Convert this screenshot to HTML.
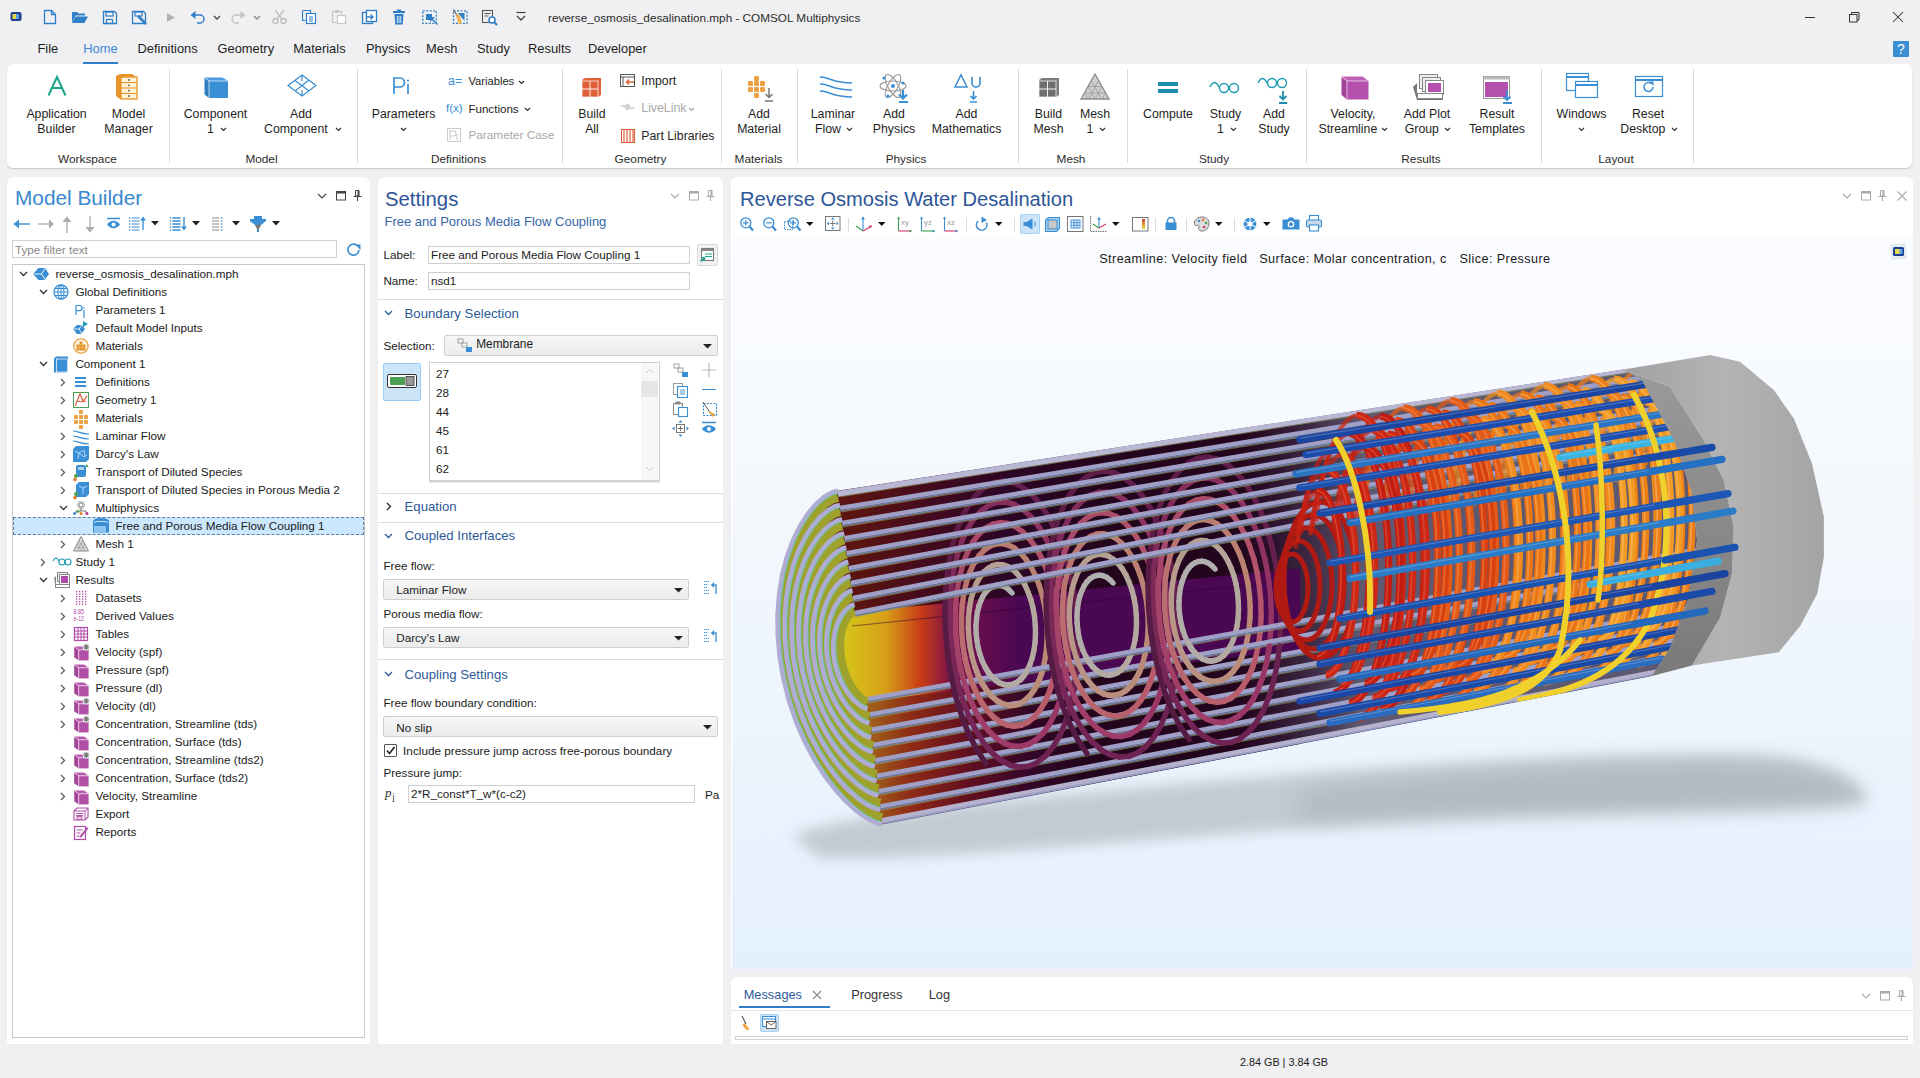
<!DOCTYPE html>
<html><head><meta charset="utf-8"><title>COMSOL</title>
<style>
html,body{margin:0;padding:0;}
body{width:1920px;height:1078px;overflow:hidden;position:relative;background:#f0f0f2;font-family:"Liberation Sans", sans-serif;}
.t{position:absolute;line-height:1;white-space:nowrap;}
svg{overflow:visible}
</style></head><body>
<svg style="position:absolute;left:10px;top:11px;" width="12" height="11" viewBox="0 0 12 11"><rect x="0.5" y="1" width="11" height="9" rx="2" fill="#1c3f8f"/><rect x="2.5" y="3" width="6" height="5" fill="#e8d84a"/><rect x="6" y="3" width="3" height="5" fill="#5aa0e0"/></svg><svg style="position:absolute;left:43px;top:9px;" width="14" height="16" viewBox="0 0 14 16"><path d="M1.5 1.5h7l4 4v9h-11z M8.5 1.5v4h4" fill="none" stroke="#2f7fc8" stroke-width="1.3"/></svg><svg style="position:absolute;left:71px;top:10px;" width="18" height="14" viewBox="0 0 18 14"><path d="M1 2h5l1.5 1.5H14v2H4.5L1 12.5z" fill="#2f7fc8"/><path d="M4.5 6.5H17L13.5 13H1z" fill="#2f7fc8"/></svg><svg style="position:absolute;left:102px;top:10px;" width="16" height="15" viewBox="0 0 16 15"><path d="M1.5 1.5h11l2 2v10h-13z" fill="none" stroke="#2f7fc8" stroke-width="1.3"/><rect x="4" y="2" width="7" height="4" fill="none" stroke="#2f7fc8" stroke-width="1.2"/><rect x="4.5" y="9.5" width="6" height="4" fill="none" stroke="#2f7fc8" stroke-width="1.2"/></svg><svg style="position:absolute;left:131px;top:10px;" width="18" height="16" viewBox="0 0 18 16"><path d="M1.5 1.5h11l2 2v10h-13z" fill="none" stroke="#2f7fc8" stroke-width="1.3"/><rect x="4" y="2" width="7" height="4" fill="none" stroke="#2f7fc8" stroke-width="1.2"/><path d="M7 6l8 8" stroke="#2f7fc8" stroke-width="2.5"/></svg><svg style="position:absolute;left:166px;top:12px;" width="10" height="11" viewBox="0 0 10 11"><path d="M1 1l8 4.5-8 4.5z" fill="#b4b4b4"/></svg><svg style="position:absolute;left:190px;top:10px;" width="16" height="14" viewBox="0 0 16 14"><path d="M4 5h6a4 4 0 010 8H7" fill="none" stroke="#2f7fc8" stroke-width="1.5"/><path d="M0.5 5l5-4v8z" fill="#2f7fc8"/></svg><svg style="position:absolute;left:213px;top:15px;" width="8" height="6" viewBox="0 0 8 6"><path d="M1 1l3 3 3-3" fill="none" stroke="#444" stroke-width="1.3"/></svg><svg style="position:absolute;left:230px;top:10px;" width="16" height="14" viewBox="0 0 16 14"><path d="M12 5H6a4 4 0 000 8h3" fill="none" stroke="#c4c4c4" stroke-width="1.5"/><path d="M15.5 5l-5-4v8z" fill="#c4c4c4"/></svg><svg style="position:absolute;left:253px;top:15px;" width="8" height="6" viewBox="0 0 8 6"><path d="M1 1l3 3 3-3" fill="none" stroke="#888" stroke-width="1.3"/></svg><svg style="position:absolute;left:272px;top:9px;" width="15" height="16" viewBox="0 0 15 16"><circle cx="3.5" cy="12" r="2.5" fill="none" stroke="#bdbdbd" stroke-width="1.3"/><circle cx="11.5" cy="12" r="2.5" fill="none" stroke="#bdbdbd" stroke-width="1.3"/><path d="M5 10L12 1M10 10L3 1" stroke="#bdbdbd" stroke-width="1.3"/></svg><svg style="position:absolute;left:301px;top:9px;" width="16" height="16" viewBox="0 0 16 16"><path d="M1.5 1.5h8v3" fill="none" stroke="#2f7fc8" stroke-width="1.1"/><path d="M1.5 1.5v10h3" fill="none" stroke="#2f7fc8" stroke-width="1.1"/><rect x="5.5" y="4.5" width="9" height="10" fill="#fff" stroke="#2f7fc8" stroke-width="1.2"/><path d="M8 8h4M8 10h4M8 12h4" stroke="#2f7fc8" stroke-width="1"/></svg><svg style="position:absolute;left:331px;top:9px;" width="16" height="16" viewBox="0 0 16 16"><rect x="1.5" y="2.5" width="9" height="11" fill="none" stroke="#c8c8c8" stroke-width="1.2"/><rect x="6.5" y="6.5" width="8" height="8" fill="#fff" stroke="#c8c8c8" stroke-width="1.2"/><rect x="4" y="1" width="4" height="3" fill="#c8c8c8"/></svg><svg style="position:absolute;left:361px;top:9px;" width="17" height="16" viewBox="0 0 17 16"><rect x="1.5" y="3.5" width="10" height="11" fill="none" stroke="#2f7fc8" stroke-width="1.3"/><rect x="5.5" y="1.5" width="10" height="11" fill="#fff" stroke="#2f7fc8" stroke-width="1.3"/><path d="M6 8h6M9.5 5.5L12 8l-2.5 2.5" fill="none" stroke="#2f7fc8" stroke-width="1.4"/></svg><svg style="position:absolute;left:392px;top:9px;" width="14" height="16" viewBox="0 0 14 16"><rect x="1" y="2" width="12" height="2" fill="#2f7fc8"/><rect x="5" y="0.5" width="4" height="2" fill="#2f7fc8"/><path d="M2.5 5h9l-0.8 10.5H3.3z" fill="#2f7fc8"/><path d="M5.3 7v7M7 7v7M8.7 7v7" stroke="#fff" stroke-width="0.8"/></svg><svg style="position:absolute;left:422px;top:9px;" width="17" height="16" viewBox="0 0 17 16"><rect x="0.8" y="1.8" width="13.5" height="12.5" fill="none" stroke="#2f7fc8" stroke-width="1.3" stroke-dasharray="2 1.5"/><rect x="4" y="5" width="6" height="6" fill="#2f7fc8"/><path d="M8 8l7.5 7.5" stroke="#2f7fc8" stroke-width="1.5"/><path d="M8 8h5l-5 5z" fill="#2f7fc8"/></svg><svg style="position:absolute;left:452px;top:9px;" width="17" height="17" viewBox="0 0 17 17"><rect x="1.5" y="1.8" width="13.5" height="12.5" fill="none" stroke="#2f7fc8" stroke-width="1.3" stroke-dasharray="2 1.5"/><path d="M6 4h6.5v8z" fill="#2f7fc8"/><path d="M1.5 0.5l4 7" stroke="#666" stroke-width="1.1"/><path d="M4 6.5l3 -1.5 3 9-3 1.5z" fill="#f0b050"/></svg><svg style="position:absolute;left:481px;top:9px;" width="17" height="17" viewBox="0 0 17 17"><rect x="1.5" y="1.5" width="10" height="12" fill="none" stroke="#555" stroke-width="1.1"/><path d="M3.5 4.5h6M3.5 7h4" stroke="#555" stroke-width="1"/><circle cx="11" cy="11" r="3" fill="#fff" stroke="#2f7fc8" stroke-width="1.5"/><path d="M13 13l3 3" stroke="#2f7fc8" stroke-width="2"/></svg><svg style="position:absolute;left:515px;top:11px;" width="12" height="11" viewBox="0 0 12 11"><path d="M1.5 1.5h9" stroke="#444" stroke-width="1.2"/><path d="M2 5l4 4 4-4" fill="none" stroke="#444" stroke-width="1.3"/></svg><div class="t" style="left:548.0px;top:12.1px;font-size:11.75px;color:#2b2b2b;">reverse_osmosis_desalination.mph - COMSOL Multiphysics</div><div style="position:absolute;left:1805px;top:17px;width:10px;height:1px;background:#333"></div><svg style="position:absolute;left:1848px;top:11px;" width="12" height="12" viewBox="0 0 12 12"><rect x="1.5" y="3.5" width="7.5" height="7.5" fill="none" stroke="#333" stroke-width="1"/><path d="M3.5 3.5v-2h7.5v7.5h-2" fill="none" stroke="#333" stroke-width="1"/></svg><svg style="position:absolute;left:1892px;top:11px;" width="12" height="12" viewBox="0 0 12 12"><path d="M1 1l10 10M11 1l-10 10" stroke="#333" stroke-width="1.05"/></svg><div style="position:absolute;left:1893px;top:41px;width:16px;height:16px;background:#3a8ed4;border-radius:1px"></div><div class="t" style="left:1893.0px;width:16px;text-align:center;top:42.1px;font-size:14px;color:#fff;">?</div><div class="t" style="left:37.5px;top:42.9px;font-size:12.9px;color:#1e1e1e;">File</div><div class="t" style="left:83.3px;top:42.9px;font-size:12.9px;color:#3e8ad6;">Home</div><div class="t" style="left:137.5px;top:42.9px;font-size:12.9px;color:#1e1e1e;">Definitions</div><div class="t" style="left:217.5px;top:42.9px;font-size:12.9px;color:#1e1e1e;">Geometry</div><div class="t" style="left:293.3px;top:42.9px;font-size:12.9px;color:#1e1e1e;">Materials</div><div class="t" style="left:366.0px;top:42.9px;font-size:12.9px;color:#1e1e1e;">Physics</div><div class="t" style="left:426.0px;top:42.9px;font-size:12.9px;color:#1e1e1e;">Mesh</div><div class="t" style="left:477.0px;top:42.9px;font-size:12.9px;color:#1e1e1e;">Study</div><div class="t" style="left:528.0px;top:42.9px;font-size:12.9px;color:#1e1e1e;">Results</div><div class="t" style="left:588.0px;top:42.9px;font-size:12.9px;color:#1e1e1e;">Developer</div><div style="position:absolute;left:83px;top:62px;width:35px;height:2px;background:#2f80c9"></div><div style="position:absolute;left:7px;top:64px;width:1905px;height:104px;background:#fff;border-radius:6px;box-shadow:0 1px 1.5px rgba(0,0,0,0.18)"></div><div style="position:absolute;left:169px;top:69px;width:1px;height:94px;background:#dadada"></div><div style="position:absolute;left:357px;top:69px;width:1px;height:94px;background:#dadada"></div><div style="position:absolute;left:562px;top:69px;width:1px;height:94px;background:#dadada"></div><div style="position:absolute;left:721px;top:69px;width:1px;height:94px;background:#dadada"></div><div style="position:absolute;left:797px;top:69px;width:1px;height:94px;background:#dadada"></div><div style="position:absolute;left:1018px;top:69px;width:1px;height:94px;background:#dadada"></div><div style="position:absolute;left:1127px;top:69px;width:1px;height:94px;background:#dadada"></div><div style="position:absolute;left:1306px;top:69px;width:1px;height:94px;background:#dadada"></div><div style="position:absolute;left:1541px;top:69px;width:1px;height:94px;background:#dadada"></div><div style="position:absolute;left:1693px;top:69px;width:1px;height:94px;background:#dadada"></div><div class="t" style="left:-13.5px;width:140px;text-align:center;top:107.9px;font-size:12.3px;color:#1e1e1e;">Application</div><div class="t" style="left:-13.5px;width:140px;text-align:center;top:122.5px;font-size:12.3px;color:#1e1e1e;">Builder</div><div class="t" style="left:58.5px;width:140px;text-align:center;top:107.9px;font-size:12.3px;color:#1e1e1e;">Model</div><div class="t" style="left:58.5px;width:140px;text-align:center;top:122.5px;font-size:12.3px;color:#1e1e1e;">Manager</div><div class="t" style="left:145.5px;width:140px;text-align:center;top:107.9px;font-size:12.3px;color:#1e1e1e;">Component</div><div class="t" style="left:145.5px;width:140px;text-align:center;top:122.5px;font-size:12.3px;color:#1e1e1e;">1&nbsp;&nbsp;&nbsp;</div><svg style="position:absolute;left:220px;top:127px;" width="7" height="5" viewBox="0 0 7 5"><path d="M1 1l2.5 2.5L6 1" fill="none" stroke="#333" stroke-width="1.2"/></svg><div class="t" style="left:231.0px;width:140px;text-align:center;top:107.9px;font-size:12.3px;color:#1e1e1e;">Add</div><div class="t" style="left:231.0px;width:140px;text-align:center;top:122.5px;font-size:12.3px;color:#1e1e1e;">Component&nbsp;&nbsp;&nbsp;</div><svg style="position:absolute;left:334.5px;top:127px;" width="7" height="5" viewBox="0 0 7 5"><path d="M1 1l2.5 2.5L6 1" fill="none" stroke="#333" stroke-width="1.2"/></svg><div class="t" style="left:333.5px;width:140px;text-align:center;top:107.9px;font-size:12.3px;color:#1e1e1e;">Parameters</div><svg style="position:absolute;left:400px;top:127px;" width="7" height="5" viewBox="0 0 7 5"><path d="M1 1l2.5 2.5L6 1" fill="none" stroke="#333" stroke-width="1.2"/></svg><div class="t" style="left:468.4px;top:76.0px;font-size:11.2px;color:#1e1e1e;">Variables</div><svg style="position:absolute;left:517.5px;top:80px;" width="7" height="5" viewBox="0 0 7 5"><path d="M1 1l2.5 2.5L6 1" fill="none" stroke="#333" stroke-width="1.2"/></svg><div class="t" style="left:468.4px;top:102.8px;font-size:11.6px;color:#1e1e1e;">Functions</div><svg style="position:absolute;left:524px;top:107px;" width="7" height="5" viewBox="0 0 7 5"><path d="M1 1l2.5 2.5L6 1" fill="none" stroke="#333" stroke-width="1.2"/></svg><div class="t" style="left:468.4px;top:130.3px;font-size:11.8px;color:#a9a9a9;">Parameter Case</div><div class="t" style="left:522.0px;width:140px;text-align:center;top:107.9px;font-size:12.3px;color:#1e1e1e;">Build</div><div class="t" style="left:522.0px;width:140px;text-align:center;top:122.5px;font-size:12.3px;color:#1e1e1e;">All</div><div class="t" style="left:641.3px;top:75.1px;font-size:12.3px;color:#1e1e1e;">Import</div><div class="t" style="left:641.3px;top:102.2px;font-size:12.3px;color:#a9a9a9;">LiveLink</div><svg style="position:absolute;left:688px;top:107px;" width="7" height="5" viewBox="0 0 7 5"><path d="M1 1l2.5 2.5L6 1" fill="none" stroke="#aaa" stroke-width="1.2"/></svg><div class="t" style="left:641.3px;top:129.9px;font-size:12.3px;color:#1e1e1e;">Part Libraries</div><div class="t" style="left:689.0px;width:140px;text-align:center;top:107.9px;font-size:12.3px;color:#1e1e1e;">Add</div><div class="t" style="left:689.0px;width:140px;text-align:center;top:122.5px;font-size:12.3px;color:#1e1e1e;">Material</div><div class="t" style="left:763.0px;width:140px;text-align:center;top:107.9px;font-size:12.3px;color:#1e1e1e;">Laminar</div><div class="t" style="left:763.0px;width:140px;text-align:center;top:122.5px;font-size:12.3px;color:#1e1e1e;">Flow&nbsp;&nbsp;&nbsp;</div><svg style="position:absolute;left:846px;top:127px;" width="7" height="5" viewBox="0 0 7 5"><path d="M1 1l2.5 2.5L6 1" fill="none" stroke="#333" stroke-width="1.2"/></svg><div class="t" style="left:824.0px;width:140px;text-align:center;top:107.9px;font-size:12.3px;color:#1e1e1e;">Add</div><div class="t" style="left:824.0px;width:140px;text-align:center;top:122.5px;font-size:12.3px;color:#1e1e1e;">Physics</div><div class="t" style="left:896.5px;width:140px;text-align:center;top:107.9px;font-size:12.3px;color:#1e1e1e;">Add</div><div class="t" style="left:896.5px;width:140px;text-align:center;top:122.5px;font-size:12.3px;color:#1e1e1e;">Mathematics</div><div class="t" style="left:978.5px;width:140px;text-align:center;top:107.9px;font-size:12.3px;color:#1e1e1e;">Build</div><div class="t" style="left:978.5px;width:140px;text-align:center;top:122.5px;font-size:12.3px;color:#1e1e1e;">Mesh</div><div class="t" style="left:1025.0px;width:140px;text-align:center;top:107.9px;font-size:12.3px;color:#1e1e1e;">Mesh</div><div class="t" style="left:1025.0px;width:140px;text-align:center;top:122.5px;font-size:12.3px;color:#1e1e1e;">1&nbsp;&nbsp;&nbsp;</div><svg style="position:absolute;left:1099px;top:127px;" width="7" height="5" viewBox="0 0 7 5"><path d="M1 1l2.5 2.5L6 1" fill="none" stroke="#333" stroke-width="1.2"/></svg><div class="t" style="left:1098.0px;width:140px;text-align:center;top:107.9px;font-size:12.3px;color:#1e1e1e;">Compute</div><div class="t" style="left:1155.5px;width:140px;text-align:center;top:107.9px;font-size:12.3px;color:#1e1e1e;">Study</div><div class="t" style="left:1155.5px;width:140px;text-align:center;top:122.5px;font-size:12.3px;color:#1e1e1e;">1&nbsp;&nbsp;&nbsp;</div><svg style="position:absolute;left:1229.5px;top:127px;" width="7" height="5" viewBox="0 0 7 5"><path d="M1 1l2.5 2.5L6 1" fill="none" stroke="#333" stroke-width="1.2"/></svg><div class="t" style="left:1204.0px;width:140px;text-align:center;top:107.9px;font-size:12.3px;color:#1e1e1e;">Add</div><div class="t" style="left:1204.0px;width:140px;text-align:center;top:122.5px;font-size:12.3px;color:#1e1e1e;">Study</div><div class="t" style="left:1283.0px;width:140px;text-align:center;top:107.9px;font-size:12.3px;color:#1e1e1e;">Velocity,</div><div class="t" style="left:1283.0px;width:140px;text-align:center;top:122.5px;font-size:12.3px;color:#1e1e1e;">Streamline&nbsp;&nbsp;&nbsp;</div><svg style="position:absolute;left:1381px;top:127px;" width="7" height="5" viewBox="0 0 7 5"><path d="M1 1l2.5 2.5L6 1" fill="none" stroke="#333" stroke-width="1.2"/></svg><div class="t" style="left:1357.0px;width:140px;text-align:center;top:107.9px;font-size:12.3px;color:#1e1e1e;">Add Plot</div><div class="t" style="left:1357.0px;width:140px;text-align:center;top:122.5px;font-size:12.3px;color:#1e1e1e;">Group&nbsp;&nbsp;&nbsp;</div><svg style="position:absolute;left:1444px;top:127px;" width="7" height="5" viewBox="0 0 7 5"><path d="M1 1l2.5 2.5L6 1" fill="none" stroke="#333" stroke-width="1.2"/></svg><div class="t" style="left:1427.0px;width:140px;text-align:center;top:107.9px;font-size:12.3px;color:#1e1e1e;">Result</div><div class="t" style="left:1427.0px;width:140px;text-align:center;top:122.5px;font-size:12.3px;color:#1e1e1e;">Templates</div><div class="t" style="left:1511.5px;width:140px;text-align:center;top:107.9px;font-size:12.3px;color:#1e1e1e;">Windows</div><svg style="position:absolute;left:1578px;top:127px;" width="7" height="5" viewBox="0 0 7 5"><path d="M1 1l2.5 2.5L6 1" fill="none" stroke="#333" stroke-width="1.2"/></svg><div class="t" style="left:1578.0px;width:140px;text-align:center;top:107.9px;font-size:12.3px;color:#1e1e1e;">Reset</div><div class="t" style="left:1578.0px;width:140px;text-align:center;top:122.5px;font-size:12.3px;color:#1e1e1e;">Desktop&nbsp;&nbsp;&nbsp;</div><svg style="position:absolute;left:1671px;top:127px;" width="7" height="5" viewBox="0 0 7 5"><path d="M1 1l2.5 2.5L6 1" fill="none" stroke="#333" stroke-width="1.2"/></svg><div class="t" style="left:27.5px;width:120px;text-align:center;top:153.8px;font-size:11.8px;color:#2a2a2a;">Workspace</div><div class="t" style="left:201.5px;width:120px;text-align:center;top:153.8px;font-size:11.8px;color:#2a2a2a;">Model</div><div class="t" style="left:398.5px;width:120px;text-align:center;top:153.8px;font-size:11.8px;color:#2a2a2a;">Definitions</div><div class="t" style="left:580.5px;width:120px;text-align:center;top:153.8px;font-size:11.8px;color:#2a2a2a;">Geometry</div><div class="t" style="left:698.5px;width:120px;text-align:center;top:153.8px;font-size:11.8px;color:#2a2a2a;">Materials</div><div class="t" style="left:846.0px;width:120px;text-align:center;top:153.8px;font-size:11.8px;color:#2a2a2a;">Physics</div><div class="t" style="left:1011.0px;width:120px;text-align:center;top:153.8px;font-size:11.8px;color:#2a2a2a;">Mesh</div><div class="t" style="left:1154.0px;width:120px;text-align:center;top:153.8px;font-size:11.8px;color:#2a2a2a;">Study</div><div class="t" style="left:1361.0px;width:120px;text-align:center;top:153.8px;font-size:11.8px;color:#2a2a2a;">Results</div><div class="t" style="left:1556.0px;width:120px;text-align:center;top:153.8px;font-size:11.8px;color:#2a2a2a;">Layout</div><svg style="position:absolute;left:47px;top:76px;" width="20" height="20" viewBox="0 0 20 20"><path d="M1.5 19.5L10 1l8.5 18.5M5 12h10" fill="none" stroke="#1aa58a" stroke-width="2"/></svg><svg style="position:absolute;left:115px;top:73px;" width="25" height="27" viewBox="0 0 25 27"><path d="M1 3l4-2h12l4 3v22H5l-4-3z" fill="#e8922a"/><rect x="6" y="4" width="16" height="22" fill="#fff3d6" stroke="#e8922a" stroke-width="1.3"/><path d="M6 9.5h16M6 15h16M6 20.5h16" stroke="#e8922a" stroke-width="1.2"/><circle cx="14" cy="7" r="0.9" fill="#555"/><circle cx="14" cy="12.3" r="0.9" fill="#555"/><circle cx="14" cy="17.7" r="0.9" fill="#555"/><circle cx="14" cy="23" r="0.9" fill="#555"/></svg><svg style="position:absolute;left:204px;top:75px;" width="25" height="24" viewBox="0 0 25 24"><path d="M0.5 2.5L5 6V23L0.5 19.5Z" fill="#2f7cc0"/><path d="M0.5 2.5H18.5L24 6H5Z" fill="#4a9ae0"/><rect x="5" y="6" width="19" height="17" fill="#3a8ed4"/><path d="M0.5 2.5L5 6V23M5 6H24" fill="none" stroke="#d8ecff" stroke-width="0.8"/></svg><svg style="position:absolute;left:287px;top:74px;" width="30" height="23" viewBox="0 0 30 23"><path d="M15 1L29 11.5 15 22 1 11.5z M8 6.5L22 17M22 6L8 17 M15 1v6M15 16v6" fill="none" stroke="#3a8ed4" stroke-width="1.2"/></svg><svg style="position:absolute;left:392px;top:76px;" width="20" height="20" viewBox="0 0 20 20"><path d="M2 18V2h6a4.5 4.5 0 010 9H2" fill="none" stroke="#3a8ed4" stroke-width="1.7"/><path d="M16 8v10" stroke="#3a8ed4" stroke-width="1.7"/><circle cx="16" cy="4.5" r="1.1" fill="#3a8ed4"/></svg><div class="t" style="left:448.0px;top:74.7px;font-size:12.5px;color:#3a8ed4;">a=</div><div class="t" style="left:446.0px;top:102.6px;font-size:11.5px;color:#3a8ed4;">f(x)</div><svg style="position:absolute;left:447px;top:128px;" width="15" height="15" viewBox="0 0 15 15"><rect x="0.5" y="0.5" width="13" height="13" fill="none" stroke="#ccc"/><path d="M3 12V3h3.5a2.5 2.5 0 010 5H3M10 6v6" fill="none" stroke="#ccc" stroke-width="1.1"/></svg><svg style="position:absolute;left:581px;top:77px;" width="21" height="20" viewBox="0 0 21 20"><path d="M1 3l3-2h16v17l-3 2H1z" fill="#e0603a"/><rect x="1" y="4" width="16" height="16" fill="#e0603a" stroke="#fff" stroke-width="0.7"/><path d="M9 4v16M1 12h16" stroke="#fff" stroke-width="0.9"/></svg><svg style="position:absolute;left:620px;top:74px;" width="15" height="13" viewBox="0 0 15 13"><rect x="0.5" y="0.5" width="14" height="12" fill="none" stroke="#555" stroke-width="1"/><path d="M0.5 3h14M3 3v9.5" stroke="#555" stroke-width="1"/><path d="M14 8H7M9 5.5L6.5 8 9 10.5" fill="none" stroke="#e0603a" stroke-width="1.4"/></svg><svg style="position:absolute;left:620px;top:101px;" width="15" height="12" viewBox="0 0 15 12"><path d="M1 5h8l-2-2M14 7H6l2 2" fill="none" stroke="#c8c8c8" stroke-width="1.6"/></svg><svg style="position:absolute;left:621px;top:128px;" width="14" height="15" viewBox="0 0 14 15"><rect x="0.5" y="1.5" width="13" height="13" fill="none" stroke="#e0603a" stroke-width="1"/><path d="M3 2v12M6 2v12M9 2v12M12 2v12" stroke="#e0603a" stroke-width="1.2"/></svg><svg style="position:absolute;left:748px;top:76px;" width="27" height="27" viewBox="0 0 27 27"><rect x="6" y="0" width="5" height="5" rx="1.3" fill="#eea044"/><rect x="0" y="5" width="5" height="5" rx="1.3" fill="#eea044"/><rect x="6" y="5" width="5" height="5" rx="1.3" fill="#eea044"/><rect x="12" y="5" width="5" height="5" rx="1.3" fill="#eea044"/><rect x="0" y="11" width="5" height="5" rx="1.3" fill="#eea044"/><rect x="6" y="11" width="5" height="5" rx="1.3" fill="#eea044"/><rect x="12" y="11" width="5" height="5" rx="1.3" fill="#eea044"/><rect x="6" y="17" width="5" height="5" rx="1.3" fill="#eea044"/><path d="M21 12v9M17.5 18l3.5 3.5 3.5-3.5M17 25h8" fill="none" stroke="#777" stroke-width="1.5"/></svg><svg style="position:absolute;left:819px;top:75px;" width="34" height="24" viewBox="0 0 34 24"><path d="M1 2c10 0 12 6 32 6M1 9c10 0 12 6 32 6M1 16c10 0 12 6 32 6" fill="none" stroke="#3a8ed4" stroke-width="1.5"/></svg><svg style="position:absolute;left:879px;top:72px;" width="32" height="32" viewBox="0 0 32 32"><ellipse cx="14" cy="14" rx="13" ry="5" fill="none" stroke="#999" stroke-width="1.1"/><ellipse cx="14" cy="14" rx="13" ry="5" transform="rotate(60 14 14)" fill="none" stroke="#999" stroke-width="1.1"/><ellipse cx="14" cy="14" rx="13" ry="5" transform="rotate(-60 14 14)" fill="none" stroke="#999" stroke-width="1.1"/><circle cx="14" cy="14" r="2" fill="#3a8ed4"/><circle cx="5" cy="6" r="1.6" fill="#3a8ed4"/><circle cx="24" cy="11" r="1.6" fill="#3a8ed4"/><circle cx="9" cy="24" r="1.6" fill="#3a8ed4"/><path d="M24 18v8M20 22.5l4 4 4-4M20 30h9" fill="none" stroke="#3a8ed4" stroke-width="2.2"/></svg><svg style="position:absolute;left:953px;top:73px;" width="30" height="30" viewBox="0 0 30 30"><path d="M2 14L8 2l6 12z" fill="none" stroke="#3a8ed4" stroke-width="1.5"/><path d="M19 4v6a4 4 0 008 0V4" fill="none" stroke="#3a8ed4" stroke-width="1.6"/><path d="M20.5 18v8M17.5 23l3 3 3-3M17 29h7" fill="none" stroke="#3a8ed4" stroke-width="1.6"/></svg><svg style="position:absolute;left:1038px;top:77px;" width="22" height="21" viewBox="0 0 22 21"><path d="M1 3l3-2h17v17l-3 2H1z" fill="#7b7b7b"/><rect x="1" y="4" width="17" height="16" fill="#6f6f6f" stroke="#fff" stroke-width="0.7"/><path d="M9.5 4v16M1 12h17" stroke="#fff" stroke-width="0.9"/></svg><svg style="position:absolute;left:1080px;top:73px;" width="30" height="28" viewBox="0 0 30 28"><path d="M15 1L29 26H1z" fill="#d0d0d0" stroke="#8a8a8a" stroke-width="1.3"/><path d="M8 13.5h14M4.5 20h21M11.5 7.5l10 18.5M18.5 7.5l-10 18.5M8 13.5l7 12.5M22 13.5l-7 12.5M4.5 20l3.5 6M25.5 20l-3.5 6" stroke="#999" stroke-width="0.8"/></svg><svg style="position:absolute;left:1158px;top:82px;" width="20" height="12" viewBox="0 0 20 12"><rect x="0" y="0" width="20" height="4" fill="#1d8fae"/><rect x="0" y="7" width="20" height="4" fill="#1d8fae"/></svg><svg style="position:absolute;left:1209px;top:79px;" width="32" height="16" viewBox="0 0 32 16"><path d="M1 8c3-6 6-6 9 0" fill="none" stroke="#1d9bb5" stroke-width="1.4"/><circle cx="15" cy="9" r="4.5" fill="none" stroke="#1d9bb5" stroke-width="1.4"/><circle cx="25" cy="9" r="4.5" fill="none" stroke="#1d9bb5" stroke-width="1.4"/><path d="M19.5 9h1" stroke="#1d9bb5" stroke-width="1.4"/></svg><svg style="position:absolute;left:1257px;top:75px;" width="32" height="30" viewBox="0 0 32 30"><path d="M1 8c3-6 6-6 9 0" fill="none" stroke="#1d9bb5" stroke-width="1.4"/><circle cx="15" cy="8" r="4.5" fill="none" stroke="#1d9bb5" stroke-width="1.4"/><circle cx="25" cy="8" r="4.5" fill="none" stroke="#1d9bb5" stroke-width="1.4"/><path d="M19.5 9h1" stroke="#1d9bb5" stroke-width="1.4"/><path d="M26 16v8M22.5 21l3.5 3.5 3.5-3.5M22 28h8" fill="none" stroke="#1d8fae" stroke-width="1.8"/></svg><svg style="position:absolute;left:1341px;top:74px;" width="28" height="26" viewBox="0 0 28 26"><path d="M0.5 2.5L6 7V25.5L0.5 21Z" fill="#a0449a"/><path d="M0.5 2.5H21.5L27.5 7H6Z" fill="#c060b8"/><rect x="6" y="7" width="21.5" height="18.5" fill="#b54fad"/><path d="M0.5 2.5L6 7V25.5M6 7H27.5" fill="none" stroke="#f4d8f0" stroke-width="0.8"/></svg><svg style="position:absolute;left:1413px;top:73px;" width="31" height="27" viewBox="0 0 31 27"><path d="M0 14l4-4v12h26v5H4z" fill="#777"/><rect x="6.5" y="1.5" width="18" height="14" fill="#eee" stroke="#888"/><rect x="9.5" y="4.5" width="18" height="14" fill="#eee" stroke="#888"/><rect x="12.5" y="7.5" width="18" height="14" fill="#fff" stroke="#888"/><rect x="15" y="10" width="13" height="9" fill="#b54fad"/><rect x="4.5" y="20.5" width="25" height="5" fill="#fff" stroke="#888"/></svg><svg style="position:absolute;left:1483px;top:76px;" width="32" height="28" viewBox="0 0 32 28"><rect x="0.5" y="0.5" width="26" height="22" fill="#fff" stroke="#999"/><rect x="0.5" y="0.5" width="26" height="3" fill="#bbb"/><rect x="2" y="6" width="23" height="15" fill="#b54fad"/><path d="M24 14v10M20.5 20.5l3.5 3.5 3.5-3.5M20 27h9" fill="none" stroke="#3a8ed4" stroke-width="1.8"/></svg><svg style="position:absolute;left:1566px;top:73px;" width="33" height="26" viewBox="0 0 33 26"><rect x="0.5" y="0.5" width="22" height="17" fill="#fff" stroke="#3a8ed4" stroke-width="1.2"/><path d="M0.5 4h22" stroke="#3a8ed4" stroke-width="2"/><rect x="9.5" y="8.5" width="22" height="16" fill="#fff" stroke="#3a8ed4" stroke-width="1.2"/><path d="M9.5 12h22" stroke="#3a8ed4" stroke-width="2"/></svg><svg style="position:absolute;left:1635px;top:76px;" width="29" height="22" viewBox="0 0 29 22"><rect x="0.5" y="0.5" width="27" height="20" fill="#fff" stroke="#3a8ed4" stroke-width="1.2"/><path d="M0.5 4h27" stroke="#3a8ed4" stroke-width="2"/><path d="M18 11a4.5 4.5 0 11-2-3.8" fill="none" stroke="#3a8ed4" stroke-width="1.5"/><path d="M14 5.5h4.5v4.5z" fill="#3a8ed4"/></svg><div style="position:absolute;left:7px;top:177px;width:363px;height:867px;background:#fff;border-radius:6px 6px 1px 1px;box-shadow:0 0 1px rgba(0,0,0,0.08)"></div><div class="t" style="left:15.0px;top:188.4px;font-size:20.8px;color:#3a88cf;">Model Builder</div><svg style="position:absolute;left:317.4px;top:192.5px;" width="10" height="7" viewBox="0 0 10 7"><path d="M1 1l4 4 4-4" fill="none" stroke="#444" stroke-width="1.1"/></svg><svg style="position:absolute;left:336.4px;top:191px;" width="10" height="9" viewBox="0 0 10 9"><rect x="0.5" y="0.5" width="9" height="8.5" fill="none" stroke="#444" stroke-width="1"/><rect x="0.5" y="0.5" width="9" height="2" fill="#444"/></svg><svg style="position:absolute;left:353.4px;top:190px;" width="9" height="11" viewBox="0 0 9 11"><path d="M2.5 0.5h3.5v5.5H2.5z" fill="none" stroke="#444" stroke-width="1"/><path d="M5.3 0.5v5.5" stroke="#444" stroke-width="1.6"/><path d="M0.5 6.5h8M4.5 7v4" stroke="#444" stroke-width="1.1"/></svg><svg style="position:absolute;left:13px;top:217px;" width="18" height="14" viewBox="0 0 18 14"><path d="M4 7h13" stroke="#3a8ed4" stroke-width="1.4"/><path d="M0.5 7L6 2.5v9z" fill="#3a8ed4"/></svg><svg style="position:absolute;left:37px;top:217px;" width="18" height="14" viewBox="0 0 18 14"><path d="M1 7h12" stroke="#aaa" stroke-width="1.3"/><path d="M17 7l-5-4.5v9z" fill="#aaa"/></svg><svg style="position:absolute;left:61px;top:216px;" width="12" height="17" viewBox="0 0 12 17"><path d="M6 5v12" stroke="#aaa" stroke-width="1.3"/><path d="M6 0.5L1.5 6h9z" fill="#aaa"/></svg><svg style="position:absolute;left:84px;top:216px;" width="12" height="17" viewBox="0 0 12 17"><path d="M6 0v12" stroke="#aaa" stroke-width="1.3"/><path d="M6 16.5L1.5 11h9z" fill="#aaa"/></svg><svg style="position:absolute;left:106px;top:217px;" width="15" height="13" viewBox="0 0 15 13"><path d="M1 1.5h13" stroke="#3a8ed4" stroke-width="1.5"/><path d="M1 7.5c4-5 9-5 13 0c-4 5-9 5-13 0z" fill="#3a8ed4"/><circle cx="7.5" cy="7.5" r="2" fill="#fff"/></svg><svg style="position:absolute;left:129px;top:216px;" width="19" height="15" viewBox="0 0 19 15"><path d="M0 2h1.2M0 5h1.2M0 8h1.2M0 11h1.2M0 14h1.2" stroke="#3a8ed4" stroke-width="1.3"/><path d="M2.5 2h8M2.5 5h8M2.5 8h8M2.5 11h8M2.5 14h8" stroke="#3a8ed4" stroke-width="1.1"/><path d="M14 3v11" stroke="#3a8ed4" stroke-width="1.4"/><path d="M14 0.5l-3 4h6z" fill="#3a8ed4"/></svg><svg style="position:absolute;left:151px;top:221px;" width="8" height="5" viewBox="0 0 8 5"><path d="M0 0h8L4 4.5z" fill="#222"/></svg><svg style="position:absolute;left:170px;top:216px;" width="19" height="15" viewBox="0 0 19 15"><path d="M0 2h1.2M0 5h1.2M0 8h1.2M0 11h1.2M0 14h1.2" stroke="#3a8ed4" stroke-width="1.3"/><path d="M2.5 2h8M2.5 5h8M2.5 8h8M2.5 11h8M2.5 14h8" stroke="#3a8ed4" stroke-width="1.6"/><path d="M14 1v11" stroke="#3a8ed4" stroke-width="1.4"/><path d="M14 14.5l-3-4h6z" fill="#3a8ed4"/></svg><svg style="position:absolute;left:192px;top:221px;" width="8" height="5" viewBox="0 0 8 5"><path d="M0 0h8L4 4.5z" fill="#222"/></svg><svg style="position:absolute;left:211px;top:216px;" width="13" height="15" viewBox="0 0 13 15"><path d="M1 2h7M1 5h7M1 8h7M1 11h7M1 14h7" stroke="#888" stroke-width="1.2"/><path d="M9.5 2h2M9.5 5h2M9.5 8h2M9.5 11h2M9.5 14h2" stroke="#3a8ed4" stroke-width="1.2"/></svg><svg style="position:absolute;left:232px;top:221px;" width="8" height="5" viewBox="0 0 8 5"><path d="M0 0h8L4 4.5z" fill="#222"/></svg><svg style="position:absolute;left:250px;top:216px;" width="17" height="17" viewBox="0 0 17 17"><path d="M0 3h16v2l-5 4H5L0 5z" fill="#3a8ed4"/><path d="M5 9h6l-2 4H7z" fill="#777"/><rect x="7" y="13" width="2" height="3" fill="#3a8ed4"/><rect x="4" y="0" width="8" height="4" fill="#3a8ed4"/></svg><svg style="position:absolute;left:272px;top:221px;" width="8" height="5" viewBox="0 0 8 5"><path d="M0 0h8L4 4.5z" fill="#222"/></svg><div style="position:absolute;left:12px;top:240px;width:325px;height:18px;box-sizing:border-box;border:1px solid #cfcfcf;background:#fff"></div><div class="t" style="left:15.0px;top:243.6px;font-size:11.7px;color:#8a8a8a;">Type filter text</div><svg style="position:absolute;left:346px;top:242px;" width="16" height="15" viewBox="0 0 16 15"><path d="M13 8a5.5 5.5 0 11-2-4.6" fill="none" stroke="#3a8ed4" stroke-width="1.6"/><path d="M9 2.5h5.5V8z" fill="#3a8ed4"/></svg><div style="position:absolute;left:12px;top:264px;width:353px;height:774px;box-sizing:border-box;border:1px solid #c8c8c8"></div><svg style="position:absolute;left:18.5px;top:271.40000000000003px;" width="9" height="6" viewBox="0 0 9 6"><path d="M1 1l3.5 3.5L8 1" fill="none" stroke="#333" stroke-width="1.3"/></svg><svg style="position:absolute;left:33px;top:265.8px;" width="17" height="17" viewBox="0 0 17 17"><path d="M0 8L5.5 2h6.5l4 6-4.5 6H5.5z" fill="#3a8ed4"/><path d="M0.5 8h8l3.5 5.5M8.5 8l3.5-5.5" fill="none" stroke="#fff" stroke-width="0.9"/></svg><div class="t" style="left:55.4px;top:267.9px;font-size:11.7px;color:#1a1a1a;">reverse_osmosis_desalination.mph</div><svg style="position:absolute;left:38.5px;top:289.40000000000003px;" width="9" height="6" viewBox="0 0 9 6"><path d="M1 1l3.5 3.5L8 1" fill="none" stroke="#333" stroke-width="1.3"/></svg><svg style="position:absolute;left:53px;top:283.8px;" width="17" height="17" viewBox="0 0 17 17"><circle cx="8" cy="8" r="7" fill="none" stroke="#3a8ed4" stroke-width="1.3"/><ellipse cx="8" cy="8" rx="3" ry="7" fill="none" stroke="#3a8ed4" stroke-width="1.1"/><path d="M1 8h14M2 4.5h12M2 11.5h12M8 1v14" stroke="#3a8ed4" stroke-width="1"/></svg><div class="t" style="left:75.4px;top:285.9px;font-size:11.7px;color:#1a1a1a;">Global Definitions</div><svg style="position:absolute;left:73px;top:301.8px;" width="17" height="17" viewBox="0 0 17 17"><path d="M3 13V3.5h3.5a2.6 2.6 0 010 5.2H3" fill="none" stroke="#3a8ed4" stroke-width="1.2"/><path d="M11 8v8" stroke="#3a8ed4" stroke-width="1.2"/><circle cx="11" cy="5.8" r="0.8" fill="#3a8ed4"/></svg><div class="t" style="left:95.4px;top:303.9px;font-size:11.7px;color:#1a1a1a;">Parameters 1</div><svg style="position:absolute;left:73px;top:319.8px;" width="17" height="17" viewBox="0 0 17 17"><path d="M0 9l4-4h5l3 4-4 5H4z" fill="#3a8ed4"/><path d="M0 9h6l2.5 4.5M6 9l3-4" fill="none" stroke="#fff" stroke-width="0.8"/><path d="M10 1l5 3-5 3z" fill="#1d9bb5"/></svg><div class="t" style="left:95.4px;top:321.9px;font-size:11.7px;color:#1a1a1a;">Default Model Inputs</div><svg style="position:absolute;left:73px;top:337.8px;" width="17" height="17" viewBox="0 0 17 17"><circle cx="8" cy="8" r="7.2" fill="#fff6e6" stroke="#e8922a" stroke-width="1.1"/><rect x="6.5" y="3.5" width="3" height="3" fill="#e8922a"/><rect x="3.5" y="6.5" width="3" height="3" fill="#e8922a"/><rect x="6.5" y="6.5" width="3" height="3" fill="#e8922a"/><rect x="9.5" y="6.5" width="3" height="3" fill="#e8922a"/><rect x="6.5" y="9.5" width="3" height="3" fill="#e8922a"/><rect x="3.5" y="9.5" width="3" height="3" fill="#e8922a"/><rect x="9.5" y="9.5" width="3" height="3" fill="#e8922a"/></svg><div class="t" style="left:95.4px;top:339.9px;font-size:11.7px;color:#1a1a1a;">Materials</div><svg style="position:absolute;left:38.5px;top:361.40000000000003px;" width="9" height="6" viewBox="0 0 9 6"><path d="M1 1l3.5 3.5L8 1" fill="none" stroke="#333" stroke-width="1.3"/></svg><svg style="position:absolute;left:53px;top:355.8px;" width="17" height="17" viewBox="0 0 17 17"><path d="M1 2.5l2-2h12v14l-2 2H1z" fill="#3a8ed4"/><rect x="3.5" y="3" width="11" height="13" fill="#3a8ed4" stroke="#fff" stroke-width="0.7"/></svg><div class="t" style="left:75.4px;top:357.9px;font-size:11.7px;color:#1a1a1a;">Component 1</div><svg style="position:absolute;left:59.5px;top:377.90000000000003px;" width="6" height="9" viewBox="0 0 6 9"><path d="M1 1l3.5 3.5L1 8" fill="none" stroke="#555" stroke-width="1.2"/></svg><svg style="position:absolute;left:73px;top:373.8px;" width="17" height="17" viewBox="0 0 17 17"><path d="M2 4h11M2 8h11M2 12h11" stroke="#3a8ed4" stroke-width="2"/></svg><div class="t" style="left:95.4px;top:375.9px;font-size:11.7px;color:#1a1a1a;">Definitions</div><svg style="position:absolute;left:59.5px;top:395.90000000000003px;" width="6" height="9" viewBox="0 0 6 9"><path d="M1 1l3.5 3.5L1 8" fill="none" stroke="#555" stroke-width="1.2"/></svg><svg style="position:absolute;left:73px;top:391.8px;" width="17" height="17" viewBox="0 0 17 17"><rect x="0.5" y="0.5" width="15" height="15" fill="#fff" stroke="#4aa050" stroke-width="1"/><path d="M2 14L7 2l3 7 4-5M4 9c3 1 6 1 9 0" fill="none" stroke="#e05a3a" stroke-width="1.2"/></svg><div class="t" style="left:95.4px;top:393.9px;font-size:11.7px;color:#1a1a1a;">Geometry 1</div><svg style="position:absolute;left:59.5px;top:413.90000000000003px;" width="6" height="9" viewBox="0 0 6 9"><path d="M1 1l3.5 3.5L1 8" fill="none" stroke="#555" stroke-width="1.2"/></svg><svg style="position:absolute;left:73px;top:409.8px;" width="17" height="17" viewBox="0 0 17 17"><rect x="6" y="0" width="4" height="4" rx="0.8" fill="#eea044"/><rect x="1" y="5" width="4" height="4" rx="0.8" fill="#eea044"/><rect x="6" y="5" width="4" height="4" rx="0.8" fill="#eea044"/><rect x="11" y="5" width="4" height="4" rx="0.8" fill="#eea044"/><rect x="1" y="10" width="4" height="4" rx="0.8" fill="#eea044"/><rect x="6" y="10" width="4" height="4" rx="0.8" fill="#eea044"/><rect x="11" y="10" width="4" height="4" rx="0.8" fill="#eea044"/><rect x="6" y="15" width="4" height="4" rx="0.8" fill="#eea044"/></svg><div class="t" style="left:95.4px;top:411.9px;font-size:11.7px;color:#1a1a1a;">Materials</div><svg style="position:absolute;left:59.5px;top:431.90000000000003px;" width="6" height="9" viewBox="0 0 6 9"><path d="M1 1l3.5 3.5L1 8" fill="none" stroke="#555" stroke-width="1.2"/></svg><svg style="position:absolute;left:73px;top:427.8px;" width="17" height="17" viewBox="0 0 17 17"><path d="M0 3c5 0 7 3 16 3M0 8c5 0 7 3 16 3M0 13c5 0 7 3 16 3" fill="none" stroke="#3a8ed4" stroke-width="1.2"/></svg><div class="t" style="left:95.4px;top:429.9px;font-size:11.7px;color:#1a1a1a;">Laminar Flow</div><svg style="position:absolute;left:59.5px;top:449.90000000000003px;" width="6" height="9" viewBox="0 0 6 9"><path d="M1 1l3.5 3.5L1 8" fill="none" stroke="#555" stroke-width="1.2"/></svg><svg style="position:absolute;left:73px;top:445.8px;" width="17" height="17" viewBox="0 0 17 17"><path d="M0 3l3-3h13v13l-3 3H0z" fill="#3a8ed4"/><path d="M2 5l4 2 5-3M6 7l-1 6M6 7l5 4 3-2M11 4l1 6" fill="none" stroke="#bfe0ff" stroke-width="0.9"/></svg><div class="t" style="left:95.4px;top:447.9px;font-size:11.7px;color:#1a1a1a;">Darcy&#39;s Law</div><svg style="position:absolute;left:59.5px;top:467.90000000000003px;" width="6" height="9" viewBox="0 0 6 9"><path d="M1 1l3.5 3.5L1 8" fill="none" stroke="#555" stroke-width="1.2"/></svg><svg style="position:absolute;left:73px;top:463.8px;" width="17" height="17" viewBox="0 0 17 17"><rect x="3" y="1" width="10" height="12" rx="2" fill="#3a8ed4"/><rect x="5" y="3" width="6" height="3" fill="#fff" opacity="0.6"/><circle cx="3" cy="12" r="2" fill="#4aa050"/><circle cx="2" cy="15.5" r="1.8" fill="#e8782a"/><path d="M14 0l1.5 3h-3z" fill="#4aa050"/></svg><div class="t" style="left:95.4px;top:465.9px;font-size:11.7px;color:#1a1a1a;">Transport of Diluted Species</div><svg style="position:absolute;left:59.5px;top:485.90000000000003px;" width="6" height="9" viewBox="0 0 6 9"><path d="M1 1l3.5 3.5L1 8" fill="none" stroke="#555" stroke-width="1.2"/></svg><svg style="position:absolute;left:73px;top:481.8px;" width="17" height="17" viewBox="0 0 17 17"><path d="M3 3l3-3h10v12l-3 3H3z" fill="#3a8ed4"/><path d="M6 4l4 2 4-2M10 6v6" fill="none" stroke="#bfe0ff" stroke-width="0.9"/><circle cx="3" cy="12" r="2" fill="#4aa050"/><circle cx="2" cy="15.5" r="1.8" fill="#e8782a"/></svg><div class="t" style="left:95.4px;top:483.9px;font-size:11.7px;color:#1a1a1a;">Transport of Diluted Species in Porous Media 2</div><svg style="position:absolute;left:58.5px;top:505.40000000000003px;" width="9" height="6" viewBox="0 0 9 6"><path d="M1 1l3.5 3.5L8 1" fill="none" stroke="#333" stroke-width="1.3"/></svg><svg style="position:absolute;left:73px;top:499.8px;" width="17" height="17" viewBox="0 0 17 17"><ellipse cx="8" cy="5" rx="4" ry="1.6" fill="none" stroke="#999" stroke-width="0.7"/><ellipse cx="8" cy="5" rx="4" ry="1.6" transform="rotate(60 8 5)" fill="none" stroke="#999" stroke-width="0.7"/><ellipse cx="8" cy="5" rx="4" ry="1.6" transform="rotate(-60 8 5)" fill="none" stroke="#999" stroke-width="0.7"/><path d="M8 8v3M3 14V11h10v3" fill="none" stroke="#666" stroke-width="0.9"/><circle cx="1.5" cy="13.5" r="1.5" fill="#3a8ed4"/><circle cx="8" cy="13.5" r="1.5" fill="#e8782a"/><circle cx="14" cy="13.5" r="1.5" fill="#c0389a"/><circle cx="5" cy="11.5" r="1.3" fill="#4aa050"/></svg><div class="t" style="left:95.4px;top:501.9px;font-size:11.7px;color:#1a1a1a;">Multiphysics</div><div style="position:absolute;left:13px;top:517px;width:351px;height:18px;box-sizing:border-box;background:#cce8ff;border:1px dashed #5a7ea8"></div><svg style="position:absolute;left:93px;top:517.8px;" width="17" height="17" viewBox="0 0 17 17"><path d="M0 3.5c0-2 3-3.5 8-3.5 5 0 8 1.5 8 3.5v11H0z" fill="#3a8ed4"/><path d="M1 4.5c2-1.5 12-1.5 14 0" fill="none" stroke="#fff" stroke-width="0.8"/><rect x="1" y="8" width="12" height="6" fill="#8ec5f0"/></svg><div class="t" style="left:115.4px;top:519.9px;font-size:11.7px;color:#1a1a1a;">Free and Porous Media Flow Coupling 1</div><svg style="position:absolute;left:59.5px;top:539.9px;" width="6" height="9" viewBox="0 0 6 9"><path d="M1 1l3.5 3.5L1 8" fill="none" stroke="#555" stroke-width="1.2"/></svg><svg style="position:absolute;left:73px;top:535.8px;" width="17" height="17" viewBox="0 0 17 17"><path d="M8 0.5L15.5 15H0.5z" fill="#dcdcdc" stroke="#888" stroke-width="1"/><path d="M4.3 8h7.4M2.5 11.5h11M6 4.5l6 10.5M10 4.5l-6 10.5M4.3 8l3.7 7M11.7 8L8 15" stroke="#999" stroke-width="0.6"/></svg><div class="t" style="left:95.4px;top:537.9px;font-size:11.7px;color:#1a1a1a;">Mesh 1</div><svg style="position:absolute;left:39.5px;top:557.9px;" width="6" height="9" viewBox="0 0 6 9"><path d="M1 1l3.5 3.5L1 8" fill="none" stroke="#555" stroke-width="1.2"/></svg><svg style="position:absolute;left:53px;top:553.8px;" width="17" height="17" viewBox="0 0 17 17"><path d="M0 7c2-4 4-4 6 0" fill="none" stroke="#1d9bb5" stroke-width="1.1"/><circle cx="9" cy="8" r="3" fill="none" stroke="#1d9bb5" stroke-width="1.1"/><circle cx="15" cy="8" r="3" fill="none" stroke="#1d9bb5" stroke-width="1.1"/></svg><div class="t" style="left:75.4px;top:555.9px;font-size:11.7px;color:#1a1a1a;">Study 1</div><svg style="position:absolute;left:38.5px;top:577.4px;" width="9" height="6" viewBox="0 0 9 6"><path d="M1 1l3.5 3.5L8 1" fill="none" stroke="#333" stroke-width="1.3"/></svg><svg style="position:absolute;left:53px;top:571.8px;" width="17" height="17" viewBox="0 0 17 17"><path d="M1 6l2-2v10h13v2H3z" fill="#888"/><rect x="4.5" y="0.5" width="10" height="9" fill="#eee" stroke="#888"/><rect x="6.5" y="2.5" width="10" height="10" fill="#fff" stroke="#888"/><rect x="8" y="4" width="7" height="7" fill="#b04aa8"/><rect x="2.5" y="12.5" width="14" height="3" fill="#fff" stroke="#888"/></svg><div class="t" style="left:75.4px;top:573.9px;font-size:11.7px;color:#1a1a1a;">Results</div><svg style="position:absolute;left:59.5px;top:593.9px;" width="6" height="9" viewBox="0 0 6 9"><path d="M1 1l3.5 3.5L1 8" fill="none" stroke="#555" stroke-width="1.2"/></svg><svg style="position:absolute;left:73px;top:589.8px;" width="17" height="17" viewBox="0 0 17 17"><rect x="3" y="1" width="1.3" height="1.3" fill="#b04aa8"/><rect x="3" y="3.5" width="1.3" height="1.3" fill="#b04aa8"/><rect x="3" y="6" width="1.3" height="1.3" fill="#b04aa8"/><rect x="3" y="8.5" width="1.3" height="1.3" fill="#b04aa8"/><rect x="3" y="11" width="1.3" height="1.3" fill="#b04aa8"/><rect x="3" y="13.5" width="1.3" height="1.3" fill="#b04aa8"/><rect x="6" y="1" width="1.3" height="1.3" fill="#b04aa8"/><rect x="6" y="3.5" width="1.3" height="1.3" fill="#b04aa8"/><rect x="6" y="6" width="1.3" height="1.3" fill="#b04aa8"/><rect x="6" y="8.5" width="1.3" height="1.3" fill="#b04aa8"/><rect x="6" y="11" width="1.3" height="1.3" fill="#b04aa8"/><rect x="6" y="13.5" width="1.3" height="1.3" fill="#b04aa8"/><rect x="9" y="1" width="1.3" height="1.3" fill="#b04aa8"/><rect x="9" y="3.5" width="1.3" height="1.3" fill="#b04aa8"/><rect x="9" y="6" width="1.3" height="1.3" fill="#b04aa8"/><rect x="9" y="8.5" width="1.3" height="1.3" fill="#b04aa8"/><rect x="9" y="11" width="1.3" height="1.3" fill="#b04aa8"/><rect x="9" y="13.5" width="1.3" height="1.3" fill="#b04aa8"/><rect x="12" y="1" width="1.3" height="1.3" fill="#b04aa8"/><rect x="12" y="3.5" width="1.3" height="1.3" fill="#b04aa8"/><rect x="12" y="6" width="1.3" height="1.3" fill="#b04aa8"/><rect x="12" y="8.5" width="1.3" height="1.3" fill="#b04aa8"/><rect x="12" y="11" width="1.3" height="1.3" fill="#b04aa8"/><rect x="12" y="13.5" width="1.3" height="1.3" fill="#b04aa8"/></svg><div class="t" style="left:95.4px;top:591.9px;font-size:11.7px;color:#1a1a1a;">Datasets</div><svg style="position:absolute;left:59.5px;top:611.9px;" width="6" height="9" viewBox="0 0 6 9"><path d="M1 1l3.5 3.5L1 8" fill="none" stroke="#555" stroke-width="1.2"/></svg><svg style="position:absolute;left:73px;top:607.8px;" width="17" height="17" viewBox="0 0 17 17"><text x="0.5" y="6.3" font-size="6.6" textLength="10.5" lengthAdjust="spacingAndGlyphs" font-family="Liberation Sans" fill="#b04aa8">8.85</text><text x="0.5" y="12.6" font-size="6.6" textLength="10.5" lengthAdjust="spacingAndGlyphs" font-family="Liberation Sans" fill="#b04aa8">e-12</text></svg><div class="t" style="left:95.4px;top:609.9px;font-size:11.7px;color:#1a1a1a;">Derived Values</div><svg style="position:absolute;left:59.5px;top:629.9px;" width="6" height="9" viewBox="0 0 6 9"><path d="M1 1l3.5 3.5L1 8" fill="none" stroke="#555" stroke-width="1.2"/></svg><svg style="position:absolute;left:73px;top:625.8px;" width="17" height="17" viewBox="0 0 17 17"><rect x="1.5" y="1.5" width="13" height="13" fill="none" stroke="#b04aa8" stroke-width="1.2"/><path d="M1.5 5h13M1.5 8h13M1.5 11h13M5 1.5v13M8 1.5v13M11 1.5v13" stroke="#b04aa8" stroke-width="1"/></svg><div class="t" style="left:95.4px;top:627.9px;font-size:11.7px;color:#1a1a1a;">Tables</div><svg style="position:absolute;left:59.5px;top:647.9px;" width="6" height="9" viewBox="0 0 6 9"><path d="M1 1l3.5 3.5L1 8" fill="none" stroke="#555" stroke-width="1.2"/></svg><svg style="position:absolute;left:73px;top:643.8px;" width="17" height="17" viewBox="0 0 17 17"><path d="M1.2 2.6L5.7 5.8V16.4L1.2 13.2Z" fill="#a34596"/><path d="M1.2 2.6H11.1L15.6 5.8H5.7Z" fill="#b85aae"/><rect x="5.7" y="5.8" width="9.9" height="10.6" fill="#b14fa6"/><path d="M1.2 2.6L5.7 5.8V16.4M5.7 5.8H15.6" fill="none" stroke="#f4d8f0" stroke-width="0.8"/><circle cx="13.2" cy="3" r="3.6" fill="#fff"/><path d="M13.2 -0.2v6.4M10 3h6.4M11 0.8l4.4 4.4M15.4 0.8l-4.4 4.4" stroke="#777" stroke-width="1.1"/></svg><div class="t" style="left:95.4px;top:645.9px;font-size:11.7px;color:#1a1a1a;">Velocity (spf)</div><svg style="position:absolute;left:59.5px;top:665.9px;" width="6" height="9" viewBox="0 0 6 9"><path d="M1 1l3.5 3.5L1 8" fill="none" stroke="#555" stroke-width="1.2"/></svg><svg style="position:absolute;left:73px;top:661.8px;" width="17" height="17" viewBox="0 0 17 17"><path d="M1.2 2.6L5.7 5.8V16.4L1.2 13.2Z" fill="#a34596"/><path d="M1.2 2.6H11.1L15.6 5.8H5.7Z" fill="#b85aae"/><rect x="5.7" y="5.8" width="9.9" height="10.6" fill="#b14fa6"/><path d="M1.2 2.6L5.7 5.8V16.4M5.7 5.8H15.6" fill="none" stroke="#f4d8f0" stroke-width="0.8"/></svg><div class="t" style="left:95.4px;top:663.9px;font-size:11.7px;color:#1a1a1a;">Pressure (spf)</div><svg style="position:absolute;left:59.5px;top:683.9px;" width="6" height="9" viewBox="0 0 6 9"><path d="M1 1l3.5 3.5L1 8" fill="none" stroke="#555" stroke-width="1.2"/></svg><svg style="position:absolute;left:73px;top:679.8px;" width="17" height="17" viewBox="0 0 17 17"><path d="M1.2 2.6L5.7 5.8V16.4L1.2 13.2Z" fill="#a34596"/><path d="M1.2 2.6H11.1L15.6 5.8H5.7Z" fill="#b85aae"/><rect x="5.7" y="5.8" width="9.9" height="10.6" fill="#b14fa6"/><path d="M1.2 2.6L5.7 5.8V16.4M5.7 5.8H15.6" fill="none" stroke="#f4d8f0" stroke-width="0.8"/></svg><div class="t" style="left:95.4px;top:681.9px;font-size:11.7px;color:#1a1a1a;">Pressure (dl)</div><svg style="position:absolute;left:59.5px;top:701.9px;" width="6" height="9" viewBox="0 0 6 9"><path d="M1 1l3.5 3.5L1 8" fill="none" stroke="#555" stroke-width="1.2"/></svg><svg style="position:absolute;left:73px;top:697.8px;" width="17" height="17" viewBox="0 0 17 17"><path d="M1.2 2.6L5.7 5.8V16.4L1.2 13.2Z" fill="#a34596"/><path d="M1.2 2.6H11.1L15.6 5.8H5.7Z" fill="#b85aae"/><rect x="5.7" y="5.8" width="9.9" height="10.6" fill="#b14fa6"/><path d="M1.2 2.6L5.7 5.8V16.4M5.7 5.8H15.6" fill="none" stroke="#f4d8f0" stroke-width="0.8"/><circle cx="13.2" cy="3" r="3.6" fill="#fff"/><path d="M13.2 -0.2v6.4M10 3h6.4M11 0.8l4.4 4.4M15.4 0.8l-4.4 4.4" stroke="#777" stroke-width="1.1"/></svg><div class="t" style="left:95.4px;top:699.9px;font-size:11.7px;color:#1a1a1a;">Velocity (dl)</div><svg style="position:absolute;left:59.5px;top:719.9px;" width="6" height="9" viewBox="0 0 6 9"><path d="M1 1l3.5 3.5L1 8" fill="none" stroke="#555" stroke-width="1.2"/></svg><svg style="position:absolute;left:73px;top:715.8px;" width="17" height="17" viewBox="0 0 17 17"><path d="M1.2 2.6L5.7 5.8V16.4L1.2 13.2Z" fill="#a34596"/><path d="M1.2 2.6H11.1L15.6 5.8H5.7Z" fill="#b85aae"/><rect x="5.7" y="5.8" width="9.9" height="10.6" fill="#b14fa6"/><path d="M1.2 2.6L5.7 5.8V16.4M5.7 5.8H15.6" fill="none" stroke="#f4d8f0" stroke-width="0.8"/><circle cx="13.2" cy="3" r="3.6" fill="#fff"/><path d="M13.2 -0.2v6.4M10 3h6.4M11 0.8l4.4 4.4M15.4 0.8l-4.4 4.4" stroke="#777" stroke-width="1.1"/></svg><div class="t" style="left:95.4px;top:717.9px;font-size:11.7px;color:#1a1a1a;">Concentration, Streamline (tds)</div><svg style="position:absolute;left:73px;top:733.8px;" width="17" height="17" viewBox="0 0 17 17"><path d="M1.2 2.6L5.7 5.8V16.4L1.2 13.2Z" fill="#a34596"/><path d="M1.2 2.6H11.1L15.6 5.8H5.7Z" fill="#b85aae"/><rect x="5.7" y="5.8" width="9.9" height="10.6" fill="#b14fa6"/><path d="M1.2 2.6L5.7 5.8V16.4M5.7 5.8H15.6" fill="none" stroke="#f4d8f0" stroke-width="0.8"/></svg><div class="t" style="left:95.4px;top:735.9px;font-size:11.7px;color:#1a1a1a;">Concentration, Surface (tds)</div><svg style="position:absolute;left:59.5px;top:755.9px;" width="6" height="9" viewBox="0 0 6 9"><path d="M1 1l3.5 3.5L1 8" fill="none" stroke="#555" stroke-width="1.2"/></svg><svg style="position:absolute;left:73px;top:751.8px;" width="17" height="17" viewBox="0 0 17 17"><path d="M1.2 2.6L5.7 5.8V16.4L1.2 13.2Z" fill="#a34596"/><path d="M1.2 2.6H11.1L15.6 5.8H5.7Z" fill="#b85aae"/><rect x="5.7" y="5.8" width="9.9" height="10.6" fill="#b14fa6"/><path d="M1.2 2.6L5.7 5.8V16.4M5.7 5.8H15.6" fill="none" stroke="#f4d8f0" stroke-width="0.8"/><circle cx="13.2" cy="3" r="3.6" fill="#fff"/><path d="M13.2 -0.2v6.4M10 3h6.4M11 0.8l4.4 4.4M15.4 0.8l-4.4 4.4" stroke="#777" stroke-width="1.1"/></svg><div class="t" style="left:95.4px;top:753.9px;font-size:11.7px;color:#1a1a1a;">Concentration, Streamline (tds2)</div><svg style="position:absolute;left:59.5px;top:773.9px;" width="6" height="9" viewBox="0 0 6 9"><path d="M1 1l3.5 3.5L1 8" fill="none" stroke="#555" stroke-width="1.2"/></svg><svg style="position:absolute;left:73px;top:769.8px;" width="17" height="17" viewBox="0 0 17 17"><path d="M1.2 2.6L5.7 5.8V16.4L1.2 13.2Z" fill="#a34596"/><path d="M1.2 2.6H11.1L15.6 5.8H5.7Z" fill="#b85aae"/><rect x="5.7" y="5.8" width="9.9" height="10.6" fill="#b14fa6"/><path d="M1.2 2.6L5.7 5.8V16.4M5.7 5.8H15.6" fill="none" stroke="#f4d8f0" stroke-width="0.8"/></svg><div class="t" style="left:95.4px;top:771.9px;font-size:11.7px;color:#1a1a1a;">Concentration, Surface (tds2)</div><svg style="position:absolute;left:59.5px;top:791.9px;" width="6" height="9" viewBox="0 0 6 9"><path d="M1 1l3.5 3.5L1 8" fill="none" stroke="#555" stroke-width="1.2"/></svg><svg style="position:absolute;left:73px;top:787.8px;" width="17" height="17" viewBox="0 0 17 17"><path d="M1.2 2.6L5.7 5.8V16.4L1.2 13.2Z" fill="#a34596"/><path d="M1.2 2.6H11.1L15.6 5.8H5.7Z" fill="#b85aae"/><rect x="5.7" y="5.8" width="9.9" height="10.6" fill="#b14fa6"/><path d="M1.2 2.6L5.7 5.8V16.4M5.7 5.8H15.6" fill="none" stroke="#f4d8f0" stroke-width="0.8"/></svg><div class="t" style="left:95.4px;top:789.9px;font-size:11.7px;color:#1a1a1a;">Velocity, Streamline</div><svg style="position:absolute;left:73px;top:805.8px;" width="17" height="17" viewBox="0 0 17 17"><path d="M1 5l3-3h11v9l-3 3H1z" fill="#fff" stroke="#b04aa8" stroke-width="1.1"/><path d="M1 5h11v9M12 5l3-3" fill="none" stroke="#b04aa8" stroke-width="1"/><path d="M3 7.5h7M3 9.5h7" stroke="#b04aa8" stroke-width="0.9"/><rect x="4" y="10.5" width="5" height="3" fill="#e8c0e0" stroke="#b04aa8" stroke-width="0.8"/></svg><div class="t" style="left:95.4px;top:807.9px;font-size:11.7px;color:#1a1a1a;">Export</div><svg style="position:absolute;left:73px;top:823.8px;" width="17" height="17" viewBox="0 0 17 17"><rect x="1.5" y="2.5" width="11" height="13" fill="none" stroke="#b04aa8" stroke-width="1.2"/><path d="M3.5 6h6M3.5 9h4M3.5 12h3" stroke="#b04aa8" stroke-width="1"/><path d="M7 12l7-9 1.5 1.2-7 9-2 0.5z" fill="#b04aa8"/></svg><div class="t" style="left:95.4px;top:825.9px;font-size:11.7px;color:#1a1a1a;">Reports</div><div style="position:absolute;left:378px;top:177px;width:345px;height:867px;background:#fff;border-radius:6px 6px 1px 1px;box-shadow:0 0 1px rgba(0,0,0,0.08)"></div><div class="t" style="left:385.0px;top:188.8px;font-size:20.3px;color:#2d5597;">Settings</div><svg style="position:absolute;left:669.8px;top:192.5px;" width="10" height="7" viewBox="0 0 10 7"><path d="M1 1l4 4 4-4" fill="none" stroke="#aaa" stroke-width="1.1"/></svg><svg style="position:absolute;left:688.8px;top:191px;" width="10" height="9" viewBox="0 0 10 9"><rect x="0.5" y="0.5" width="9" height="8.5" fill="none" stroke="#aaa" stroke-width="1"/><rect x="0.5" y="0.5" width="9" height="2" fill="#aaa"/></svg><svg style="position:absolute;left:705.8px;top:190px;" width="9" height="11" viewBox="0 0 9 11"><path d="M2.5 0.5h3.5v5.5H2.5z" fill="none" stroke="#aaa" stroke-width="1"/><path d="M5.3 0.5v5.5" stroke="#aaa" stroke-width="1.6"/><path d="M0.5 6.5h8M4.5 7v4" stroke="#aaa" stroke-width="1.1"/></svg><div class="t" style="left:384.5px;top:214.8px;font-size:13.0px;color:#3866aa;">Free and Porous Media Flow Coupling</div><div class="t" style="left:383.4px;top:249.1px;font-size:11.7px;color:#1a1a1a;">Label:</div><div style="position:absolute;left:428px;top:246px;width:262px;height:18px;box-sizing:border-box;border:1px solid #cfcfcf;background:#fff"></div><div class="t" style="left:431.0px;top:249.1px;font-size:11.7px;color:#1a1a1a;">Free and Porous Media Flow Coupling 1</div><div style="position:absolute;left:697px;top:244px;width:21px;height:22px;box-sizing:border-box;border:1px solid #d8d8d8;border-radius:2px;background:#f2f2f2"></div><svg style="position:absolute;left:700px;top:247px;" width="15" height="15" viewBox="0 0 15 15"><rect x="1.5" y="1.5" width="12" height="12" fill="#fff" stroke="#777" stroke-width="1.1"/><rect x="1.5" y="1.5" width="12" height="2.5" fill="#888"/><path d="M5 7h7M5 9.5h7" stroke="#1aa58a" stroke-width="1.2"/><path d="M0.5 14.5l4-4M1.5 10.5h3v3" fill="none" stroke="#1aa58a" stroke-width="1.2"/></svg><div class="t" style="left:383.4px;top:275.1px;font-size:11.7px;color:#1a1a1a;">Name:</div><div style="position:absolute;left:428px;top:272px;width:262px;height:18px;box-sizing:border-box;border:1px solid #cfcfcf;background:#fff"></div><div class="t" style="left:431.0px;top:275.1px;font-size:11.7px;color:#1a1a1a;">nsd1</div><div style="position:absolute;left:378px;top:299px;width:345px;height:1px;background:#dcdcdc"></div><svg style="position:absolute;left:384px;top:309.8px;" width="9" height="6" viewBox="0 0 9 6"><path d="M1 1l3.5 3.5L8 1" fill="none" stroke="#2c5a98" stroke-width="1.3"/></svg><div class="t" style="left:404.5px;top:306.6px;font-size:13.2px;color:#2c5a98;">Boundary Selection</div><div class="t" style="left:383.4px;top:339.6px;font-size:11.7px;color:#1a1a1a;">Selection:</div><div style="position:absolute;left:444px;top:335px;width:274px;height:21px;box-sizing:border-box;border:1px solid #cfcfcf;border-radius:2px;background:linear-gradient(#f6f6f6,#ececec)"></div><div class="t" style="left:476.0px;top:339.6px;font-size:11.7px;color:#1a1a1a;"></div><svg style="position:absolute;left:703px;top:343.5px;" width="9" height="5" viewBox="0 0 9 5"><path d="M0 0h9L4.5 4.5z" fill="#222"/></svg><div class="t" style="left:476.2px;top:339.4px;font-size:11.9px;color:#1a1a1a;">Membrane</div><svg style="position:absolute;left:457px;top:338px;" width="16" height="15" viewBox="0 0 16 15"><rect x="1" y="1" width="5" height="4" fill="none" stroke="#999" stroke-width="0.9"/><rect x="5" y="5" width="5" height="4" fill="none" stroke="#999" stroke-width="0.9"/><rect x="9" y="9" width="6" height="5" fill="#3a8ed4"/></svg><div style="position:absolute;left:383px;top:363px;width:38px;height:38px;box-sizing:border-box;background:#cce4f7;border:1px solid #9ccaf0;border-radius:2px"></div><svg style="position:absolute;left:387px;top:374px;" width="30" height="14" viewBox="0 0 30 14"><rect x="0.5" y="0.5" width="29" height="13" rx="1.5" fill="#fff" stroke="#333" stroke-width="1"/><rect x="3" y="3" width="15" height="8" rx="1" fill="#4aa050"/><rect x="19" y="2.5" width="8" height="9" fill="#999" stroke="#333" stroke-width="0.8"/></svg><div style="position:absolute;left:429px;top:362px;width:231px;height:119px;box-sizing:border-box;border:1px solid #cfcfcf;background:#fff;box-shadow:0 1.5px 0 #d4d4d4"></div><div class="t" style="left:435.9px;top:367.8px;font-size:11.7px;color:#1a1a1a;">27</div><div class="t" style="left:435.9px;top:386.8px;font-size:11.7px;color:#1a1a1a;">28</div><div class="t" style="left:435.9px;top:405.8px;font-size:11.7px;color:#1a1a1a;">44</div><div class="t" style="left:435.9px;top:424.8px;font-size:11.7px;color:#1a1a1a;">45</div><div class="t" style="left:435.9px;top:443.8px;font-size:11.7px;color:#1a1a1a;">61</div><div class="t" style="left:435.9px;top:462.8px;font-size:11.7px;color:#1a1a1a;">62</div><div style="position:absolute;left:641px;top:363px;width:17px;height:117px;background:#f7f7f7"></div><div style="position:absolute;left:641px;top:381px;width:17px;height:16px;background:#e6e6e6"></div><svg style="position:absolute;left:645px;top:369px;" width="9" height="5" viewBox="0 0 9 5"><path d="M1 4l3.5-3.5L8 4" fill="none" stroke="#c8c8c8" stroke-width="1"/></svg><svg style="position:absolute;left:645px;top:466px;" width="9" height="5" viewBox="0 0 9 5"><path d="M1 1l3.5 3.5L8 1" fill="none" stroke="#c8c8c8" stroke-width="1"/></svg><svg style="position:absolute;left:673px;top:363px;" width="16" height="15" viewBox="0 0 16 15"><rect x="1" y="1" width="5" height="4" fill="none" stroke="#999" stroke-width="0.9"/><rect x="5" y="5" width="5" height="4" fill="none" stroke="#999" stroke-width="0.9"/><rect x="9" y="9" width="6" height="5" fill="#3a8ed4"/></svg><svg style="position:absolute;left:702px;top:363px;" width="14" height="14" viewBox="0 0 14 14"><path d="M7 0v14M0 7h14" stroke="#bbb" stroke-width="1.2"/></svg><svg style="position:absolute;left:672px;top:382px;" width="17" height="17" viewBox="0 0 17 17"><rect x="1.5" y="1.5" width="9" height="11" fill="none" stroke="#999" stroke-width="1"/><rect x="5.5" y="4.5" width="10" height="11" fill="#fff" stroke="#3a8ed4" stroke-width="1.1"/><path d="M8 8h5M8 10h5M8 12h5" stroke="#3a8ed4" stroke-width="0.9"/></svg><div style="position:absolute;left:702px;top:389px;width:14px;height:1.3px;background:#3a8ed4"></div><svg style="position:absolute;left:672px;top:401px;" width="17" height="17" viewBox="0 0 17 17"><rect x="1.5" y="2.5" width="9" height="11" fill="none" stroke="#888" stroke-width="1"/><rect x="6.5" y="6.5" width="9" height="9" fill="#fff" stroke="#3a8ed4" stroke-width="1.1"/><rect x="3.5" y="0.5" width="5" height="3" fill="#888"/></svg><svg style="position:absolute;left:701px;top:401px;" width="17" height="17" viewBox="0 0 17 17"><rect x="2.5" y="2.5" width="13" height="12" fill="none" stroke="#3a8ed4" stroke-width="1.1" stroke-dasharray="2 1.3"/><path d="M2 1l8 12" stroke="#555" stroke-width="1"/><path d="M7 10l5 6 2-3z" fill="#f0a030"/></svg><svg style="position:absolute;left:672px;top:420px;" width="17" height="17" viewBox="0 0 17 17"><rect x="4.5" y="4.5" width="8" height="8" fill="none" stroke="#777" stroke-width="1"/><path d="M8.5 6v5M6 8.5h5" stroke="#777" stroke-width="1"/><path d="M8.5 0l-2 2.5h4zM8.5 17l-2-2.5h4zM0 8.5l2.5-2v4zM17 8.5l-2.5-2v4z" fill="#3a8ed4"/></svg><svg style="position:absolute;left:701px;top:421px;" width="16" height="14" viewBox="0 0 16 14"><path d="M1 1.5h14" stroke="#3a8ed4" stroke-width="1.5"/><path d="M1 8c4-5 10-5 14 0c-4 5-10 5-14 0z" fill="#3a8ed4"/><circle cx="8" cy="8" r="2" fill="#fff"/></svg><div style="position:absolute;left:378px;top:493px;width:345px;height:1px;background:#dcdcdc"></div><svg style="position:absolute;left:386px;top:501.5px;" width="6" height="9" viewBox="0 0 6 9"><path d="M1 1l3.5 3.5L1 8" fill="none" stroke="#222" stroke-width="1.3"/></svg><div class="t" style="left:404.5px;top:500.3px;font-size:13.2px;color:#2c5a98;">Equation</div><div style="position:absolute;left:378px;top:522px;width:345px;height:1px;background:#dcdcdc"></div><svg style="position:absolute;left:384px;top:532.6px;" width="9" height="6" viewBox="0 0 9 6"><path d="M1 1l3.5 3.5L8 1" fill="none" stroke="#2c5a98" stroke-width="1.3"/></svg><div class="t" style="left:404.5px;top:529.4px;font-size:13.2px;color:#2c5a98;">Coupled Interfaces</div><div class="t" style="left:383.4px;top:560.0px;font-size:11.7px;color:#1a1a1a;">Free flow:</div><div style="position:absolute;left:383px;top:579px;width:306px;height:21px;box-sizing:border-box;border:1px solid #cfcfcf;border-radius:2px;background:linear-gradient(#f6f6f6,#ececec)"></div><div class="t" style="left:396.2px;top:584.3px;font-size:11.7px;color:#1a1a1a;">Laminar Flow</div><svg style="position:absolute;left:674px;top:587.5px;" width="9" height="5" viewBox="0 0 9 5"><path d="M0 0h9L4.5 4.5z" fill="#222"/></svg><svg style="position:absolute;left:703px;top:580px;" width="15" height="16" viewBox="0 0 15 16"><path d="M1 1.5h5M1 4.5h4M1 7.5h4M1 10.5h5M1 13.5h5" stroke="#3a8ed4" stroke-width="1" stroke-dasharray="1.3 0.7"/><path d="M13 14V5H8.5" fill="none" stroke="#3a8ed4" stroke-width="1.3"/><path d="M8 5l3-3v6z" fill="#3a8ed4"/></svg><div class="t" style="left:383.4px;top:608.0px;font-size:11.7px;color:#1a1a1a;">Porous media flow:</div><div style="position:absolute;left:383px;top:627px;width:306px;height:21px;box-sizing:border-box;border:1px solid #cfcfcf;border-radius:2px;background:linear-gradient(#f6f6f6,#ececec)"></div><div class="t" style="left:396.2px;top:632.1px;font-size:11.7px;color:#1a1a1a;">Darcy&#39;s Law</div><svg style="position:absolute;left:674px;top:635.5px;" width="9" height="5" viewBox="0 0 9 5"><path d="M0 0h9L4.5 4.5z" fill="#222"/></svg><svg style="position:absolute;left:703px;top:628px;" width="15" height="16" viewBox="0 0 15 16"><path d="M1 1.5h5M1 4.5h4M1 7.5h4M1 10.5h5M1 13.5h5" stroke="#3a8ed4" stroke-width="1" stroke-dasharray="1.3 0.7"/><path d="M13 14V5H8.5" fill="none" stroke="#3a8ed4" stroke-width="1.3"/><path d="M8 5l3-3v6z" fill="#3a8ed4"/></svg><div style="position:absolute;left:378px;top:659px;width:345px;height:1px;background:#dcdcdc"></div><svg style="position:absolute;left:384px;top:670.7px;" width="9" height="6" viewBox="0 0 9 6"><path d="M1 1l3.5 3.5L8 1" fill="none" stroke="#2c5a98" stroke-width="1.3"/></svg><div class="t" style="left:404.5px;top:667.5px;font-size:13.2px;color:#2c5a98;">Coupling Settings</div><div class="t" style="left:383.4px;top:697.1px;font-size:11.7px;color:#1a1a1a;">Free flow boundary condition:</div><div style="position:absolute;left:383px;top:716px;width:335px;height:21px;box-sizing:border-box;border:1px solid #cfcfcf;border-radius:2px;background:linear-gradient(#f6f6f6,#ececec)"></div><div class="t" style="left:396.2px;top:721.5px;font-size:11.7px;color:#1a1a1a;">No slip</div><svg style="position:absolute;left:703px;top:724.5px;" width="9" height="5" viewBox="0 0 9 5"><path d="M0 0h9L4.5 4.5z" fill="#222"/></svg><div style="position:absolute;left:384px;top:744px;width:13px;height:13px;box-sizing:border-box;border:1px solid #555;background:#fff;border-radius:1px"></div><svg style="position:absolute;left:385px;top:745px;" width="11" height="11" viewBox="0 0 11 11"><path d="M2 5.5l2.5 3L9.5 2" fill="none" stroke="#222" stroke-width="1.6"/></svg><div class="t" style="left:403.1px;top:744.5px;font-size:11.75px;color:#1a1a1a;">Include pressure jump across free-porous boundary</div><div class="t" style="left:383.4px;top:766.6px;font-size:11.7px;color:#1a1a1a;">Pressure jump:</div><div class="t" style="left:385.0px;top:786.0px;font-size:13px;color:#333;font-family:'Liberation Serif',serif"><i>p</i></div><div class="t" style="left:392.5px;top:792.9px;font-size:9px;color:#333;">j</div><div style="position:absolute;left:408px;top:785px;width:287px;height:18px;box-sizing:border-box;border:1px solid #cfcfcf;background:#fff"></div><div class="t" style="left:411.0px;top:788.1px;font-size:11.7px;color:#1a1a1a;">2*R_const*T_w*(c-c2)</div><div class="t" style="left:705.0px;top:788.6px;font-size:11.7px;color:#1a1a1a;">Pa</div><div style="position:absolute;left:731px;top:177px;width:1182px;height:792px;background:#fff;border-radius:6px 6px 0 0"></div><div class="t" style="left:740.0px;top:188.7px;font-size:20.1px;color:#2d5597;">Reverse Osmosis Water Desalination</div><svg style="position:absolute;left:1842px;top:192.5px;" width="10" height="7" viewBox="0 0 10 7"><path d="M1 1l4 4 4-4" fill="none" stroke="#aaa" stroke-width="1.1"/></svg><svg style="position:absolute;left:1861px;top:191px;" width="10" height="9" viewBox="0 0 10 9"><rect x="0.5" y="0.5" width="9" height="8.5" fill="none" stroke="#aaa" stroke-width="1"/><rect x="0.5" y="0.5" width="9" height="2" fill="#aaa"/></svg><svg style="position:absolute;left:1878px;top:190px;" width="9" height="11" viewBox="0 0 9 11"><path d="M2.5 0.5h3.5v5.5H2.5z" fill="none" stroke="#aaa" stroke-width="1"/><path d="M5.3 0.5v5.5" stroke="#aaa" stroke-width="1.6"/><path d="M0.5 6.5h8M4.5 7v4" stroke="#aaa" stroke-width="1.1"/></svg><svg style="position:absolute;left:1896.5px;top:191px;" width="10" height="10" viewBox="0 0 10 10"><path d="M0.5 0.5l9 9M9.5 0.5l-9 9" stroke="#aaa" stroke-width="1.1"/></svg><svg style="position:absolute;left:740px;top:217px;" width="14" height="15" viewBox="0 0 14 15"><circle cx="5.8" cy="5.8" r="5" fill="none" stroke="#3a8ed4" stroke-width="1.3"/><path d="M5.8 3v5.6M3 5.8h5.6" stroke="#3a8ed4" stroke-width="1.2"/><path d="M9.5 9.5l3.5 4" stroke="#3a8ed4" stroke-width="2"/></svg><svg style="position:absolute;left:762.5px;top:217px;" width="14" height="15" viewBox="0 0 14 15"><circle cx="5.8" cy="5.8" r="5" fill="none" stroke="#3a8ed4" stroke-width="1.3"/><path d="M3 5.8h5.6" stroke="#3a8ed4" stroke-width="1.2"/><path d="M9.5 9.5l3.5 4" stroke="#3a8ed4" stroke-width="2"/></svg><svg style="position:absolute;left:783.5px;top:217px;" width="17" height="15" viewBox="0 0 17 15"><rect x="0.5" y="4.5" width="8" height="8" fill="none" stroke="#3a8ed4" stroke-width="1" stroke-dasharray="1.5 1"/><g transform="translate(3.5 0)"><circle cx="5.8" cy="5.8" r="5" fill="none" stroke="#3a8ed4" stroke-width="1.3"/><path d="M5.8 3v5.6M3 5.8h5.6" stroke="#3a8ed4" stroke-width="1.2"/><path d="M9.5 9.5l3.5 4" stroke="#3a8ed4" stroke-width="2"/></g></svg><svg style="position:absolute;left:806px;top:222px;" width="8" height="5" viewBox="0 0 8 5"><path d="M0 0h7.5L3.75 4z" fill="#111"/></svg><svg style="position:absolute;left:825px;top:216px;" width="16" height="15" viewBox="0 0 16 15"><rect x="0.5" y="0.5" width="14.5" height="14" fill="none" stroke="#777" stroke-width="1"/><path d="M7.75 4.5v6M4.75 7.5h6" stroke="#777" stroke-width="1"/><path d="M7.75 1.5l-2 2h4zM7.75 13.5l-2-2h4zM2 7.5l2-2v4zM13.5 7.5l-2-2v4z" fill="#3a8ed4"/></svg><div style="position:absolute;left:848px;top:218px;width:1px;height:14px;background:#ddd"></div><svg style="position:absolute;left:855px;top:216px;" width="18" height="16" viewBox="0 0 18 16"><path d="M8 15V1" stroke="#3a8ed4" stroke-width="1.1"/><path d="M8 0.5l-2 3h4z" fill="#3a8ed4"/><path d="M8 15L1 10" stroke="#3aa050" stroke-width="1.1"/><path d="M8 15l9-5" stroke="#d03a6a" stroke-width="1.1"/><path d="M17 9.5l-3.5 0.3 1.5 2.5z" fill="#d03a6a"/></svg><svg style="position:absolute;left:878px;top:222px;" width="8" height="5" viewBox="0 0 8 5"><path d="M0 0h7.5L3.75 4z" fill="#111"/></svg><svg style="position:absolute;left:897px;top:216px;" width="16" height="16" viewBox="0 0 16 16"><path d="M1.5 1v14" stroke="#3aa050" stroke-width="1.1"/><path d="M1.5 15h13" stroke="#d03a6a" stroke-width="1.1"/><path d="M1.5 0.5l-1.5 2.5h3zM15 15l-2.5-1.5v3z" fill="#3aa050"/><text x="4" y="9" font-size="8" font-family="Liberation Sans" fill="#999">xy</text></svg><svg style="position:absolute;left:920px;top:216px;" width="16" height="16" viewBox="0 0 16 16"><path d="M1.5 1v14" stroke="#3a8ed4" stroke-width="1.1"/><path d="M1.5 15h13" stroke="#3aa050" stroke-width="1.1"/><path d="M1.5 0.5l-1.5 2.5h3zM15 15l-2.5-1.5v3z" fill="#3a8ed4"/><text x="4" y="9" font-size="8" font-family="Liberation Sans" fill="#999">yz</text></svg><svg style="position:absolute;left:943px;top:216px;" width="16" height="16" viewBox="0 0 16 16"><path d="M1.5 1v14" stroke="#3a8ed4" stroke-width="1.1"/><path d="M1.5 15h13" stroke="#d03a6a" stroke-width="1.1"/><path d="M1.5 0.5l-1.5 2.5h3zM15 15l-2.5-1.5v3z" fill="#3a8ed4"/><text x="4" y="9" font-size="8" font-family="Liberation Sans" fill="#999">xz</text></svg><div style="position:absolute;left:966px;top:218px;width:1px;height:14px;background:#ddd"></div><svg style="position:absolute;left:975px;top:216px;" width="14" height="16" viewBox="0 0 14 16"><path d="M11.5 6.5A5.3 5.3 0 113 5" fill="none" stroke="#3a8ed4" stroke-width="1.5"/><path d="M6.5 0.5l5.5 3.5-5.5 3z" fill="#3a8ed4"/></svg><svg style="position:absolute;left:995px;top:222px;" width="8" height="5" viewBox="0 0 8 5"><path d="M0 0h7.5L3.75 4z" fill="#111"/></svg><div style="position:absolute;left:1014px;top:218px;width:1px;height:14px;background:#ddd"></div><div style="position:absolute;left:1020px;top:214px;width:20px;height:20px;box-sizing:border-box;background:#cce4f7;border:1px solid #a8d0f0;border-radius:2px"></div><svg style="position:absolute;left:1023px;top:218px;" width="14" height="12" viewBox="0 0 14 12"><path d="M0.5 4h3l6-3.5v11l-6-3.5h-3z" fill="#3a8ed4"/><path d="M11 3.5a3 3 0 010 5" fill="none" stroke="#3a8ed4" stroke-width="1"/></svg><svg style="position:absolute;left:1045px;top:217px;" width="16" height="15" viewBox="0 0 16 15"><path d="M0.5 3l3-2.5h11v11l-3 3H0.5z" fill="#a8d0f0" stroke="#3a8ed4" stroke-width="1.1"/><rect x="3" y="3" width="9" height="9" fill="#c8c8c8" stroke="#3a8ed4" stroke-width="1"/></svg><svg style="position:absolute;left:1067px;top:216px;" width="17" height="16" viewBox="0 0 17 16"><rect x="0.5" y="0.5" width="15.5" height="15" fill="none" stroke="#777" stroke-width="1"/><path d="M4 4h9v8H4z M4 6.7h9M4 9.3h9M7 4v8M10 4v8" fill="none" stroke="#3a8ed4" stroke-width="1"/></svg><svg style="position:absolute;left:1090px;top:216px;" width="18" height="16" viewBox="0 0 18 16"><path d="M0.5 0v15.5h16.5" fill="none" stroke="#555" stroke-width="0.9" stroke-dasharray="1.3 1"/><path d="M9 12V2" stroke="#3a8ed4" stroke-width="1.1"/><path d="M9 1l-2 2.5h4z" fill="#3a8ed4"/><path d="M9 12L3 8" stroke="#3aa050" stroke-width="1.1"/><path d="M9 12l7-4" stroke="#d03a6a" stroke-width="1.1"/></svg><svg style="position:absolute;left:1112px;top:222px;" width="8" height="5" viewBox="0 0 8 5"><path d="M0 0h7.5L3.75 4z" fill="#111"/></svg><svg style="position:absolute;left:1132px;top:217px;" width="17" height="15" viewBox="0 0 17 15"><rect x="0.5" y="0.5" width="15.5" height="13.5" fill="#fff" stroke="#777" stroke-width="1"/><defs><linearGradient id="cb" x1="0" y1="0" x2="0" y2="1"><stop offset="0" stop-color="#c83a3a"/><stop offset="0.5" stop-color="#e89a3a"/><stop offset="1" stop-color="#e8d83a"/></linearGradient></defs><rect x="10" y="2" width="3" height="10" fill="url(#cb)"/></svg><div style="position:absolute;left:1155px;top:218px;width:1px;height:14px;background:#ddd"></div><svg style="position:absolute;left:1165px;top:217px;" width="12" height="13" viewBox="0 0 12 13"><path d="M2.5 6V4a3.5 3.5 0 017 0v2" fill="none" stroke="#3a8ed4" stroke-width="1.6"/><rect x="0.5" y="5.5" width="11" height="7.5" fill="#3a8ed4"/></svg><div style="position:absolute;left:1186px;top:218px;width:1px;height:14px;background:#ddd"></div><svg style="position:absolute;left:1194px;top:216px;" width="16" height="16" viewBox="0 0 16 16"><path d="M8 1c5 0 7.5 3 7 7-0.5 4-3 7-7 7-3 0-4-2-3-4 1-2-1-2-2.5-1.5C1 10 0 8.5 0.5 6 1.5 3 4 1 8 1z" fill="#ddd" stroke="#777" stroke-width="1"/><circle cx="5" cy="5" r="1.3" fill="#3a8ed4"/><circle cx="9" cy="4" r="1.3" fill="#e8782a"/><circle cx="12" cy="7" r="1.3" fill="#3aa050"/><circle cx="10" cy="11" r="1.3" fill="#d03a6a"/></svg><svg style="position:absolute;left:1215px;top:222px;" width="8" height="5" viewBox="0 0 8 5"><path d="M0 0h7.5L3.75 4z" fill="#111"/></svg><div style="position:absolute;left:1234px;top:218px;width:1px;height:14px;background:#ddd"></div><svg style="position:absolute;left:1242px;top:216px;" width="16" height="16" viewBox="0 0 16 16"><path d="M8 8L8 1.2A6.8 6.8 0 0 1 13.9 4.6z" transform="rotate(0 8 8)" fill="#3a8ed4" stroke="#fff" stroke-width="0.8"/><path d="M8 8L8 1.2A6.8 6.8 0 0 1 13.9 4.6z" transform="rotate(60 8 8)" fill="#3a8ed4" stroke="#fff" stroke-width="0.8"/><path d="M8 8L8 1.2A6.8 6.8 0 0 1 13.9 4.6z" transform="rotate(120 8 8)" fill="#3a8ed4" stroke="#fff" stroke-width="0.8"/><path d="M8 8L8 1.2A6.8 6.8 0 0 1 13.9 4.6z" transform="rotate(180 8 8)" fill="#3a8ed4" stroke="#fff" stroke-width="0.8"/><path d="M8 8L8 1.2A6.8 6.8 0 0 1 13.9 4.6z" transform="rotate(240 8 8)" fill="#3a8ed4" stroke="#fff" stroke-width="0.8"/><path d="M8 8L8 1.2A6.8 6.8 0 0 1 13.9 4.6z" transform="rotate(300 8 8)" fill="#3a8ed4" stroke="#fff" stroke-width="0.8"/><circle cx="8" cy="8" r="2.5" fill="#fff"/></svg><svg style="position:absolute;left:1263px;top:222px;" width="8" height="5" viewBox="0 0 8 5"><path d="M0 0h7.5L3.75 4z" fill="#111"/></svg><svg style="position:absolute;left:1282px;top:217px;" width="18" height="13" viewBox="0 0 18 13"><path d="M0.5 2.5h5l1.5-2h4l1.5 2h5v10h-17z" fill="#3a8ed4"/><circle cx="9" cy="7.3" r="3.3" fill="#fff"/><circle cx="9" cy="7.3" r="2" fill="#3a8ed4"/></svg><svg style="position:absolute;left:1306px;top:215px;" width="16" height="17" viewBox="0 0 16 17"><rect x="3.5" y="0.5" width="9" height="5" fill="#fff" stroke="#3a8ed4" stroke-width="1.1"/><rect x="0.5" y="5" width="15" height="7" rx="1.5" fill="#c8d8e8" stroke="#3a8ed4" stroke-width="1.1"/><rect x="3.5" y="10" width="9" height="6" fill="#fff" stroke="#3a8ed4" stroke-width="1.1"/></svg><div style="position:absolute;left:731px;top:977px;width:1182px;height:67px;background:#fff;border-radius:6px 6px 1px 1px;box-shadow:0 0 1px rgba(0,0,0,0.08)"></div><div class="t" style="left:743.7px;top:988.6px;font-size:12.8px;color:#2c5a98;">Messages</div><svg style="position:absolute;left:812px;top:990px;" width="10" height="10" viewBox="0 0 10 10"><path d="M1 1l8 8M9 1l-8 8" stroke="#888" stroke-width="1.1"/></svg><div style="position:absolute;left:739px;top:1006px;width:91px;height:2px;background:#2f80c9"></div><div class="t" style="left:851.2px;top:988.6px;font-size:12.8px;color:#333;">Progress</div><div class="t" style="left:928.7px;top:988.6px;font-size:12.8px;color:#333;">Log</div><div style="position:absolute;left:731px;top:1010px;width:1182px;height:1px;background:#e4e4e4"></div><svg style="position:absolute;left:1860.5px;top:992.5px;" width="10" height="7" viewBox="0 0 10 7"><path d="M1 1l4 4 4-4" fill="none" stroke="#aaa" stroke-width="1.1"/></svg><svg style="position:absolute;left:1879.5px;top:991px;" width="10" height="9" viewBox="0 0 10 9"><rect x="0.5" y="0.5" width="9" height="8.5" fill="none" stroke="#aaa" stroke-width="1"/><rect x="0.5" y="0.5" width="9" height="2" fill="#aaa"/></svg><svg style="position:absolute;left:1896.5px;top:990px;" width="9" height="11" viewBox="0 0 9 11"><path d="M2.5 0.5h3.5v5.5H2.5z" fill="none" stroke="#aaa" stroke-width="1"/><path d="M5.3 0.5v5.5" stroke="#aaa" stroke-width="1.6"/><path d="M0.5 6.5h8M4.5 7v4" stroke="#aaa" stroke-width="1.1"/></svg><svg style="position:absolute;left:740px;top:1015px;" width="12" height="16" viewBox="0 0 12 16"><path d="M2 1l4 8" stroke="#555" stroke-width="1.1"/><path d="M4.5 8l5 6.5-3 0.5-4-5z" fill="#f0a030"/></svg><div style="position:absolute;left:760px;top:1014px;width:19px;height:18px;box-sizing:border-box;background:#cce4f7;border:1px solid #a8d0f0;border-radius:2px"></div><svg style="position:absolute;left:762px;top:1016px;" width="15" height="14" viewBox="0 0 15 14"><rect x="0.5" y="0.5" width="13" height="10" fill="#fff" stroke="#3a8ed4" stroke-width="1"/><path d="M0.5 3h13" stroke="#3a8ed4"/><rect x="4.5" y="5.5" width="9.5" height="7" fill="#fff" stroke="#555" stroke-width="0.9"/><path d="M4.5 5.5l4.75 3.5 4.75-3.5" fill="none" stroke="#555" stroke-width="0.9"/></svg><div style="position:absolute;left:735px;top:1036px;width:1173px;height:4px;box-sizing:border-box;border:1px solid #cfcfcf;background:#fff"></div><div class="t" style="left:1184.0px;width:200px;text-align:center;top:1057.4px;font-size:10.8px;color:#222;">2.84 GB | 3.84 GB</div><div style="position:absolute;left:732px;top:235px;width:1181px;height:734px;background:linear-gradient(180deg,#fbfcff 0%,#f2f7fd 45%,#e4f0fd 100%)"></div><div class="t" style="left:1099.3px;top:253.1px;font-size:12.6px;color:#1a1a1a;letter-spacing:0.42px">Streamline: Velocity field</div><div class="t" style="left:1259.3px;top:253.1px;font-size:12.6px;color:#1a1a1a;letter-spacing:0.42px">Surface: Molar concentration, c</div><div class="t" style="left:1459.5px;top:253.1px;font-size:12.6px;color:#1a1a1a;letter-spacing:0.42px">Slice: Pressure</div><svg style="position:absolute;left:1889px;top:243px;" width="18" height="17" viewBox="0 0 18 17"><path d="M2 2l14-1 1 14-14 1z" fill="#e8eef5" stroke="#cdd6df" stroke-width="0.6"/><rect x="4" y="4" width="11" height="9" rx="1.5" fill="#1c3f8f"/><rect x="6" y="6" width="6" height="5" fill="#e8d84a"/><rect x="10.5" y="6" width="3" height="5" fill="#5aa0e0"/></svg><svg style="position:absolute;left:0;top:0" width="1920" height="1078" viewBox="0 0 1920 1078"><defs><clipPath id="vp"><rect x="733" y="235" width="1179" height="734"/></clipPath></defs><g clip-path="url(#vp)"><defs><filter id="blur12" x="-20%" y="-60%" width="140%" height="220%"><feGaussianBlur stdDeviation="12"/></filter><filter id="blur6" x="-20%" y="-60%" width="140%" height="220%"><feGaussianBlur stdDeviation="7"/></filter><linearGradient id="tube" x1="840" y1="0" x2="1020" y2="0" gradientUnits="userSpaceOnUse"><stop offset="0" stop-color="#d4c81a"/><stop offset="0.25" stop-color="#d8a018"/><stop offset="0.45" stop-color="#c83c16"/><stop offset="0.62" stop-color="#78104a"/><stop offset="1" stop-color="#4a0852"/></linearGradient><linearGradient id="body" x1="860" y1="0" x2="1100" y2="0" gradientUnits="userSpaceOnUse"><stop offset="0" stop-color="#5a1412"/><stop offset="0.3" stop-color="#420a1e"/><stop offset="0.6" stop-color="#2c0626"/><stop offset="1" stop-color="#24051e"/></linearGradient><linearGradient id="bodyb" x1="870" y1="0" x2="1080" y2="0" gradientUnits="userSpaceOnUse"><stop offset="0" stop-color="#a0601a"/><stop offset="0.2" stop-color="#8e2a16"/><stop offset="0.45" stop-color="#641020"/><stop offset="0.75" stop-color="#340628"/><stop offset="1" stop-color="#24051e"/></linearGradient><linearGradient id="capg" x1="1620" y1="0" x2="1825" y2="0" gradientUnits="userSpaceOnUse"><stop offset="0" stop-color="#a0a0a0"/><stop offset="0.5" stop-color="#b4b4b4"/><stop offset="1" stop-color="#a4a4a4"/></linearGradient><linearGradient id="capin" x1="0" y1="370" x2="0" y2="675" gradientUnits="userSpaceOnUse"><stop offset="0" stop-color="#9a9a9a"/><stop offset="0.5" stop-color="#8a8a8a"/><stop offset="1" stop-color="#7a7a7a"/></linearGradient><clipPath id="bodyclip"><polygon points="882.0,824.5 876.1,823.1 867.4,818.8 857.2,811.8 846.4,802.1 835.2,790.0 824.3,775.6 813.8,759.2 804.2,741.0 795.8,721.4 788.7,700.7 783.3,679.3 779.5,657.5 777.5,635.7 777.4,614.3 779.0,593.6 782.2,574.0 787.0,555.8 793.1,539.4 800.3,525.0 808.3,512.9 816.6,503.2 824.9,496.2 832.5,491.9 838.0,490.5 1623.5,369.4 1642.0,380.0 1674.0,440.0 1691.0,490.0 1697.0,540.0 1688.0,600.0 1670.0,648.0 1652.0,676.0"/></clipPath></defs><path d="M792 836 C 840 815, 1000 800, 1200 782 C 1400 765, 1600 752, 1760 755 C 1830 760, 1868 785, 1866 802 C 1830 812, 1650 808, 1400 822 C 1150 838, 950 860, 820 858 Z" fill="#a9b0b6" opacity="0.6" filter="url(#blur6)"/><path d="M1300 792 C 1500 766, 1720 756, 1800 768 C 1850 776, 1868 792, 1860 802 C 1800 812, 1650 810, 1300 822 Z" fill="#9aa1a8" opacity="0.4" filter="url(#blur12)"/><g clip-path="url(#bodyclip)"><polygon points="882.0,824.5 876.1,823.1 867.4,818.8 857.2,811.8 846.4,802.1 835.2,790.0 824.3,775.6 813.8,759.2 804.2,741.0 795.8,721.4 788.7,700.7 783.3,679.3 779.5,657.5 777.5,635.7 777.4,614.3 779.0,593.6 782.2,574.0 787.0,555.8 793.1,539.4 800.3,525.0 808.3,512.9 816.6,503.2 824.9,496.2 832.5,491.9 838.0,490.5 1623.5,369.4 1642.0,380.0 1674.0,440.0 1691.0,490.0 1697.0,540.0 1688.0,600.0 1670.0,648.0 1652.0,676.0" fill="url(#body)"/><polygon points="840,700 1300,619 1300,746 840,830" fill="url(#bodyb)"/><linearGradient id="rint" x1="1240" y1="0" x2="1360" y2="0" gradientUnits="userSpaceOnUse"><stop offset="0" stop-color="#3a2a48" stop-opacity="0"/><stop offset="1" stop-color="#5e5870"/></linearGradient><polygon points="1240,430 1740,351 1740,656 1240,753" fill="url(#rint)"/><polygon points="854.6,612.1 1300.0,568.6 1300.0,649.4 867.6,701.2 866.2,700.8 864.0,699.7 861.5,697.8 858.8,695.2 856.0,692.0 853.2,688.2 850.6,683.8 848.1,678.9 845.9,673.7 844.0,668.2 842.6,662.5 841.5,656.7 840.9,650.8 840.7,645.1 840.9,639.6 841.6,634.4 842.6,629.5 844.0,625.1 845.7,621.3 847.5,618.1 849.5,615.5 851.4,613.6 853.3,612.5" fill="url(#tube)"/><path d="M852 626 L1270 583" stroke="#2a0530" stroke-width="1.2" opacity="0.5"/><path d="M1012.0 593.0L1009.0 589.8" stroke="rgb(176, 175, 177)" stroke-width="5.4" stroke-linecap="round"/><path d="M1009.0 589.8L1005.8 587.4" stroke="rgb(176, 175, 177)" stroke-width="5.4" stroke-linecap="round"/><path d="M1005.8 587.4L1002.4 585.9" stroke="rgb(176, 175, 176)" stroke-width="5.4" stroke-linecap="round"/><path d="M1002.4 585.9L998.9 585.2" stroke="rgb(176, 175, 176)" stroke-width="5.4" stroke-linecap="round"/><path d="M998.9 585.2L995.5 585.5" stroke="rgb(176, 175, 175)" stroke-width="5.4" stroke-linecap="round"/><path d="M995.5 585.5L992.1 586.7" stroke="rgb(176, 174, 175)" stroke-width="5.4" stroke-linecap="round"/><path d="M992.1 586.7L988.9 588.8" stroke="rgb(176, 174, 174)" stroke-width="5.4" stroke-linecap="round"/><path d="M988.9 588.8L985.9 591.9" stroke="rgb(176, 174, 174)" stroke-width="5.4" stroke-linecap="round"/><path d="M985.9 591.9L983.2 595.8" stroke="rgb(176, 174, 173)" stroke-width="5.4" stroke-linecap="round"/><path d="M983.2 595.8L980.9 600.6" stroke="rgb(177, 174, 173)" stroke-width="5.4" stroke-linecap="round"/><path d="M980.9 600.6L978.9 606.0" stroke="rgb(177, 173, 172)" stroke-width="5.4" stroke-linecap="round"/><path d="M978.9 606.0L977.4 612.1" stroke="rgb(177, 173, 172)" stroke-width="5.4" stroke-linecap="round"/><path d="M977.4 612.1L976.5 618.7" stroke="rgb(177, 173, 171)" stroke-width="5.4" stroke-linecap="round"/><path d="M976.5 618.7L976.0 625.6" stroke="rgb(177, 173, 171)" stroke-width="5.4" stroke-linecap="round"/><path d="M976.0 625.6L976.1 632.7" stroke="rgb(177, 173, 170)" stroke-width="5.4" stroke-linecap="round"/><path d="M976.1 632.7L976.8 640.0" stroke="rgb(177, 172, 170)" stroke-width="5.4" stroke-linecap="round"/><path d="M976.8 640.0L978.0 647.1" stroke="rgb(177, 172, 169)" stroke-width="5.4" stroke-linecap="round"/><path d="M978.0 647.1L979.8 654.0" stroke="rgb(177, 172, 169)" stroke-width="5.4" stroke-linecap="round"/><path d="M979.8 654.0L982.1 660.6" stroke="rgb(177, 172, 168)" stroke-width="5.4" stroke-linecap="round"/><path d="M982.1 660.6L984.9 666.6" stroke="rgb(178, 172, 168)" stroke-width="5.4" stroke-linecap="round"/><path d="M984.9 666.6L988.1 672.0" stroke="rgb(178, 171, 167)" stroke-width="5.4" stroke-linecap="round"/><path d="M988.1 672.0L991.6 676.6" stroke="rgb(178, 171, 167)" stroke-width="5.4" stroke-linecap="round"/><path d="M991.6 676.6L995.5 680.2" stroke="rgb(178, 171, 166)" stroke-width="5.4" stroke-linecap="round"/><path d="M995.5 680.2L999.6 682.9" stroke="rgb(178, 171, 166)" stroke-width="5.4" stroke-linecap="round"/><path d="M999.6 682.9L1003.8 684.5" stroke="rgb(178, 171, 165)" stroke-width="5.4" stroke-linecap="round"/><path d="M1003.8 684.5L1008.1 685.0" stroke="rgb(178, 170, 165)" stroke-width="5.4" stroke-linecap="round"/><path d="M1008.1 685.0L1012.3 684.4" stroke="rgb(178, 170, 164)" stroke-width="5.4" stroke-linecap="round"/><path d="M1012.3 684.4L1016.4 682.6" stroke="rgb(178, 170, 164)" stroke-width="5.4" stroke-linecap="round"/><path d="M1016.4 682.6L1020.4 679.6" stroke="rgb(178, 170, 163)" stroke-width="5.4" stroke-linecap="round"/><path d="M1020.4 679.6L1024.0 675.6" stroke="rgb(179, 170, 163)" stroke-width="5.4" stroke-linecap="round"/><path d="M1024.0 675.6L1027.2 670.5" stroke="rgb(179, 169, 162)" stroke-width="5.4" stroke-linecap="round"/><path d="M1027.2 670.5L1030.0 664.5" stroke="rgb(179, 169, 162)" stroke-width="5.4" stroke-linecap="round"/><path d="M1030.0 664.5L1032.3 657.7" stroke="rgb(179, 169, 161)" stroke-width="5.4" stroke-linecap="round"/><path d="M1032.3 657.7L1034.0 650.2" stroke="rgb(179, 169, 161)" stroke-width="5.4" stroke-linecap="round"/><path d="M1034.0 650.2L1035.1 642.1" stroke="rgb(179, 169, 160)" stroke-width="5.4" stroke-linecap="round"/><path d="M1035.1 642.1L1035.5 633.6" stroke="rgb(179, 168, 160)" stroke-width="5.4" stroke-linecap="round"/><path d="M1035.5 633.6L1035.3 625.0" stroke="rgb(179, 168, 159)" stroke-width="5.4" stroke-linecap="round"/><path d="M1035.3 625.0L1034.5 616.3" stroke="rgb(179, 168, 159)" stroke-width="5.4" stroke-linecap="round"/><path d="M1034.5 616.3L1032.9 607.7" stroke="rgb(179, 168, 158)" stroke-width="5.4" stroke-linecap="round"/><path d="M1032.9 607.7L1030.8 599.5" stroke="rgb(180, 168, 158)" stroke-width="5.4" stroke-linecap="round"/><path d="M1030.8 599.5L1028.0 591.8" stroke="rgb(180, 167, 156)" stroke-width="5.4" stroke-linecap="round"/><path d="M1028.0 591.8L1024.7 584.7" stroke="rgb(180, 166, 155)" stroke-width="5.4" stroke-linecap="round"/><path d="M1024.7 584.7L1021.0 578.5" stroke="rgb(180, 165, 154)" stroke-width="5.4" stroke-linecap="round"/><path d="M1021.0 578.5L1016.8 573.3" stroke="rgb(180, 164, 153)" stroke-width="5.4" stroke-linecap="round"/><path d="M1016.8 573.3L1012.3 569.2" stroke="rgb(181, 164, 152)" stroke-width="5.4" stroke-linecap="round"/><path d="M1012.3 569.2L1007.6 566.3" stroke="rgb(181, 163, 151)" stroke-width="5.4" stroke-linecap="round"/><path d="M1007.6 566.3L1002.7 564.7" stroke="rgb(181, 162, 150)" stroke-width="5.4" stroke-linecap="round"/><path d="M1002.7 564.7L997.8 564.4" stroke="rgb(181, 161, 149)" stroke-width="5.4" stroke-linecap="round"/><path d="M997.8 564.4L993.0 565.5" stroke="rgb(181, 160, 148)" stroke-width="5.4" stroke-linecap="round"/><path d="M993.0 565.5L988.4 568.0" stroke="rgb(182, 160, 147)" stroke-width="5.4" stroke-linecap="round"/><path d="M988.4 568.0L984.0 571.8" stroke="rgb(182, 159, 146)" stroke-width="5.4" stroke-linecap="round"/><path d="M984.0 571.8L980.1 576.8" stroke="rgb(182, 158, 145)" stroke-width="5.4" stroke-linecap="round"/><path d="M980.1 576.8L976.5 583.1" stroke="rgb(182, 157, 144)" stroke-width="5.4" stroke-linecap="round"/><path d="M976.5 583.1L973.6 590.4" stroke="rgb(182, 156, 143)" stroke-width="5.4" stroke-linecap="round"/><path d="M973.6 590.4L971.2 598.6" stroke="rgb(183, 156, 142)" stroke-width="5.4" stroke-linecap="round"/><path d="M971.2 598.6L969.5 607.6" stroke="rgb(183, 155, 141)" stroke-width="5.4" stroke-linecap="round"/><path d="M969.5 607.6L968.5 617.2" stroke="rgb(183, 154, 140)" stroke-width="5.4" stroke-linecap="round"/><path d="M968.5 617.2L968.3 627.2" stroke="rgb(183, 153, 139)" stroke-width="5.4" stroke-linecap="round"/><path d="M968.3 627.2L968.9 637.3" stroke="rgb(183, 152, 138)" stroke-width="5.4" stroke-linecap="round"/><path d="M968.9 637.3L970.2 647.5" stroke="rgb(184, 152, 137)" stroke-width="5.4" stroke-linecap="round"/><path d="M970.2 647.5L972.2 657.4" stroke="rgb(184, 151, 135)" stroke-width="5.4" stroke-linecap="round"/><path d="M972.2 657.4L975.0 666.9" stroke="rgb(184, 150, 134)" stroke-width="5.4" stroke-linecap="round"/><path d="M975.0 666.9L978.4 675.7" stroke="rgb(184, 149, 133)" stroke-width="5.4" stroke-linecap="round"/><path d="M978.4 675.7L982.4 683.7" stroke="rgb(184, 148, 132)" stroke-width="5.4" stroke-linecap="round"/><path d="M982.4 683.7L986.9 690.6" stroke="rgb(185, 148, 131)" stroke-width="5.4" stroke-linecap="round"/><path d="M986.9 690.6L991.9 696.4" stroke="rgb(185, 147, 130)" stroke-width="5.4" stroke-linecap="round"/><path d="M991.9 696.4L997.2 700.8" stroke="rgb(185, 146, 129)" stroke-width="5.4" stroke-linecap="round"/><path d="M997.2 700.8L1002.7 703.9" stroke="rgb(185, 145, 128)" stroke-width="5.4" stroke-linecap="round"/><path d="M1002.7 703.9L1008.4 705.4" stroke="rgb(185, 144, 127)" stroke-width="5.4" stroke-linecap="round"/><path d="M1008.4 705.4L1014.0 705.3" stroke="rgb(186, 144, 126)" stroke-width="5.4" stroke-linecap="round"/><path d="M1014.0 705.3L1019.6 703.7" stroke="rgb(186, 143, 125)" stroke-width="5.4" stroke-linecap="round"/><path d="M1019.6 703.7L1024.9 700.5" stroke="rgb(186, 142, 124)" stroke-width="5.4" stroke-linecap="round"/><path d="M1024.9 700.5L1029.8 695.8" stroke="rgb(186, 141, 123)" stroke-width="5.4" stroke-linecap="round"/><path d="M1029.8 695.8L1034.3 689.6" stroke="rgb(186, 140, 122)" stroke-width="5.4" stroke-linecap="round"/><path d="M1034.3 689.6L1038.3 682.2" stroke="rgb(187, 140, 121)" stroke-width="5.4" stroke-linecap="round"/><path d="M1038.3 682.2L1041.6 673.5" stroke="rgb(187, 139, 120)" stroke-width="5.4" stroke-linecap="round"/><path d="M1041.6 673.5L1044.2 663.8" stroke="rgb(187, 138, 119)" stroke-width="5.4" stroke-linecap="round"/><path d="M1044.2 663.8L1046.0 653.3" stroke="rgb(187, 137, 118)" stroke-width="5.4" stroke-linecap="round"/><path d="M1046.0 653.3L1047.0 642.2" stroke="rgb(187, 136, 117)" stroke-width="5.4" stroke-linecap="round"/><path d="M1047.0 642.2L1047.2 630.7" stroke="rgb(188, 136, 116)" stroke-width="5.4" stroke-linecap="round"/><path d="M1047.2 630.7L1046.4 619.0" stroke="rgb(187, 134, 115)" stroke-width="5.4" stroke-linecap="round"/><path d="M1046.4 619.0L1044.9 607.4" stroke="rgb(187, 133, 115)" stroke-width="5.4" stroke-linecap="round"/><path d="M1044.9 607.4L1042.5 596.2" stroke="rgb(187, 132, 115)" stroke-width="5.4" stroke-linecap="round"/><path d="M1042.5 596.2L1039.3 585.5" stroke="rgb(187, 131, 115)" stroke-width="5.4" stroke-linecap="round"/><path d="M1039.3 585.5L1035.4 575.6" stroke="rgb(187, 130, 115)" stroke-width="5.4" stroke-linecap="round"/><path d="M1035.4 575.6L1030.9 566.7" stroke="rgb(187, 129, 114)" stroke-width="5.4" stroke-linecap="round"/><path d="M1030.9 566.7L1025.8 559.1" stroke="rgb(187, 127, 114)" stroke-width="5.4" stroke-linecap="round"/><path d="M1025.8 559.1L1020.2 552.8" stroke="rgb(187, 126, 114)" stroke-width="5.4" stroke-linecap="round"/><path d="M1020.2 552.8L1014.3 548.0" stroke="rgb(187, 125, 114)" stroke-width="5.4" stroke-linecap="round"/><path d="M1014.3 548.0L1008.2 545.0" stroke="rgb(187, 124, 114)" stroke-width="5.4" stroke-linecap="round"/><path d="M1008.2 545.0L1002.0 543.6" stroke="rgb(186, 123, 113)" stroke-width="5.4" stroke-linecap="round"/><path d="M1002.0 543.6L995.8 544.0" stroke="rgb(186, 122, 113)" stroke-width="5.4" stroke-linecap="round"/><path d="M995.8 544.0L989.8 546.3" stroke="rgb(186, 121, 113)" stroke-width="5.4" stroke-linecap="round"/><path d="M989.8 546.3L984.1 550.3" stroke="rgb(186, 119, 113)" stroke-width="5.4" stroke-linecap="round"/><path d="M984.1 550.3L978.8 555.9" stroke="rgb(186, 118, 113)" stroke-width="5.4" stroke-linecap="round"/><path d="M978.8 555.9L974.0 563.2" stroke="rgb(186, 117, 112)" stroke-width="5.4" stroke-linecap="round"/><path d="M974.0 563.2L969.9 572.0" stroke="rgb(186, 116, 112)" stroke-width="5.4" stroke-linecap="round"/><path d="M969.9 572.0L966.5 582.0" stroke="rgb(186, 115, 112)" stroke-width="5.4" stroke-linecap="round"/><path d="M966.5 582.0L963.9 593.2" stroke="rgb(186, 114, 112)" stroke-width="5.4" stroke-linecap="round"/><path d="M963.9 593.2L962.2 605.2" stroke="rgb(186, 113, 112)" stroke-width="5.4" stroke-linecap="round"/><path d="M962.2 605.2L961.4 617.9" stroke="rgb(185, 111, 111)" stroke-width="5.4" stroke-linecap="round"/><path d="M961.4 617.9L961.6 630.9" stroke="rgb(185, 110, 111)" stroke-width="5.4" stroke-linecap="round"/><path d="M961.6 630.9L962.7 644.1" stroke="rgb(185, 109, 111)" stroke-width="5.4" stroke-linecap="round"/><path d="M962.7 644.1L964.7 657.0" stroke="rgb(185, 108, 111)" stroke-width="5.4" stroke-linecap="round"/><path d="M964.7 657.0L967.7 669.6" stroke="rgb(185, 107, 111)" stroke-width="5.4" stroke-linecap="round"/><path d="M967.7 669.6L971.5 681.4" stroke="rgb(185, 106, 110)" stroke-width="5.4" stroke-linecap="round"/><path d="M971.5 681.4L976.1 692.3" stroke="rgb(185, 104, 110)" stroke-width="5.4" stroke-linecap="round"/><path d="M976.1 692.3L981.3 702.0" stroke="rgb(185, 103, 110)" stroke-width="5.4" stroke-linecap="round"/><path d="M981.3 702.0L987.2 710.3" stroke="rgb(185, 102, 110)" stroke-width="5.4" stroke-linecap="round"/><path d="M987.2 710.3L993.5 717.0" stroke="rgb(185, 101, 110)" stroke-width="5.4" stroke-linecap="round"/><path d="M993.5 717.0L1000.2 721.9" stroke="rgb(184, 100, 109)" stroke-width="5.4" stroke-linecap="round"/><path d="M1000.2 721.9L1007.1 725.0" stroke="rgb(184, 99, 109)" stroke-width="5.4" stroke-linecap="round"/><path d="M1007.1 725.0L1014.0 726.1" stroke="rgb(184, 98, 109)" stroke-width="5.4" stroke-linecap="round"/><path d="M1014.0 726.1L1020.9 725.2" stroke="rgb(184, 96, 109)" stroke-width="5.4" stroke-linecap="round"/><path d="M1020.9 725.2L1027.5 722.3" stroke="rgb(184, 95, 109)" stroke-width="5.4" stroke-linecap="round"/><path d="M1027.5 722.3L1033.8 717.4" stroke="rgb(184, 94, 108)" stroke-width="5.4" stroke-linecap="round"/><path d="M1033.8 717.4L1039.6 710.7" stroke="rgb(184, 93, 108)" stroke-width="5.4" stroke-linecap="round"/><path d="M1039.6 710.7L1044.8 702.2" stroke="rgb(184, 92, 108)" stroke-width="5.4" stroke-linecap="round"/><path d="M1044.8 702.2L1049.3 692.1" stroke="rgb(184, 91, 108)" stroke-width="5.4" stroke-linecap="round"/><path d="M1049.3 692.1L1052.9 680.6" stroke="rgb(184, 90, 108)" stroke-width="5.4" stroke-linecap="round"/><path d="M1052.9 680.6L1055.6 667.9" stroke="rgb(183, 89, 107)" stroke-width="5.4" stroke-linecap="round"/><path d="M1055.6 667.9L1057.4 654.4" stroke="rgb(182, 88, 107)" stroke-width="5.4" stroke-linecap="round"/><path d="M1057.4 654.4L1058.1 640.1" stroke="rgb(181, 87, 107)" stroke-width="5.4" stroke-linecap="round"/><path d="M1058.1 640.1L1057.8 625.6" stroke="rgb(181, 86, 107)" stroke-width="5.4" stroke-linecap="round"/><path d="M1057.8 625.6L1056.4 610.9" stroke="rgb(180, 85, 107)" stroke-width="5.4" stroke-linecap="round"/><path d="M1056.4 610.9L1054.1 596.6" stroke="rgb(179, 84, 107)" stroke-width="5.4" stroke-linecap="round"/><path d="M1054.1 596.6L1050.8 582.7" stroke="rgb(179, 84, 107)" stroke-width="5.4" stroke-linecap="round"/><path d="M1050.8 582.7L1046.5 569.8" stroke="rgb(178, 83, 107)" stroke-width="5.4" stroke-linecap="round"/><path d="M1046.5 569.8L1041.5 557.9" stroke="rgb(177, 82, 107)" stroke-width="5.4" stroke-linecap="round"/><path d="M1041.5 557.9L1035.7 547.4" stroke="rgb(177, 81, 107)" stroke-width="5.4" stroke-linecap="round"/><path d="M1035.7 547.4L1029.3 538.6" stroke="rgb(176, 80, 106)" stroke-width="5.4" stroke-linecap="round"/><path d="M1029.3 538.6L1022.4 531.6" stroke="rgb(175, 79, 106)" stroke-width="5.4" stroke-linecap="round"/><path d="M1022.4 531.6L1015.2 526.5" stroke="rgb(174, 78, 106)" stroke-width="5.4" stroke-linecap="round"/><path d="M1015.2 526.5L1007.8 523.5" stroke="rgb(174, 78, 106)" stroke-width="5.4" stroke-linecap="round"/><path d="M1007.8 523.5L1000.3 522.7" stroke="rgb(173, 77, 106)" stroke-width="5.4" stroke-linecap="round"/><path d="M1000.3 522.7L993.0 524.2" stroke="rgb(172, 76, 106)" stroke-width="5.4" stroke-linecap="round"/><path d="M993.0 524.2L985.9 527.8" stroke="rgb(172, 75, 106)" stroke-width="5.4" stroke-linecap="round"/><path d="M985.9 527.8L979.3 533.6" stroke="rgb(171, 74, 106)" stroke-width="5.4" stroke-linecap="round"/><path d="M979.3 533.6L973.3 541.5" stroke="rgb(170, 73, 106)" stroke-width="5.4" stroke-linecap="round"/><path d="M973.3 541.5L967.9 551.2" stroke="rgb(170, 73, 106)" stroke-width="5.4" stroke-linecap="round"/><path d="M967.9 551.2L963.4 562.6" stroke="rgb(169, 72, 105)" stroke-width="5.4" stroke-linecap="round"/><path d="M963.4 562.6L959.8 575.6" stroke="rgb(168, 71, 105)" stroke-width="5.4" stroke-linecap="round"/><path d="M959.8 575.6L957.2 589.8" stroke="rgb(167, 70, 105)" stroke-width="5.4" stroke-linecap="round"/><path d="M957.2 589.8L955.6 604.9" stroke="rgb(167, 69, 105)" stroke-width="5.4" stroke-linecap="round"/><path d="M955.6 604.9L955.2 620.7" stroke="rgb(166, 68, 105)" stroke-width="5.4" stroke-linecap="round"/><path d="M955.2 620.7L955.9 636.8" stroke="rgb(165, 67, 105)" stroke-width="5.4" stroke-linecap="round"/><path d="M955.9 636.8L957.6 652.8" stroke="rgb(165, 67, 105)" stroke-width="5.4" stroke-linecap="round"/><path d="M957.6 652.8L960.5 668.6" stroke="rgb(164, 66, 105)" stroke-width="5.4" stroke-linecap="round"/><path d="M960.5 668.6L964.5 683.6" stroke="rgb(163, 65, 105)" stroke-width="5.4" stroke-linecap="round"/><path d="M964.5 683.6L969.3 697.6" stroke="rgb(163, 64, 105)" stroke-width="5.4" stroke-linecap="round"/><path d="M969.3 697.6L975.1 710.4" stroke="rgb(162, 63, 104)" stroke-width="5.4" stroke-linecap="round"/><path d="M975.1 710.4L981.6 721.5" stroke="rgb(161, 62, 104)" stroke-width="5.4" stroke-linecap="round"/><path d="M981.6 721.5L988.7 730.9" stroke="rgb(160, 61, 104)" stroke-width="5.4" stroke-linecap="round"/><path d="M988.7 730.9L996.3 738.2" stroke="rgb(160, 61, 104)" stroke-width="5.4" stroke-linecap="round"/><path d="M996.3 738.2L1004.3 743.3" stroke="rgb(159, 60, 104)" stroke-width="5.4" stroke-linecap="round"/><path d="M1004.3 743.3L1012.4 746.1" stroke="rgb(158, 59, 104)" stroke-width="5.4" stroke-linecap="round"/><path d="M1012.4 746.1L1020.5 746.5" stroke="rgb(158, 58, 104)" stroke-width="5.4" stroke-linecap="round"/><path d="M1020.5 746.5L1028.4 744.4" stroke="rgb(157, 57, 104)" stroke-width="5.4" stroke-linecap="round"/><path d="M1028.4 744.4L1036.0 739.9" stroke="rgb(156, 56, 104)" stroke-width="5.4" stroke-linecap="round"/><path d="M1036.0 739.9L1043.1 733.1" stroke="rgb(156, 56, 104)" stroke-width="5.4" stroke-linecap="round"/><path d="M1043.1 733.1L1049.6 724.1" stroke="rgb(154, 55, 103)" stroke-width="5.4" stroke-linecap="round"/><path d="M1049.6 724.1L1055.2 713.1" stroke="rgb(153, 54, 102)" stroke-width="5.4" stroke-linecap="round"/><path d="M1055.2 713.1L1060.0 700.2" stroke="rgb(152, 54, 102)" stroke-width="5.4" stroke-linecap="round"/><path d="M1060.0 700.2L1063.8 685.7" stroke="rgb(151, 54, 102)" stroke-width="5.4" stroke-linecap="round"/><path d="M1063.8 685.7L1066.4 670.0" stroke="rgb(150, 53, 101)" stroke-width="5.4" stroke-linecap="round"/><path d="M1066.4 670.0L1067.9 653.3" stroke="rgb(149, 52, 101)" stroke-width="5.4" stroke-linecap="round"/><path d="M1067.9 653.3L1068.3 636.0" stroke="rgb(148, 52, 100)" stroke-width="5.4" stroke-linecap="round"/><path d="M1068.3 636.0L1067.4 618.4" stroke="rgb(147, 52, 100)" stroke-width="5.4" stroke-linecap="round"/><path d="M1067.4 618.4L1065.3 600.8" stroke="rgb(146, 51, 99)" stroke-width="5.4" stroke-linecap="round"/><path d="M1065.3 600.8L1062.1 583.8" stroke="rgb(145, 51, 99)" stroke-width="5.4" stroke-linecap="round"/><path d="M1062.1 583.8L1057.7 567.6" stroke="rgb(143, 50, 98)" stroke-width="5.4" stroke-linecap="round"/><path d="M1057.7 567.6L1052.4 552.5" stroke="rgb(142, 50, 98)" stroke-width="5.4" stroke-linecap="round"/><path d="M1052.4 552.5L1046.1 538.9" stroke="rgb(141, 49, 97)" stroke-width="5.4" stroke-linecap="round"/><path d="M1046.1 538.9L1039.1 527.1" stroke="rgb(140, 49, 97)" stroke-width="5.4" stroke-linecap="round"/><path d="M1039.1 527.1L1031.5 517.3" stroke="rgb(139, 48, 96)" stroke-width="5.4" stroke-linecap="round"/><path d="M1031.5 517.3L1023.4 509.8" stroke="rgb(138, 48, 96)" stroke-width="5.4" stroke-linecap="round"/><path d="M1023.4 509.8L1014.9 504.7" stroke="rgb(137, 47, 95)" stroke-width="5.4" stroke-linecap="round"/><path d="M1014.9 504.7L1006.4 502.2" stroke="rgb(136, 47, 95)" stroke-width="5.4" stroke-linecap="round"/><path d="M1006.4 502.2L997.8 502.3" stroke="rgb(135, 46, 94)" stroke-width="5.4" stroke-linecap="round"/><path d="M997.8 502.3L989.5 505.0" stroke="rgb(134, 46, 94)" stroke-width="5.4" stroke-linecap="round"/><path d="M989.5 505.0L981.6 510.4" stroke="rgb(132, 45, 93)" stroke-width="5.4" stroke-linecap="round"/><path d="M981.6 510.4L974.3 518.2" stroke="rgb(131, 45, 93)" stroke-width="5.4" stroke-linecap="round"/><path d="M974.3 518.2L967.7 528.4" stroke="rgb(130, 44, 92)" stroke-width="5.4" stroke-linecap="round"/><path d="M967.7 528.4L961.9 540.8" stroke="rgb(129, 43, 91)" stroke-width="5.4" stroke-linecap="round"/><path d="M961.9 540.8L957.2 555.2" stroke="rgb(128, 43, 91)" stroke-width="5.4" stroke-linecap="round"/><path d="M957.2 555.2L953.5 571.2" stroke="rgb(127, 42, 91)" stroke-width="5.4" stroke-linecap="round"/><path d="M953.5 571.2L951.1 588.5" stroke="rgb(126, 42, 90)" stroke-width="5.4" stroke-linecap="round"/><path d="M951.1 588.5L949.8 606.7" stroke="rgb(125, 42, 90)" stroke-width="5.4" stroke-linecap="round"/><path d="M949.8 606.7L949.9 625.6" stroke="rgb(124, 41, 89)" stroke-width="5.4" stroke-linecap="round"/><path d="M949.9 625.6L951.2 644.7" stroke="rgb(123, 41, 89)" stroke-width="5.4" stroke-linecap="round"/><path d="M951.2 644.7L953.8 663.6" stroke="rgb(121, 40, 88)" stroke-width="5.4" stroke-linecap="round"/><path d="M953.8 663.6L957.6 682.0" stroke="rgb(120, 39, 87)" stroke-width="5.4" stroke-linecap="round"/><path d="M957.6 682.0L962.5 699.3" stroke="rgb(119, 39, 87)" stroke-width="5.4" stroke-linecap="round"/><path d="M962.5 699.3L968.5 715.4" stroke="rgb(118, 39, 87)" stroke-width="5.4" stroke-linecap="round"/><path d="M968.5 715.4L975.5 729.7" stroke="rgb(117, 38, 86)" stroke-width="5.4" stroke-linecap="round"/><path d="M975.5 729.7L983.2 742.1" stroke="rgb(116, 37, 86)" stroke-width="5.4" stroke-linecap="round"/><path d="M983.2 742.1L991.5 752.2" stroke="rgb(115, 37, 85)" stroke-width="5.4" stroke-linecap="round"/><path d="M991.5 752.2L1000.3 759.9" stroke="rgb(114, 37, 85)" stroke-width="5.4" stroke-linecap="round"/><path d="M1000.3 759.9L1009.4 764.8" stroke="rgb(113, 36, 84)" stroke-width="5.4" stroke-linecap="round"/><path d="M1009.4 764.8L1018.6 767.0" stroke="rgb(112, 36, 84)" stroke-width="5.4" stroke-linecap="round"/><path d="M1018.6 767.0L1027.7 766.4" stroke="rgb(111, 35, 83)" stroke-width="5.4" stroke-linecap="round"/><path d="M1027.7 766.4L1036.6 762.9" stroke="rgb(110, 35, 83)" stroke-width="5.4" stroke-linecap="round"/><path d="M1036.6 762.9L1044.9 756.5" stroke="rgb(109, 35, 82)" stroke-width="5.4" stroke-linecap="round"/><path d="M1044.9 756.5L1052.6 747.5" stroke="rgb(109, 35, 82)" stroke-width="5.4" stroke-linecap="round"/><path d="M1052.6 747.5L1059.6 736.0" stroke="rgb(108, 34, 81)" stroke-width="5.4" stroke-linecap="round"/><path d="M1059.6 736.0L1065.5 722.2" stroke="rgb(107, 34, 81)" stroke-width="5.4" stroke-linecap="round"/><path d="M1065.5 722.2L1070.4 706.4" stroke="rgb(107, 34, 80)" stroke-width="5.4" stroke-linecap="round"/><path d="M1070.4 706.4L1074.1 688.8" stroke="rgb(106, 34, 80)" stroke-width="5.4" stroke-linecap="round"/><path d="M1074.1 688.8L1076.5 669.9" stroke="rgb(105, 33, 79)" stroke-width="5.4" stroke-linecap="round"/><path d="M1076.5 669.9L1077.7 650.1" stroke="rgb(105, 33, 79)" stroke-width="5.4" stroke-linecap="round"/><path d="M1077.7 650.1L1077.4 629.6" stroke="rgb(104, 33, 79)" stroke-width="5.4" stroke-linecap="round"/><path d="M1077.4 629.6L1075.8 609.0" stroke="rgb(103, 33, 78)" stroke-width="5.4" stroke-linecap="round"/><path d="M1075.8 609.0L1072.9 588.7" stroke="rgb(102, 32, 78)" stroke-width="5.4" stroke-linecap="round"/><path d="M1072.9 588.7L1068.7 569.2" stroke="rgb(102, 32, 77)" stroke-width="5.4" stroke-linecap="round"/><path d="M1068.7 569.2L1063.4 550.7" stroke="rgb(101, 32, 77)" stroke-width="5.4" stroke-linecap="round"/><path d="M1063.4 550.7L1056.9 533.7" stroke="rgb(100, 31, 76)" stroke-width="5.4" stroke-linecap="round"/><path d="M1056.9 533.7L1049.5 518.6" stroke="rgb(100, 31, 76)" stroke-width="5.4" stroke-linecap="round"/><path d="M1049.5 518.6L1041.3 505.8" stroke="rgb(99, 31, 75)" stroke-width="5.4" stroke-linecap="round"/><path d="M1041.3 505.8L1032.5 495.3" stroke="rgb(98, 31, 75)" stroke-width="5.4" stroke-linecap="round"/><path d="M1032.5 495.3L1023.2 487.7" stroke="rgb(98, 31, 75)" stroke-width="5.4" stroke-linecap="round"/><path d="M1023.2 487.7L1013.7 482.9" stroke="rgb(97, 30, 74)" stroke-width="5.4" stroke-linecap="round"/><path d="M1013.7 482.9L1004.1 481.1" stroke="rgb(96, 30, 74)" stroke-width="5.4" stroke-linecap="round"/><path d="M1004.1 481.1L994.7 482.4" stroke="rgb(95, 30, 73)" stroke-width="5.4" stroke-linecap="round"/><path d="M994.7 482.4L985.6 486.7" stroke="rgb(95, 30, 73)" stroke-width="5.4" stroke-linecap="round"/><path d="M985.6 486.7L977.0 494.0" stroke="rgb(94, 29, 72)" stroke-width="5.4" stroke-linecap="round"/><path d="M977.0 494.0L969.1 504.2" stroke="rgb(93, 29, 72)" stroke-width="5.4" stroke-linecap="round"/><path d="M969.1 504.2L962.1 517.0" stroke="rgb(93, 29, 71)" stroke-width="5.4" stroke-linecap="round"/><path d="M962.1 517.0L956.2 532.3" stroke="rgb(92, 29, 71)" stroke-width="5.4" stroke-linecap="round"/><path d="M956.2 532.3L951.4 549.7" stroke="rgb(91, 28, 70)" stroke-width="5.4" stroke-linecap="round"/><path d="M951.4 549.7L947.9 568.8" stroke="rgb(91, 28, 70)" stroke-width="5.4" stroke-linecap="round"/><path d="M947.9 568.8L945.7 589.3" stroke="rgb(90, 28, 70)" stroke-width="5.4" stroke-linecap="round"/><path d="M945.7 589.3L945.0 610.7" stroke="rgb(89, 28, 69)" stroke-width="5.4" stroke-linecap="round"/><path d="M945.0 610.7L945.6 632.7" stroke="rgb(88, 27, 69)" stroke-width="5.4" stroke-linecap="round"/><path d="M945.6 632.7L947.7 654.8" stroke="rgb(88, 27, 68)" stroke-width="5.4" stroke-linecap="round"/><path d="M947.7 654.8L951.2 676.4" stroke="rgb(87, 27, 68)" stroke-width="5.4" stroke-linecap="round"/><path d="M951.2 676.4L955.9 697.2" stroke="rgb(86, 27, 67)" stroke-width="5.4" stroke-linecap="round"/><path d="M955.9 697.2L961.9 716.7" stroke="rgb(86, 26, 67)" stroke-width="5.4" stroke-linecap="round"/><path d="M961.9 716.7L969.0 734.5" stroke="rgb(85, 26, 66)" stroke-width="5.4" stroke-linecap="round"/><path d="M969.0 734.5L977.1 750.2" stroke="rgb(84, 26, 66)" stroke-width="5.4" stroke-linecap="round"/><path d="M977.1 750.2L986.0 763.6" stroke="rgb(84, 26, 66)" stroke-width="5.4" stroke-linecap="round"/><path d="M1113.0 583.0L1110.0 579.8" stroke="rgb(176, 175, 177)" stroke-width="5.4" stroke-linecap="round"/><path d="M1110.0 579.8L1106.8 577.4" stroke="rgb(176, 175, 177)" stroke-width="5.4" stroke-linecap="round"/><path d="M1106.8 577.4L1103.4 575.9" stroke="rgb(176, 175, 176)" stroke-width="5.4" stroke-linecap="round"/><path d="M1103.4 575.9L1099.9 575.2" stroke="rgb(176, 175, 176)" stroke-width="5.4" stroke-linecap="round"/><path d="M1099.9 575.2L1096.5 575.5" stroke="rgb(176, 175, 175)" stroke-width="5.4" stroke-linecap="round"/><path d="M1096.5 575.5L1093.1 576.7" stroke="rgb(176, 174, 175)" stroke-width="5.4" stroke-linecap="round"/><path d="M1093.1 576.7L1089.9 578.8" stroke="rgb(176, 174, 174)" stroke-width="5.4" stroke-linecap="round"/><path d="M1089.9 578.8L1086.9 581.9" stroke="rgb(176, 174, 174)" stroke-width="5.4" stroke-linecap="round"/><path d="M1086.9 581.9L1084.2 585.8" stroke="rgb(176, 174, 173)" stroke-width="5.4" stroke-linecap="round"/><path d="M1084.2 585.8L1081.9 590.6" stroke="rgb(177, 174, 173)" stroke-width="5.4" stroke-linecap="round"/><path d="M1081.9 590.6L1079.9 596.0" stroke="rgb(177, 173, 172)" stroke-width="5.4" stroke-linecap="round"/><path d="M1079.9 596.0L1078.4 602.1" stroke="rgb(177, 173, 172)" stroke-width="5.4" stroke-linecap="round"/><path d="M1078.4 602.1L1077.5 608.7" stroke="rgb(177, 173, 171)" stroke-width="5.4" stroke-linecap="round"/><path d="M1077.5 608.7L1077.0 615.6" stroke="rgb(177, 173, 171)" stroke-width="5.4" stroke-linecap="round"/><path d="M1077.0 615.6L1077.1 622.7" stroke="rgb(177, 173, 170)" stroke-width="5.4" stroke-linecap="round"/><path d="M1077.1 622.7L1077.8 630.0" stroke="rgb(177, 172, 170)" stroke-width="5.4" stroke-linecap="round"/><path d="M1077.8 630.0L1079.0 637.1" stroke="rgb(177, 172, 169)" stroke-width="5.4" stroke-linecap="round"/><path d="M1079.0 637.1L1080.8 644.0" stroke="rgb(177, 172, 169)" stroke-width="5.4" stroke-linecap="round"/><path d="M1080.8 644.0L1083.1 650.6" stroke="rgb(177, 172, 168)" stroke-width="5.4" stroke-linecap="round"/><path d="M1083.1 650.6L1085.9 656.6" stroke="rgb(178, 172, 168)" stroke-width="5.4" stroke-linecap="round"/><path d="M1085.9 656.6L1089.1 662.0" stroke="rgb(178, 171, 167)" stroke-width="5.4" stroke-linecap="round"/><path d="M1089.1 662.0L1092.6 666.6" stroke="rgb(178, 171, 167)" stroke-width="5.4" stroke-linecap="round"/><path d="M1092.6 666.6L1096.5 670.2" stroke="rgb(178, 171, 166)" stroke-width="5.4" stroke-linecap="round"/><path d="M1096.5 670.2L1100.6 672.9" stroke="rgb(178, 171, 166)" stroke-width="5.4" stroke-linecap="round"/><path d="M1100.6 672.9L1104.8 674.5" stroke="rgb(178, 171, 165)" stroke-width="5.4" stroke-linecap="round"/><path d="M1104.8 674.5L1109.1 675.0" stroke="rgb(178, 170, 165)" stroke-width="5.4" stroke-linecap="round"/><path d="M1109.1 675.0L1113.3 674.4" stroke="rgb(178, 170, 164)" stroke-width="5.4" stroke-linecap="round"/><path d="M1113.3 674.4L1117.4 672.6" stroke="rgb(178, 170, 164)" stroke-width="5.4" stroke-linecap="round"/><path d="M1117.4 672.6L1121.4 669.6" stroke="rgb(178, 170, 163)" stroke-width="5.4" stroke-linecap="round"/><path d="M1121.4 669.6L1125.0 665.6" stroke="rgb(179, 170, 163)" stroke-width="5.4" stroke-linecap="round"/><path d="M1125.0 665.6L1128.2 660.5" stroke="rgb(179, 169, 162)" stroke-width="5.4" stroke-linecap="round"/><path d="M1128.2 660.5L1131.0 654.5" stroke="rgb(179, 169, 162)" stroke-width="5.4" stroke-linecap="round"/><path d="M1131.0 654.5L1133.3 647.7" stroke="rgb(179, 169, 161)" stroke-width="5.4" stroke-linecap="round"/><path d="M1133.3 647.7L1135.0 640.2" stroke="rgb(179, 169, 161)" stroke-width="5.4" stroke-linecap="round"/><path d="M1135.0 640.2L1136.1 632.1" stroke="rgb(179, 169, 160)" stroke-width="5.4" stroke-linecap="round"/><path d="M1136.1 632.1L1136.5 623.6" stroke="rgb(179, 168, 160)" stroke-width="5.4" stroke-linecap="round"/><path d="M1136.5 623.6L1136.3 615.0" stroke="rgb(179, 168, 159)" stroke-width="5.4" stroke-linecap="round"/><path d="M1136.3 615.0L1135.5 606.3" stroke="rgb(179, 168, 159)" stroke-width="5.4" stroke-linecap="round"/><path d="M1135.5 606.3L1133.9 597.7" stroke="rgb(179, 168, 158)" stroke-width="5.4" stroke-linecap="round"/><path d="M1133.9 597.7L1131.8 589.5" stroke="rgb(180, 168, 158)" stroke-width="5.4" stroke-linecap="round"/><path d="M1131.8 589.5L1129.0 581.8" stroke="rgb(180, 167, 156)" stroke-width="5.4" stroke-linecap="round"/><path d="M1129.0 581.8L1125.7 574.7" stroke="rgb(180, 166, 155)" stroke-width="5.4" stroke-linecap="round"/><path d="M1125.7 574.7L1122.0 568.5" stroke="rgb(180, 165, 154)" stroke-width="5.4" stroke-linecap="round"/><path d="M1122.0 568.5L1117.8 563.3" stroke="rgb(180, 164, 153)" stroke-width="5.4" stroke-linecap="round"/><path d="M1117.8 563.3L1113.3 559.2" stroke="rgb(181, 164, 152)" stroke-width="5.4" stroke-linecap="round"/><path d="M1113.3 559.2L1108.6 556.3" stroke="rgb(181, 163, 151)" stroke-width="5.4" stroke-linecap="round"/><path d="M1108.6 556.3L1103.7 554.7" stroke="rgb(181, 162, 150)" stroke-width="5.4" stroke-linecap="round"/><path d="M1103.7 554.7L1098.8 554.4" stroke="rgb(181, 161, 149)" stroke-width="5.4" stroke-linecap="round"/><path d="M1098.8 554.4L1094.0 555.5" stroke="rgb(181, 160, 148)" stroke-width="5.4" stroke-linecap="round"/><path d="M1094.0 555.5L1089.4 558.0" stroke="rgb(182, 160, 147)" stroke-width="5.4" stroke-linecap="round"/><path d="M1089.4 558.0L1085.0 561.8" stroke="rgb(182, 159, 146)" stroke-width="5.4" stroke-linecap="round"/><path d="M1085.0 561.8L1081.1 566.8" stroke="rgb(182, 158, 145)" stroke-width="5.4" stroke-linecap="round"/><path d="M1081.1 566.8L1077.5 573.1" stroke="rgb(182, 157, 144)" stroke-width="5.4" stroke-linecap="round"/><path d="M1077.5 573.1L1074.6 580.4" stroke="rgb(182, 156, 143)" stroke-width="5.4" stroke-linecap="round"/><path d="M1074.6 580.4L1072.2 588.6" stroke="rgb(183, 156, 142)" stroke-width="5.4" stroke-linecap="round"/><path d="M1072.2 588.6L1070.5 597.6" stroke="rgb(183, 155, 141)" stroke-width="5.4" stroke-linecap="round"/><path d="M1070.5 597.6L1069.5 607.2" stroke="rgb(183, 154, 140)" stroke-width="5.4" stroke-linecap="round"/><path d="M1069.5 607.2L1069.3 617.2" stroke="rgb(183, 153, 139)" stroke-width="5.4" stroke-linecap="round"/><path d="M1069.3 617.2L1069.9 627.3" stroke="rgb(183, 152, 138)" stroke-width="5.4" stroke-linecap="round"/><path d="M1069.9 627.3L1071.2 637.5" stroke="rgb(184, 152, 137)" stroke-width="5.4" stroke-linecap="round"/><path d="M1071.2 637.5L1073.2 647.4" stroke="rgb(184, 151, 135)" stroke-width="5.4" stroke-linecap="round"/><path d="M1073.2 647.4L1076.0 656.9" stroke="rgb(184, 150, 134)" stroke-width="5.4" stroke-linecap="round"/><path d="M1076.0 656.9L1079.4 665.7" stroke="rgb(184, 149, 133)" stroke-width="5.4" stroke-linecap="round"/><path d="M1079.4 665.7L1083.4 673.7" stroke="rgb(184, 148, 132)" stroke-width="5.4" stroke-linecap="round"/><path d="M1083.4 673.7L1087.9 680.6" stroke="rgb(185, 148, 131)" stroke-width="5.4" stroke-linecap="round"/><path d="M1087.9 680.6L1092.9 686.4" stroke="rgb(185, 147, 130)" stroke-width="5.4" stroke-linecap="round"/><path d="M1092.9 686.4L1098.2 690.8" stroke="rgb(185, 146, 129)" stroke-width="5.4" stroke-linecap="round"/><path d="M1098.2 690.8L1103.7 693.9" stroke="rgb(185, 145, 128)" stroke-width="5.4" stroke-linecap="round"/><path d="M1103.7 693.9L1109.4 695.4" stroke="rgb(185, 144, 127)" stroke-width="5.4" stroke-linecap="round"/><path d="M1109.4 695.4L1115.0 695.3" stroke="rgb(186, 144, 126)" stroke-width="5.4" stroke-linecap="round"/><path d="M1115.0 695.3L1120.6 693.7" stroke="rgb(186, 143, 125)" stroke-width="5.4" stroke-linecap="round"/><path d="M1120.6 693.7L1125.9 690.5" stroke="rgb(186, 142, 124)" stroke-width="5.4" stroke-linecap="round"/><path d="M1125.9 690.5L1130.8 685.8" stroke="rgb(186, 141, 123)" stroke-width="5.4" stroke-linecap="round"/><path d="M1130.8 685.8L1135.3 679.6" stroke="rgb(186, 140, 122)" stroke-width="5.4" stroke-linecap="round"/><path d="M1135.3 679.6L1139.3 672.2" stroke="rgb(187, 140, 121)" stroke-width="5.4" stroke-linecap="round"/><path d="M1139.3 672.2L1142.6 663.5" stroke="rgb(187, 139, 120)" stroke-width="5.4" stroke-linecap="round"/><path d="M1142.6 663.5L1145.2 653.8" stroke="rgb(187, 138, 119)" stroke-width="5.4" stroke-linecap="round"/><path d="M1145.2 653.8L1147.0 643.3" stroke="rgb(187, 137, 118)" stroke-width="5.4" stroke-linecap="round"/><path d="M1147.0 643.3L1148.0 632.2" stroke="rgb(187, 136, 117)" stroke-width="5.4" stroke-linecap="round"/><path d="M1148.0 632.2L1148.2 620.7" stroke="rgb(188, 136, 116)" stroke-width="5.4" stroke-linecap="round"/><path d="M1148.2 620.7L1147.4 609.0" stroke="rgb(187, 134, 115)" stroke-width="5.4" stroke-linecap="round"/><path d="M1147.4 609.0L1145.9 597.4" stroke="rgb(187, 133, 115)" stroke-width="5.4" stroke-linecap="round"/><path d="M1145.9 597.4L1143.5 586.2" stroke="rgb(187, 132, 115)" stroke-width="5.4" stroke-linecap="round"/><path d="M1143.5 586.2L1140.3 575.5" stroke="rgb(187, 131, 115)" stroke-width="5.4" stroke-linecap="round"/><path d="M1140.3 575.5L1136.4 565.6" stroke="rgb(187, 130, 115)" stroke-width="5.4" stroke-linecap="round"/><path d="M1136.4 565.6L1131.9 556.7" stroke="rgb(187, 129, 114)" stroke-width="5.4" stroke-linecap="round"/><path d="M1131.9 556.7L1126.8 549.1" stroke="rgb(187, 127, 114)" stroke-width="5.4" stroke-linecap="round"/><path d="M1126.8 549.1L1121.2 542.8" stroke="rgb(187, 126, 114)" stroke-width="5.4" stroke-linecap="round"/><path d="M1121.2 542.8L1115.3 538.0" stroke="rgb(187, 125, 114)" stroke-width="5.4" stroke-linecap="round"/><path d="M1115.3 538.0L1109.2 535.0" stroke="rgb(187, 124, 114)" stroke-width="5.4" stroke-linecap="round"/><path d="M1109.2 535.0L1103.0 533.6" stroke="rgb(186, 123, 113)" stroke-width="5.4" stroke-linecap="round"/><path d="M1103.0 533.6L1096.8 534.0" stroke="rgb(186, 122, 113)" stroke-width="5.4" stroke-linecap="round"/><path d="M1096.8 534.0L1090.8 536.3" stroke="rgb(186, 121, 113)" stroke-width="5.4" stroke-linecap="round"/><path d="M1090.8 536.3L1085.1 540.3" stroke="rgb(186, 119, 113)" stroke-width="5.4" stroke-linecap="round"/><path d="M1085.1 540.3L1079.8 545.9" stroke="rgb(186, 118, 113)" stroke-width="5.4" stroke-linecap="round"/><path d="M1079.8 545.9L1075.0 553.2" stroke="rgb(186, 117, 112)" stroke-width="5.4" stroke-linecap="round"/><path d="M1075.0 553.2L1070.9 562.0" stroke="rgb(186, 116, 112)" stroke-width="5.4" stroke-linecap="round"/><path d="M1070.9 562.0L1067.5 572.0" stroke="rgb(186, 115, 112)" stroke-width="5.4" stroke-linecap="round"/><path d="M1067.5 572.0L1064.9 583.2" stroke="rgb(186, 114, 112)" stroke-width="5.4" stroke-linecap="round"/><path d="M1064.9 583.2L1063.2 595.2" stroke="rgb(186, 113, 112)" stroke-width="5.4" stroke-linecap="round"/><path d="M1063.2 595.2L1062.4 607.9" stroke="rgb(185, 111, 111)" stroke-width="5.4" stroke-linecap="round"/><path d="M1062.4 607.9L1062.6 620.9" stroke="rgb(185, 110, 111)" stroke-width="5.4" stroke-linecap="round"/><path d="M1062.6 620.9L1063.7 634.1" stroke="rgb(185, 109, 111)" stroke-width="5.4" stroke-linecap="round"/><path d="M1063.7 634.1L1065.7 647.0" stroke="rgb(185, 108, 111)" stroke-width="5.4" stroke-linecap="round"/><path d="M1065.7 647.0L1068.7 659.6" stroke="rgb(185, 107, 111)" stroke-width="5.4" stroke-linecap="round"/><path d="M1068.7 659.6L1072.5 671.4" stroke="rgb(185, 106, 110)" stroke-width="5.4" stroke-linecap="round"/><path d="M1072.5 671.4L1077.1 682.3" stroke="rgb(185, 104, 110)" stroke-width="5.4" stroke-linecap="round"/><path d="M1077.1 682.3L1082.3 692.0" stroke="rgb(185, 103, 110)" stroke-width="5.4" stroke-linecap="round"/><path d="M1082.3 692.0L1088.2 700.3" stroke="rgb(185, 102, 110)" stroke-width="5.4" stroke-linecap="round"/><path d="M1088.2 700.3L1094.5 707.0" stroke="rgb(185, 101, 110)" stroke-width="5.4" stroke-linecap="round"/><path d="M1094.5 707.0L1101.2 711.9" stroke="rgb(184, 100, 109)" stroke-width="5.4" stroke-linecap="round"/><path d="M1101.2 711.9L1108.1 715.0" stroke="rgb(184, 99, 109)" stroke-width="5.4" stroke-linecap="round"/><path d="M1108.1 715.0L1115.0 716.1" stroke="rgb(184, 98, 109)" stroke-width="5.4" stroke-linecap="round"/><path d="M1115.0 716.1L1121.9 715.2" stroke="rgb(184, 96, 109)" stroke-width="5.4" stroke-linecap="round"/><path d="M1121.9 715.2L1128.5 712.3" stroke="rgb(184, 95, 109)" stroke-width="5.4" stroke-linecap="round"/><path d="M1128.5 712.3L1134.8 707.4" stroke="rgb(184, 94, 108)" stroke-width="5.4" stroke-linecap="round"/><path d="M1134.8 707.4L1140.6 700.7" stroke="rgb(184, 93, 108)" stroke-width="5.4" stroke-linecap="round"/><path d="M1140.6 700.7L1145.8 692.2" stroke="rgb(184, 92, 108)" stroke-width="5.4" stroke-linecap="round"/><path d="M1145.8 692.2L1150.3 682.1" stroke="rgb(184, 91, 108)" stroke-width="5.4" stroke-linecap="round"/><path d="M1150.3 682.1L1153.9 670.6" stroke="rgb(184, 90, 108)" stroke-width="5.4" stroke-linecap="round"/><path d="M1153.9 670.6L1156.6 657.9" stroke="rgb(183, 89, 107)" stroke-width="5.4" stroke-linecap="round"/><path d="M1156.6 657.9L1158.4 644.4" stroke="rgb(182, 88, 107)" stroke-width="5.4" stroke-linecap="round"/><path d="M1158.4 644.4L1159.1 630.1" stroke="rgb(181, 87, 107)" stroke-width="5.4" stroke-linecap="round"/><path d="M1159.1 630.1L1158.8 615.6" stroke="rgb(181, 86, 107)" stroke-width="5.4" stroke-linecap="round"/><path d="M1158.8 615.6L1157.4 600.9" stroke="rgb(180, 85, 107)" stroke-width="5.4" stroke-linecap="round"/><path d="M1157.4 600.9L1155.1 586.6" stroke="rgb(179, 84, 107)" stroke-width="5.4" stroke-linecap="round"/><path d="M1155.1 586.6L1151.8 572.7" stroke="rgb(179, 84, 107)" stroke-width="5.4" stroke-linecap="round"/><path d="M1151.8 572.7L1147.5 559.8" stroke="rgb(178, 83, 107)" stroke-width="5.4" stroke-linecap="round"/><path d="M1147.5 559.8L1142.5 547.9" stroke="rgb(177, 82, 107)" stroke-width="5.4" stroke-linecap="round"/><path d="M1142.5 547.9L1136.7 537.4" stroke="rgb(177, 81, 107)" stroke-width="5.4" stroke-linecap="round"/><path d="M1136.7 537.4L1130.3 528.6" stroke="rgb(176, 80, 106)" stroke-width="5.4" stroke-linecap="round"/><path d="M1130.3 528.6L1123.4 521.6" stroke="rgb(175, 79, 106)" stroke-width="5.4" stroke-linecap="round"/><path d="M1123.4 521.6L1116.2 516.5" stroke="rgb(174, 78, 106)" stroke-width="5.4" stroke-linecap="round"/><path d="M1116.2 516.5L1108.8 513.5" stroke="rgb(174, 78, 106)" stroke-width="5.4" stroke-linecap="round"/><path d="M1108.8 513.5L1101.3 512.7" stroke="rgb(173, 77, 106)" stroke-width="5.4" stroke-linecap="round"/><path d="M1101.3 512.7L1094.0 514.2" stroke="rgb(172, 76, 106)" stroke-width="5.4" stroke-linecap="round"/><path d="M1094.0 514.2L1086.9 517.8" stroke="rgb(172, 75, 106)" stroke-width="5.4" stroke-linecap="round"/><path d="M1086.9 517.8L1080.3 523.6" stroke="rgb(171, 74, 106)" stroke-width="5.4" stroke-linecap="round"/><path d="M1080.3 523.6L1074.3 531.5" stroke="rgb(170, 73, 106)" stroke-width="5.4" stroke-linecap="round"/><path d="M1074.3 531.5L1068.9 541.2" stroke="rgb(170, 73, 106)" stroke-width="5.4" stroke-linecap="round"/><path d="M1068.9 541.2L1064.4 552.6" stroke="rgb(169, 72, 105)" stroke-width="5.4" stroke-linecap="round"/><path d="M1064.4 552.6L1060.8 565.6" stroke="rgb(168, 71, 105)" stroke-width="5.4" stroke-linecap="round"/><path d="M1060.8 565.6L1058.2 579.8" stroke="rgb(167, 70, 105)" stroke-width="5.4" stroke-linecap="round"/><path d="M1058.2 579.8L1056.6 594.9" stroke="rgb(167, 69, 105)" stroke-width="5.4" stroke-linecap="round"/><path d="M1056.6 594.9L1056.2 610.7" stroke="rgb(166, 68, 105)" stroke-width="5.4" stroke-linecap="round"/><path d="M1056.2 610.7L1056.9 626.8" stroke="rgb(165, 67, 105)" stroke-width="5.4" stroke-linecap="round"/><path d="M1056.9 626.8L1058.6 642.8" stroke="rgb(165, 67, 105)" stroke-width="5.4" stroke-linecap="round"/><path d="M1058.6 642.8L1061.5 658.6" stroke="rgb(164, 66, 105)" stroke-width="5.4" stroke-linecap="round"/><path d="M1061.5 658.6L1065.5 673.6" stroke="rgb(163, 65, 105)" stroke-width="5.4" stroke-linecap="round"/><path d="M1065.5 673.6L1070.3 687.6" stroke="rgb(163, 64, 105)" stroke-width="5.4" stroke-linecap="round"/><path d="M1070.3 687.6L1076.1 700.4" stroke="rgb(162, 63, 104)" stroke-width="5.4" stroke-linecap="round"/><path d="M1076.1 700.4L1082.6 711.5" stroke="rgb(161, 62, 104)" stroke-width="5.4" stroke-linecap="round"/><path d="M1082.6 711.5L1089.7 720.9" stroke="rgb(160, 61, 104)" stroke-width="5.4" stroke-linecap="round"/><path d="M1089.7 720.9L1097.3 728.2" stroke="rgb(160, 61, 104)" stroke-width="5.4" stroke-linecap="round"/><path d="M1097.3 728.2L1105.3 733.3" stroke="rgb(159, 60, 104)" stroke-width="5.4" stroke-linecap="round"/><path d="M1105.3 733.3L1113.4 736.1" stroke="rgb(158, 59, 104)" stroke-width="5.4" stroke-linecap="round"/><path d="M1113.4 736.1L1121.5 736.5" stroke="rgb(158, 58, 104)" stroke-width="5.4" stroke-linecap="round"/><path d="M1121.5 736.5L1129.4 734.4" stroke="rgb(157, 57, 104)" stroke-width="5.4" stroke-linecap="round"/><path d="M1129.4 734.4L1137.0 729.9" stroke="rgb(156, 56, 104)" stroke-width="5.4" stroke-linecap="round"/><path d="M1137.0 729.9L1144.1 723.1" stroke="rgb(156, 56, 104)" stroke-width="5.4" stroke-linecap="round"/><path d="M1144.1 723.1L1150.6 714.1" stroke="rgb(154, 55, 103)" stroke-width="5.4" stroke-linecap="round"/><path d="M1150.6 714.1L1156.2 703.1" stroke="rgb(153, 54, 102)" stroke-width="5.4" stroke-linecap="round"/><path d="M1156.2 703.1L1161.0 690.2" stroke="rgb(152, 54, 102)" stroke-width="5.4" stroke-linecap="round"/><path d="M1161.0 690.2L1164.8 675.7" stroke="rgb(151, 54, 102)" stroke-width="5.4" stroke-linecap="round"/><path d="M1164.8 675.7L1167.4 660.0" stroke="rgb(150, 53, 101)" stroke-width="5.4" stroke-linecap="round"/><path d="M1167.4 660.0L1168.9 643.3" stroke="rgb(149, 52, 101)" stroke-width="5.4" stroke-linecap="round"/><path d="M1168.9 643.3L1169.3 626.0" stroke="rgb(148, 52, 100)" stroke-width="5.4" stroke-linecap="round"/><path d="M1169.3 626.0L1168.4 608.4" stroke="rgb(147, 52, 100)" stroke-width="5.4" stroke-linecap="round"/><path d="M1168.4 608.4L1166.3 590.8" stroke="rgb(146, 51, 99)" stroke-width="5.4" stroke-linecap="round"/><path d="M1166.3 590.8L1163.1 573.8" stroke="rgb(145, 51, 99)" stroke-width="5.4" stroke-linecap="round"/><path d="M1163.1 573.8L1158.7 557.6" stroke="rgb(143, 50, 98)" stroke-width="5.4" stroke-linecap="round"/><path d="M1158.7 557.6L1153.4 542.5" stroke="rgb(142, 50, 98)" stroke-width="5.4" stroke-linecap="round"/><path d="M1153.4 542.5L1147.1 528.9" stroke="rgb(141, 49, 97)" stroke-width="5.4" stroke-linecap="round"/><path d="M1147.1 528.9L1140.1 517.1" stroke="rgb(140, 49, 97)" stroke-width="5.4" stroke-linecap="round"/><path d="M1140.1 517.1L1132.5 507.3" stroke="rgb(139, 48, 96)" stroke-width="5.4" stroke-linecap="round"/><path d="M1132.5 507.3L1124.4 499.8" stroke="rgb(138, 48, 96)" stroke-width="5.4" stroke-linecap="round"/><path d="M1124.4 499.8L1115.9 494.7" stroke="rgb(137, 47, 95)" stroke-width="5.4" stroke-linecap="round"/><path d="M1115.9 494.7L1107.4 492.2" stroke="rgb(136, 47, 95)" stroke-width="5.4" stroke-linecap="round"/><path d="M1107.4 492.2L1098.8 492.3" stroke="rgb(135, 46, 94)" stroke-width="5.4" stroke-linecap="round"/><path d="M1098.8 492.3L1090.5 495.0" stroke="rgb(134, 46, 94)" stroke-width="5.4" stroke-linecap="round"/><path d="M1090.5 495.0L1082.6 500.4" stroke="rgb(132, 45, 93)" stroke-width="5.4" stroke-linecap="round"/><path d="M1082.6 500.4L1075.3 508.2" stroke="rgb(131, 45, 93)" stroke-width="5.4" stroke-linecap="round"/><path d="M1075.3 508.2L1068.7 518.4" stroke="rgb(130, 44, 92)" stroke-width="5.4" stroke-linecap="round"/><path d="M1068.7 518.4L1062.9 530.8" stroke="rgb(129, 43, 91)" stroke-width="5.4" stroke-linecap="round"/><path d="M1062.9 530.8L1058.2 545.2" stroke="rgb(128, 43, 91)" stroke-width="5.4" stroke-linecap="round"/><path d="M1058.2 545.2L1054.5 561.2" stroke="rgb(127, 42, 91)" stroke-width="5.4" stroke-linecap="round"/><path d="M1054.5 561.2L1052.1 578.5" stroke="rgb(126, 42, 90)" stroke-width="5.4" stroke-linecap="round"/><path d="M1052.1 578.5L1050.8 596.7" stroke="rgb(125, 42, 90)" stroke-width="5.4" stroke-linecap="round"/><path d="M1050.8 596.7L1050.9 615.6" stroke="rgb(124, 41, 89)" stroke-width="5.4" stroke-linecap="round"/><path d="M1050.9 615.6L1052.2 634.7" stroke="rgb(123, 41, 89)" stroke-width="5.4" stroke-linecap="round"/><path d="M1052.2 634.7L1054.8 653.6" stroke="rgb(121, 40, 88)" stroke-width="5.4" stroke-linecap="round"/><path d="M1054.8 653.6L1058.6 672.0" stroke="rgb(120, 39, 87)" stroke-width="5.4" stroke-linecap="round"/><path d="M1058.6 672.0L1063.5 689.3" stroke="rgb(119, 39, 87)" stroke-width="5.4" stroke-linecap="round"/><path d="M1063.5 689.3L1069.5 705.4" stroke="rgb(118, 39, 87)" stroke-width="5.4" stroke-linecap="round"/><path d="M1069.5 705.4L1076.5 719.7" stroke="rgb(117, 38, 86)" stroke-width="5.4" stroke-linecap="round"/><path d="M1076.5 719.7L1084.2 732.1" stroke="rgb(116, 37, 86)" stroke-width="5.4" stroke-linecap="round"/><path d="M1084.2 732.1L1092.5 742.2" stroke="rgb(115, 37, 85)" stroke-width="5.4" stroke-linecap="round"/><path d="M1092.5 742.2L1101.3 749.9" stroke="rgb(114, 37, 85)" stroke-width="5.4" stroke-linecap="round"/><path d="M1101.3 749.9L1110.4 754.8" stroke="rgb(113, 36, 84)" stroke-width="5.4" stroke-linecap="round"/><path d="M1110.4 754.8L1119.6 757.0" stroke="rgb(112, 36, 84)" stroke-width="5.4" stroke-linecap="round"/><path d="M1119.6 757.0L1128.7 756.4" stroke="rgb(111, 35, 83)" stroke-width="5.4" stroke-linecap="round"/><path d="M1128.7 756.4L1137.6 752.9" stroke="rgb(110, 35, 83)" stroke-width="5.4" stroke-linecap="round"/><path d="M1137.6 752.9L1145.9 746.5" stroke="rgb(109, 35, 82)" stroke-width="5.4" stroke-linecap="round"/><path d="M1145.9 746.5L1153.6 737.5" stroke="rgb(109, 35, 82)" stroke-width="5.4" stroke-linecap="round"/><path d="M1153.6 737.5L1160.6 726.0" stroke="rgb(108, 34, 81)" stroke-width="5.4" stroke-linecap="round"/><path d="M1160.6 726.0L1166.5 712.2" stroke="rgb(107, 34, 81)" stroke-width="5.4" stroke-linecap="round"/><path d="M1166.5 712.2L1171.4 696.4" stroke="rgb(107, 34, 80)" stroke-width="5.4" stroke-linecap="round"/><path d="M1171.4 696.4L1175.1 678.8" stroke="rgb(106, 34, 80)" stroke-width="5.4" stroke-linecap="round"/><path d="M1175.1 678.8L1177.5 659.9" stroke="rgb(105, 33, 79)" stroke-width="5.4" stroke-linecap="round"/><path d="M1177.5 659.9L1178.7 640.1" stroke="rgb(105, 33, 79)" stroke-width="5.4" stroke-linecap="round"/><path d="M1178.7 640.1L1178.4 619.6" stroke="rgb(104, 33, 79)" stroke-width="5.4" stroke-linecap="round"/><path d="M1178.4 619.6L1176.8 599.0" stroke="rgb(103, 33, 78)" stroke-width="5.4" stroke-linecap="round"/><path d="M1176.8 599.0L1173.9 578.7" stroke="rgb(102, 32, 78)" stroke-width="5.4" stroke-linecap="round"/><path d="M1173.9 578.7L1169.7 559.2" stroke="rgb(102, 32, 77)" stroke-width="5.4" stroke-linecap="round"/><path d="M1169.7 559.2L1164.4 540.7" stroke="rgb(101, 32, 77)" stroke-width="5.4" stroke-linecap="round"/><path d="M1164.4 540.7L1157.9 523.7" stroke="rgb(100, 31, 76)" stroke-width="5.4" stroke-linecap="round"/><path d="M1157.9 523.7L1150.5 508.6" stroke="rgb(100, 31, 76)" stroke-width="5.4" stroke-linecap="round"/><path d="M1150.5 508.6L1142.3 495.8" stroke="rgb(99, 31, 75)" stroke-width="5.4" stroke-linecap="round"/><path d="M1142.3 495.8L1133.5 485.3" stroke="rgb(98, 31, 75)" stroke-width="5.4" stroke-linecap="round"/><path d="M1133.5 485.3L1124.2 477.7" stroke="rgb(98, 31, 75)" stroke-width="5.4" stroke-linecap="round"/><path d="M1124.2 477.7L1114.7 472.9" stroke="rgb(97, 30, 74)" stroke-width="5.4" stroke-linecap="round"/><path d="M1114.7 472.9L1105.1 471.1" stroke="rgb(96, 30, 74)" stroke-width="5.4" stroke-linecap="round"/><path d="M1105.1 471.1L1095.7 472.4" stroke="rgb(95, 30, 73)" stroke-width="5.4" stroke-linecap="round"/><path d="M1095.7 472.4L1086.6 476.7" stroke="rgb(95, 30, 73)" stroke-width="5.4" stroke-linecap="round"/><path d="M1086.6 476.7L1078.0 484.0" stroke="rgb(94, 29, 72)" stroke-width="5.4" stroke-linecap="round"/><path d="M1078.0 484.0L1070.1 494.2" stroke="rgb(93, 29, 72)" stroke-width="5.4" stroke-linecap="round"/><path d="M1070.1 494.2L1063.1 507.0" stroke="rgb(93, 29, 71)" stroke-width="5.4" stroke-linecap="round"/><path d="M1063.1 507.0L1057.2 522.3" stroke="rgb(92, 29, 71)" stroke-width="5.4" stroke-linecap="round"/><path d="M1057.2 522.3L1052.4 539.7" stroke="rgb(91, 28, 70)" stroke-width="5.4" stroke-linecap="round"/><path d="M1052.4 539.7L1048.9 558.8" stroke="rgb(91, 28, 70)" stroke-width="5.4" stroke-linecap="round"/><path d="M1048.9 558.8L1046.7 579.3" stroke="rgb(90, 28, 70)" stroke-width="5.4" stroke-linecap="round"/><path d="M1046.7 579.3L1046.0 600.7" stroke="rgb(89, 28, 69)" stroke-width="5.4" stroke-linecap="round"/><path d="M1046.0 600.7L1046.6 622.7" stroke="rgb(88, 27, 69)" stroke-width="5.4" stroke-linecap="round"/><path d="M1046.6 622.7L1048.7 644.8" stroke="rgb(88, 27, 68)" stroke-width="5.4" stroke-linecap="round"/><path d="M1048.7 644.8L1052.2 666.4" stroke="rgb(87, 27, 68)" stroke-width="5.4" stroke-linecap="round"/><path d="M1052.2 666.4L1056.9 687.2" stroke="rgb(86, 27, 67)" stroke-width="5.4" stroke-linecap="round"/><path d="M1056.9 687.2L1062.9 706.7" stroke="rgb(86, 26, 67)" stroke-width="5.4" stroke-linecap="round"/><path d="M1062.9 706.7L1070.0 724.5" stroke="rgb(85, 26, 66)" stroke-width="5.4" stroke-linecap="round"/><path d="M1070.0 724.5L1078.1 740.2" stroke="rgb(84, 26, 66)" stroke-width="5.4" stroke-linecap="round"/><path d="M1078.1 740.2L1087.0 753.6" stroke="rgb(84, 26, 66)" stroke-width="5.4" stroke-linecap="round"/><path d="M1215.0 569.0L1212.0 565.8" stroke="rgb(176, 175, 177)" stroke-width="5.4" stroke-linecap="round"/><path d="M1212.0 565.8L1208.8 563.4" stroke="rgb(176, 175, 177)" stroke-width="5.4" stroke-linecap="round"/><path d="M1208.8 563.4L1205.4 561.9" stroke="rgb(176, 175, 176)" stroke-width="5.4" stroke-linecap="round"/><path d="M1205.4 561.9L1201.9 561.2" stroke="rgb(176, 175, 176)" stroke-width="5.4" stroke-linecap="round"/><path d="M1201.9 561.2L1198.5 561.5" stroke="rgb(176, 175, 175)" stroke-width="5.4" stroke-linecap="round"/><path d="M1198.5 561.5L1195.1 562.7" stroke="rgb(176, 174, 175)" stroke-width="5.4" stroke-linecap="round"/><path d="M1195.1 562.7L1191.9 564.8" stroke="rgb(176, 174, 174)" stroke-width="5.4" stroke-linecap="round"/><path d="M1191.9 564.8L1188.9 567.9" stroke="rgb(176, 174, 174)" stroke-width="5.4" stroke-linecap="round"/><path d="M1188.9 567.9L1186.2 571.8" stroke="rgb(176, 174, 173)" stroke-width="5.4" stroke-linecap="round"/><path d="M1186.2 571.8L1183.9 576.6" stroke="rgb(177, 174, 173)" stroke-width="5.4" stroke-linecap="round"/><path d="M1183.9 576.6L1181.9 582.0" stroke="rgb(177, 173, 172)" stroke-width="5.4" stroke-linecap="round"/><path d="M1181.9 582.0L1180.4 588.1" stroke="rgb(177, 173, 172)" stroke-width="5.4" stroke-linecap="round"/><path d="M1180.4 588.1L1179.5 594.7" stroke="rgb(177, 173, 171)" stroke-width="5.4" stroke-linecap="round"/><path d="M1179.5 594.7L1179.0 601.6" stroke="rgb(177, 173, 171)" stroke-width="5.4" stroke-linecap="round"/><path d="M1179.0 601.6L1179.1 608.7" stroke="rgb(177, 173, 170)" stroke-width="5.4" stroke-linecap="round"/><path d="M1179.1 608.7L1179.8 616.0" stroke="rgb(177, 172, 170)" stroke-width="5.4" stroke-linecap="round"/><path d="M1179.8 616.0L1181.0 623.1" stroke="rgb(177, 172, 169)" stroke-width="5.4" stroke-linecap="round"/><path d="M1181.0 623.1L1182.8 630.0" stroke="rgb(177, 172, 169)" stroke-width="5.4" stroke-linecap="round"/><path d="M1182.8 630.0L1185.1 636.6" stroke="rgb(177, 172, 168)" stroke-width="5.4" stroke-linecap="round"/><path d="M1185.1 636.6L1187.9 642.6" stroke="rgb(178, 172, 168)" stroke-width="5.4" stroke-linecap="round"/><path d="M1187.9 642.6L1191.1 648.0" stroke="rgb(178, 171, 167)" stroke-width="5.4" stroke-linecap="round"/><path d="M1191.1 648.0L1194.6 652.6" stroke="rgb(178, 171, 167)" stroke-width="5.4" stroke-linecap="round"/><path d="M1194.6 652.6L1198.5 656.2" stroke="rgb(178, 171, 166)" stroke-width="5.4" stroke-linecap="round"/><path d="M1198.5 656.2L1202.6 658.9" stroke="rgb(178, 171, 166)" stroke-width="5.4" stroke-linecap="round"/><path d="M1202.6 658.9L1206.8 660.5" stroke="rgb(178, 171, 165)" stroke-width="5.4" stroke-linecap="round"/><path d="M1206.8 660.5L1211.1 661.0" stroke="rgb(178, 170, 165)" stroke-width="5.4" stroke-linecap="round"/><path d="M1211.1 661.0L1215.3 660.4" stroke="rgb(178, 170, 164)" stroke-width="5.4" stroke-linecap="round"/><path d="M1215.3 660.4L1219.4 658.6" stroke="rgb(178, 170, 164)" stroke-width="5.4" stroke-linecap="round"/><path d="M1219.4 658.6L1223.4 655.6" stroke="rgb(178, 170, 163)" stroke-width="5.4" stroke-linecap="round"/><path d="M1223.4 655.6L1227.0 651.6" stroke="rgb(179, 170, 163)" stroke-width="5.4" stroke-linecap="round"/><path d="M1227.0 651.6L1230.2 646.5" stroke="rgb(179, 169, 162)" stroke-width="5.4" stroke-linecap="round"/><path d="M1230.2 646.5L1233.0 640.5" stroke="rgb(179, 169, 162)" stroke-width="5.4" stroke-linecap="round"/><path d="M1233.0 640.5L1235.3 633.7" stroke="rgb(179, 169, 161)" stroke-width="5.4" stroke-linecap="round"/><path d="M1235.3 633.7L1237.0 626.2" stroke="rgb(179, 169, 161)" stroke-width="5.4" stroke-linecap="round"/><path d="M1237.0 626.2L1238.1 618.1" stroke="rgb(179, 169, 160)" stroke-width="5.4" stroke-linecap="round"/><path d="M1238.1 618.1L1238.5 609.6" stroke="rgb(179, 168, 160)" stroke-width="5.4" stroke-linecap="round"/><path d="M1238.5 609.6L1238.3 601.0" stroke="rgb(179, 168, 159)" stroke-width="5.4" stroke-linecap="round"/><path d="M1238.3 601.0L1237.5 592.3" stroke="rgb(179, 168, 159)" stroke-width="5.4" stroke-linecap="round"/><path d="M1237.5 592.3L1235.9 583.7" stroke="rgb(179, 168, 158)" stroke-width="5.4" stroke-linecap="round"/><path d="M1235.9 583.7L1233.8 575.5" stroke="rgb(180, 168, 158)" stroke-width="5.4" stroke-linecap="round"/><path d="M1233.8 575.5L1231.0 567.8" stroke="rgb(180, 167, 156)" stroke-width="5.4" stroke-linecap="round"/><path d="M1231.0 567.8L1227.7 560.7" stroke="rgb(180, 166, 155)" stroke-width="5.4" stroke-linecap="round"/><path d="M1227.7 560.7L1224.0 554.5" stroke="rgb(180, 165, 154)" stroke-width="5.4" stroke-linecap="round"/><path d="M1224.0 554.5L1219.8 549.3" stroke="rgb(180, 164, 153)" stroke-width="5.4" stroke-linecap="round"/><path d="M1219.8 549.3L1215.3 545.2" stroke="rgb(181, 164, 152)" stroke-width="5.4" stroke-linecap="round"/><path d="M1215.3 545.2L1210.6 542.3" stroke="rgb(181, 163, 151)" stroke-width="5.4" stroke-linecap="round"/><path d="M1210.6 542.3L1205.7 540.7" stroke="rgb(181, 162, 150)" stroke-width="5.4" stroke-linecap="round"/><path d="M1205.7 540.7L1200.8 540.4" stroke="rgb(181, 161, 149)" stroke-width="5.4" stroke-linecap="round"/><path d="M1200.8 540.4L1196.0 541.5" stroke="rgb(181, 160, 148)" stroke-width="5.4" stroke-linecap="round"/><path d="M1196.0 541.5L1191.4 544.0" stroke="rgb(182, 160, 147)" stroke-width="5.4" stroke-linecap="round"/><path d="M1191.4 544.0L1187.0 547.8" stroke="rgb(182, 159, 146)" stroke-width="5.4" stroke-linecap="round"/><path d="M1187.0 547.8L1183.1 552.8" stroke="rgb(182, 158, 145)" stroke-width="5.4" stroke-linecap="round"/><path d="M1183.1 552.8L1179.5 559.1" stroke="rgb(182, 157, 144)" stroke-width="5.4" stroke-linecap="round"/><path d="M1179.5 559.1L1176.6 566.4" stroke="rgb(182, 156, 143)" stroke-width="5.4" stroke-linecap="round"/><path d="M1176.6 566.4L1174.2 574.6" stroke="rgb(183, 156, 142)" stroke-width="5.4" stroke-linecap="round"/><path d="M1174.2 574.6L1172.5 583.6" stroke="rgb(183, 155, 141)" stroke-width="5.4" stroke-linecap="round"/><path d="M1172.5 583.6L1171.5 593.2" stroke="rgb(183, 154, 140)" stroke-width="5.4" stroke-linecap="round"/><path d="M1171.5 593.2L1171.3 603.2" stroke="rgb(183, 153, 139)" stroke-width="5.4" stroke-linecap="round"/><path d="M1171.3 603.2L1171.9 613.3" stroke="rgb(183, 152, 138)" stroke-width="5.4" stroke-linecap="round"/><path d="M1171.9 613.3L1173.2 623.5" stroke="rgb(184, 152, 137)" stroke-width="5.4" stroke-linecap="round"/><path d="M1173.2 623.5L1175.2 633.4" stroke="rgb(184, 151, 135)" stroke-width="5.4" stroke-linecap="round"/><path d="M1175.2 633.4L1178.0 642.9" stroke="rgb(184, 150, 134)" stroke-width="5.4" stroke-linecap="round"/><path d="M1178.0 642.9L1181.4 651.7" stroke="rgb(184, 149, 133)" stroke-width="5.4" stroke-linecap="round"/><path d="M1181.4 651.7L1185.4 659.7" stroke="rgb(184, 148, 132)" stroke-width="5.4" stroke-linecap="round"/><path d="M1185.4 659.7L1189.9 666.6" stroke="rgb(185, 148, 131)" stroke-width="5.4" stroke-linecap="round"/><path d="M1189.9 666.6L1194.9 672.4" stroke="rgb(185, 147, 130)" stroke-width="5.4" stroke-linecap="round"/><path d="M1194.9 672.4L1200.2 676.8" stroke="rgb(185, 146, 129)" stroke-width="5.4" stroke-linecap="round"/><path d="M1200.2 676.8L1205.7 679.9" stroke="rgb(185, 145, 128)" stroke-width="5.4" stroke-linecap="round"/><path d="M1205.7 679.9L1211.4 681.4" stroke="rgb(185, 144, 127)" stroke-width="5.4" stroke-linecap="round"/><path d="M1211.4 681.4L1217.0 681.3" stroke="rgb(186, 144, 126)" stroke-width="5.4" stroke-linecap="round"/><path d="M1217.0 681.3L1222.6 679.7" stroke="rgb(186, 143, 125)" stroke-width="5.4" stroke-linecap="round"/><path d="M1222.6 679.7L1227.9 676.5" stroke="rgb(186, 142, 124)" stroke-width="5.4" stroke-linecap="round"/><path d="M1227.9 676.5L1232.8 671.8" stroke="rgb(186, 141, 123)" stroke-width="5.4" stroke-linecap="round"/><path d="M1232.8 671.8L1237.3 665.6" stroke="rgb(186, 140, 122)" stroke-width="5.4" stroke-linecap="round"/><path d="M1237.3 665.6L1241.3 658.2" stroke="rgb(187, 140, 121)" stroke-width="5.4" stroke-linecap="round"/><path d="M1241.3 658.2L1244.6 649.5" stroke="rgb(187, 139, 120)" stroke-width="5.4" stroke-linecap="round"/><path d="M1244.6 649.5L1247.2 639.8" stroke="rgb(187, 138, 119)" stroke-width="5.4" stroke-linecap="round"/><path d="M1247.2 639.8L1249.0 629.3" stroke="rgb(187, 137, 118)" stroke-width="5.4" stroke-linecap="round"/><path d="M1249.0 629.3L1250.0 618.2" stroke="rgb(187, 136, 117)" stroke-width="5.4" stroke-linecap="round"/><path d="M1250.0 618.2L1250.2 606.7" stroke="rgb(188, 136, 116)" stroke-width="5.4" stroke-linecap="round"/><path d="M1250.2 606.7L1249.4 595.0" stroke="rgb(187, 134, 115)" stroke-width="5.4" stroke-linecap="round"/><path d="M1249.4 595.0L1247.9 583.4" stroke="rgb(187, 133, 115)" stroke-width="5.4" stroke-linecap="round"/><path d="M1247.9 583.4L1245.5 572.2" stroke="rgb(187, 132, 115)" stroke-width="5.4" stroke-linecap="round"/><path d="M1245.5 572.2L1242.3 561.5" stroke="rgb(187, 131, 115)" stroke-width="5.4" stroke-linecap="round"/><path d="M1242.3 561.5L1238.4 551.6" stroke="rgb(187, 130, 115)" stroke-width="5.4" stroke-linecap="round"/><path d="M1238.4 551.6L1233.9 542.7" stroke="rgb(187, 129, 114)" stroke-width="5.4" stroke-linecap="round"/><path d="M1233.9 542.7L1228.8 535.1" stroke="rgb(187, 127, 114)" stroke-width="5.4" stroke-linecap="round"/><path d="M1228.8 535.1L1223.2 528.8" stroke="rgb(187, 126, 114)" stroke-width="5.4" stroke-linecap="round"/><path d="M1223.2 528.8L1217.3 524.0" stroke="rgb(187, 125, 114)" stroke-width="5.4" stroke-linecap="round"/><path d="M1217.3 524.0L1211.2 521.0" stroke="rgb(187, 124, 114)" stroke-width="5.4" stroke-linecap="round"/><path d="M1211.2 521.0L1205.0 519.6" stroke="rgb(186, 123, 113)" stroke-width="5.4" stroke-linecap="round"/><path d="M1205.0 519.6L1198.8 520.0" stroke="rgb(186, 122, 113)" stroke-width="5.4" stroke-linecap="round"/><path d="M1198.8 520.0L1192.8 522.3" stroke="rgb(186, 121, 113)" stroke-width="5.4" stroke-linecap="round"/><path d="M1192.8 522.3L1187.1 526.3" stroke="rgb(186, 119, 113)" stroke-width="5.4" stroke-linecap="round"/><path d="M1187.1 526.3L1181.8 531.9" stroke="rgb(186, 118, 113)" stroke-width="5.4" stroke-linecap="round"/><path d="M1181.8 531.9L1177.0 539.2" stroke="rgb(186, 117, 112)" stroke-width="5.4" stroke-linecap="round"/><path d="M1177.0 539.2L1172.9 548.0" stroke="rgb(186, 116, 112)" stroke-width="5.4" stroke-linecap="round"/><path d="M1172.9 548.0L1169.5 558.0" stroke="rgb(186, 115, 112)" stroke-width="5.4" stroke-linecap="round"/><path d="M1169.5 558.0L1166.9 569.2" stroke="rgb(186, 114, 112)" stroke-width="5.4" stroke-linecap="round"/><path d="M1166.9 569.2L1165.2 581.2" stroke="rgb(186, 113, 112)" stroke-width="5.4" stroke-linecap="round"/><path d="M1165.2 581.2L1164.4 593.9" stroke="rgb(185, 111, 111)" stroke-width="5.4" stroke-linecap="round"/><path d="M1164.4 593.9L1164.6 606.9" stroke="rgb(185, 110, 111)" stroke-width="5.4" stroke-linecap="round"/><path d="M1164.6 606.9L1165.7 620.1" stroke="rgb(185, 109, 111)" stroke-width="5.4" stroke-linecap="round"/><path d="M1165.7 620.1L1167.7 633.0" stroke="rgb(185, 108, 111)" stroke-width="5.4" stroke-linecap="round"/><path d="M1167.7 633.0L1170.7 645.6" stroke="rgb(185, 107, 111)" stroke-width="5.4" stroke-linecap="round"/><path d="M1170.7 645.6L1174.5 657.4" stroke="rgb(185, 106, 110)" stroke-width="5.4" stroke-linecap="round"/><path d="M1174.5 657.4L1179.1 668.3" stroke="rgb(185, 104, 110)" stroke-width="5.4" stroke-linecap="round"/><path d="M1179.1 668.3L1184.3 678.0" stroke="rgb(185, 103, 110)" stroke-width="5.4" stroke-linecap="round"/><path d="M1184.3 678.0L1190.2 686.3" stroke="rgb(185, 102, 110)" stroke-width="5.4" stroke-linecap="round"/><path d="M1190.2 686.3L1196.5 693.0" stroke="rgb(185, 101, 110)" stroke-width="5.4" stroke-linecap="round"/><path d="M1196.5 693.0L1203.2 697.9" stroke="rgb(184, 100, 109)" stroke-width="5.4" stroke-linecap="round"/><path d="M1203.2 697.9L1210.1 701.0" stroke="rgb(184, 99, 109)" stroke-width="5.4" stroke-linecap="round"/><path d="M1210.1 701.0L1217.0 702.1" stroke="rgb(184, 98, 109)" stroke-width="5.4" stroke-linecap="round"/><path d="M1217.0 702.1L1223.9 701.2" stroke="rgb(184, 96, 109)" stroke-width="5.4" stroke-linecap="round"/><path d="M1223.9 701.2L1230.5 698.3" stroke="rgb(184, 95, 109)" stroke-width="5.4" stroke-linecap="round"/><path d="M1230.5 698.3L1236.8 693.4" stroke="rgb(184, 94, 108)" stroke-width="5.4" stroke-linecap="round"/><path d="M1236.8 693.4L1242.6 686.7" stroke="rgb(184, 93, 108)" stroke-width="5.4" stroke-linecap="round"/><path d="M1242.6 686.7L1247.8 678.2" stroke="rgb(184, 92, 108)" stroke-width="5.4" stroke-linecap="round"/><path d="M1247.8 678.2L1252.3 668.1" stroke="rgb(184, 91, 108)" stroke-width="5.4" stroke-linecap="round"/><path d="M1252.3 668.1L1255.9 656.6" stroke="rgb(184, 90, 108)" stroke-width="5.4" stroke-linecap="round"/><path d="M1255.9 656.6L1258.6 643.9" stroke="rgb(183, 89, 107)" stroke-width="5.4" stroke-linecap="round"/><path d="M1258.6 643.9L1260.4 630.4" stroke="rgb(182, 88, 107)" stroke-width="5.4" stroke-linecap="round"/><path d="M1260.4 630.4L1261.1 616.1" stroke="rgb(181, 87, 107)" stroke-width="5.4" stroke-linecap="round"/><path d="M1261.1 616.1L1260.8 601.6" stroke="rgb(181, 86, 107)" stroke-width="5.4" stroke-linecap="round"/><path d="M1260.8 601.6L1259.4 586.9" stroke="rgb(180, 85, 107)" stroke-width="5.4" stroke-linecap="round"/><path d="M1259.4 586.9L1257.1 572.6" stroke="rgb(179, 84, 107)" stroke-width="5.4" stroke-linecap="round"/><path d="M1257.1 572.6L1253.8 558.7" stroke="rgb(179, 84, 107)" stroke-width="5.4" stroke-linecap="round"/><path d="M1253.8 558.7L1249.5 545.8" stroke="rgb(178, 83, 107)" stroke-width="5.4" stroke-linecap="round"/><path d="M1249.5 545.8L1244.5 533.9" stroke="rgb(177, 82, 107)" stroke-width="5.4" stroke-linecap="round"/><path d="M1244.5 533.9L1238.7 523.4" stroke="rgb(177, 81, 107)" stroke-width="5.4" stroke-linecap="round"/><path d="M1238.7 523.4L1232.3 514.6" stroke="rgb(176, 80, 106)" stroke-width="5.4" stroke-linecap="round"/><path d="M1232.3 514.6L1225.4 507.6" stroke="rgb(175, 79, 106)" stroke-width="5.4" stroke-linecap="round"/><path d="M1225.4 507.6L1218.2 502.5" stroke="rgb(174, 78, 106)" stroke-width="5.4" stroke-linecap="round"/><path d="M1218.2 502.5L1210.8 499.5" stroke="rgb(174, 78, 106)" stroke-width="5.4" stroke-linecap="round"/><path d="M1210.8 499.5L1203.3 498.7" stroke="rgb(173, 77, 106)" stroke-width="5.4" stroke-linecap="round"/><path d="M1203.3 498.7L1196.0 500.2" stroke="rgb(172, 76, 106)" stroke-width="5.4" stroke-linecap="round"/><path d="M1196.0 500.2L1188.9 503.8" stroke="rgb(172, 75, 106)" stroke-width="5.4" stroke-linecap="round"/><path d="M1188.9 503.8L1182.3 509.6" stroke="rgb(171, 74, 106)" stroke-width="5.4" stroke-linecap="round"/><path d="M1182.3 509.6L1176.3 517.5" stroke="rgb(170, 73, 106)" stroke-width="5.4" stroke-linecap="round"/><path d="M1176.3 517.5L1170.9 527.2" stroke="rgb(170, 73, 106)" stroke-width="5.4" stroke-linecap="round"/><path d="M1170.9 527.2L1166.4 538.6" stroke="rgb(169, 72, 105)" stroke-width="5.4" stroke-linecap="round"/><path d="M1166.4 538.6L1162.8 551.6" stroke="rgb(168, 71, 105)" stroke-width="5.4" stroke-linecap="round"/><path d="M1162.8 551.6L1160.2 565.8" stroke="rgb(167, 70, 105)" stroke-width="5.4" stroke-linecap="round"/><path d="M1160.2 565.8L1158.6 580.9" stroke="rgb(167, 69, 105)" stroke-width="5.4" stroke-linecap="round"/><path d="M1158.6 580.9L1158.2 596.7" stroke="rgb(166, 68, 105)" stroke-width="5.4" stroke-linecap="round"/><path d="M1158.2 596.7L1158.9 612.8" stroke="rgb(165, 67, 105)" stroke-width="5.4" stroke-linecap="round"/><path d="M1158.9 612.8L1160.6 628.8" stroke="rgb(165, 67, 105)" stroke-width="5.4" stroke-linecap="round"/><path d="M1160.6 628.8L1163.5 644.6" stroke="rgb(164, 66, 105)" stroke-width="5.4" stroke-linecap="round"/><path d="M1163.5 644.6L1167.5 659.6" stroke="rgb(163, 65, 105)" stroke-width="5.4" stroke-linecap="round"/><path d="M1167.5 659.6L1172.3 673.6" stroke="rgb(163, 64, 105)" stroke-width="5.4" stroke-linecap="round"/><path d="M1172.3 673.6L1178.1 686.4" stroke="rgb(162, 63, 104)" stroke-width="5.4" stroke-linecap="round"/><path d="M1178.1 686.4L1184.6 697.5" stroke="rgb(161, 62, 104)" stroke-width="5.4" stroke-linecap="round"/><path d="M1184.6 697.5L1191.7 706.9" stroke="rgb(160, 61, 104)" stroke-width="5.4" stroke-linecap="round"/><path d="M1191.7 706.9L1199.3 714.2" stroke="rgb(160, 61, 104)" stroke-width="5.4" stroke-linecap="round"/><path d="M1199.3 714.2L1207.3 719.3" stroke="rgb(159, 60, 104)" stroke-width="5.4" stroke-linecap="round"/><path d="M1207.3 719.3L1215.4 722.1" stroke="rgb(158, 59, 104)" stroke-width="5.4" stroke-linecap="round"/><path d="M1215.4 722.1L1223.5 722.5" stroke="rgb(158, 58, 104)" stroke-width="5.4" stroke-linecap="round"/><path d="M1223.5 722.5L1231.4 720.4" stroke="rgb(157, 57, 104)" stroke-width="5.4" stroke-linecap="round"/><path d="M1231.4 720.4L1239.0 715.9" stroke="rgb(156, 56, 104)" stroke-width="5.4" stroke-linecap="round"/><path d="M1239.0 715.9L1246.1 709.1" stroke="rgb(156, 56, 104)" stroke-width="5.4" stroke-linecap="round"/><path d="M1246.1 709.1L1252.6 700.1" stroke="rgb(154, 55, 103)" stroke-width="5.4" stroke-linecap="round"/><path d="M1252.6 700.1L1258.2 689.1" stroke="rgb(153, 54, 102)" stroke-width="5.4" stroke-linecap="round"/><path d="M1258.2 689.1L1263.0 676.2" stroke="rgb(152, 54, 102)" stroke-width="5.4" stroke-linecap="round"/><path d="M1263.0 676.2L1266.8 661.7" stroke="rgb(151, 54, 102)" stroke-width="5.4" stroke-linecap="round"/><path d="M1266.8 661.7L1269.4 646.0" stroke="rgb(150, 53, 101)" stroke-width="5.4" stroke-linecap="round"/><path d="M1269.4 646.0L1270.9 629.3" stroke="rgb(149, 52, 101)" stroke-width="5.4" stroke-linecap="round"/><path d="M1270.9 629.3L1271.3 612.0" stroke="rgb(148, 52, 100)" stroke-width="5.4" stroke-linecap="round"/><path d="M1271.3 612.0L1270.4 594.4" stroke="rgb(147, 52, 100)" stroke-width="5.4" stroke-linecap="round"/><path d="M1270.4 594.4L1268.3 576.8" stroke="rgb(146, 51, 99)" stroke-width="5.4" stroke-linecap="round"/><path d="M1268.3 576.8L1265.1 559.8" stroke="rgb(145, 51, 99)" stroke-width="5.4" stroke-linecap="round"/><path d="M1265.1 559.8L1260.7 543.6" stroke="rgb(143, 50, 98)" stroke-width="5.4" stroke-linecap="round"/><path d="M1260.7 543.6L1255.4 528.5" stroke="rgb(142, 50, 98)" stroke-width="5.4" stroke-linecap="round"/><path d="M1255.4 528.5L1249.1 514.9" stroke="rgb(141, 49, 97)" stroke-width="5.4" stroke-linecap="round"/><path d="M1249.1 514.9L1242.1 503.1" stroke="rgb(140, 49, 97)" stroke-width="5.4" stroke-linecap="round"/><path d="M1242.1 503.1L1234.5 493.3" stroke="rgb(139, 48, 96)" stroke-width="5.4" stroke-linecap="round"/><path d="M1234.5 493.3L1226.4 485.8" stroke="rgb(138, 48, 96)" stroke-width="5.4" stroke-linecap="round"/><path d="M1226.4 485.8L1217.9 480.7" stroke="rgb(137, 47, 95)" stroke-width="5.4" stroke-linecap="round"/><path d="M1217.9 480.7L1209.4 478.2" stroke="rgb(136, 47, 95)" stroke-width="5.4" stroke-linecap="round"/><path d="M1209.4 478.2L1200.8 478.3" stroke="rgb(135, 46, 94)" stroke-width="5.4" stroke-linecap="round"/><path d="M1200.8 478.3L1192.5 481.0" stroke="rgb(134, 46, 94)" stroke-width="5.4" stroke-linecap="round"/><path d="M1192.5 481.0L1184.6 486.4" stroke="rgb(132, 45, 93)" stroke-width="5.4" stroke-linecap="round"/><path d="M1184.6 486.4L1177.3 494.2" stroke="rgb(131, 45, 93)" stroke-width="5.4" stroke-linecap="round"/><path d="M1177.3 494.2L1170.7 504.4" stroke="rgb(130, 44, 92)" stroke-width="5.4" stroke-linecap="round"/><path d="M1170.7 504.4L1164.9 516.8" stroke="rgb(129, 43, 91)" stroke-width="5.4" stroke-linecap="round"/><path d="M1164.9 516.8L1160.2 531.2" stroke="rgb(128, 43, 91)" stroke-width="5.4" stroke-linecap="round"/><path d="M1160.2 531.2L1156.5 547.2" stroke="rgb(127, 42, 91)" stroke-width="5.4" stroke-linecap="round"/><path d="M1156.5 547.2L1154.1 564.5" stroke="rgb(126, 42, 90)" stroke-width="5.4" stroke-linecap="round"/><path d="M1154.1 564.5L1152.8 582.7" stroke="rgb(125, 42, 90)" stroke-width="5.4" stroke-linecap="round"/><path d="M1152.8 582.7L1152.9 601.6" stroke="rgb(124, 41, 89)" stroke-width="5.4" stroke-linecap="round"/><path d="M1152.9 601.6L1154.2 620.7" stroke="rgb(123, 41, 89)" stroke-width="5.4" stroke-linecap="round"/><path d="M1154.2 620.7L1156.8 639.6" stroke="rgb(121, 40, 88)" stroke-width="5.4" stroke-linecap="round"/><path d="M1156.8 639.6L1160.6 658.0" stroke="rgb(120, 39, 87)" stroke-width="5.4" stroke-linecap="round"/><path d="M1160.6 658.0L1165.5 675.3" stroke="rgb(119, 39, 87)" stroke-width="5.4" stroke-linecap="round"/><path d="M1165.5 675.3L1171.5 691.4" stroke="rgb(118, 39, 87)" stroke-width="5.4" stroke-linecap="round"/><path d="M1171.5 691.4L1178.5 705.7" stroke="rgb(117, 38, 86)" stroke-width="5.4" stroke-linecap="round"/><path d="M1178.5 705.7L1186.2 718.1" stroke="rgb(116, 37, 86)" stroke-width="5.4" stroke-linecap="round"/><path d="M1186.2 718.1L1194.5 728.2" stroke="rgb(115, 37, 85)" stroke-width="5.4" stroke-linecap="round"/><path d="M1194.5 728.2L1203.3 735.9" stroke="rgb(114, 37, 85)" stroke-width="5.4" stroke-linecap="round"/><path d="M1203.3 735.9L1212.4 740.8" stroke="rgb(113, 36, 84)" stroke-width="5.4" stroke-linecap="round"/><path d="M1212.4 740.8L1221.6 743.0" stroke="rgb(112, 36, 84)" stroke-width="5.4" stroke-linecap="round"/><path d="M1221.6 743.0L1230.7 742.4" stroke="rgb(111, 35, 83)" stroke-width="5.4" stroke-linecap="round"/><path d="M1230.7 742.4L1239.6 738.9" stroke="rgb(110, 35, 83)" stroke-width="5.4" stroke-linecap="round"/><path d="M1239.6 738.9L1247.9 732.5" stroke="rgb(109, 35, 82)" stroke-width="5.4" stroke-linecap="round"/><path d="M1247.9 732.5L1255.6 723.5" stroke="rgb(109, 35, 82)" stroke-width="5.4" stroke-linecap="round"/><path d="M1255.6 723.5L1262.6 712.0" stroke="rgb(108, 34, 81)" stroke-width="5.4" stroke-linecap="round"/><path d="M1262.6 712.0L1268.5 698.2" stroke="rgb(107, 34, 81)" stroke-width="5.4" stroke-linecap="round"/><path d="M1268.5 698.2L1273.4 682.4" stroke="rgb(107, 34, 80)" stroke-width="5.4" stroke-linecap="round"/><path d="M1273.4 682.4L1277.1 664.8" stroke="rgb(106, 34, 80)" stroke-width="5.4" stroke-linecap="round"/><path d="M1277.1 664.8L1279.5 645.9" stroke="rgb(105, 33, 79)" stroke-width="5.4" stroke-linecap="round"/><path d="M1279.5 645.9L1280.7 626.1" stroke="rgb(105, 33, 79)" stroke-width="5.4" stroke-linecap="round"/><path d="M1280.7 626.1L1280.4 605.6" stroke="rgb(104, 33, 79)" stroke-width="5.4" stroke-linecap="round"/><path d="M1280.4 605.6L1278.8 585.0" stroke="rgb(103, 33, 78)" stroke-width="5.4" stroke-linecap="round"/><path d="M1278.8 585.0L1275.9 564.7" stroke="rgb(102, 32, 78)" stroke-width="5.4" stroke-linecap="round"/><path d="M1275.9 564.7L1271.7 545.2" stroke="rgb(102, 32, 77)" stroke-width="5.4" stroke-linecap="round"/><path d="M1271.7 545.2L1266.4 526.7" stroke="rgb(101, 32, 77)" stroke-width="5.4" stroke-linecap="round"/><path d="M1266.4 526.7L1259.9 509.7" stroke="rgb(100, 31, 76)" stroke-width="5.4" stroke-linecap="round"/><path d="M1259.9 509.7L1252.5 494.6" stroke="rgb(100, 31, 76)" stroke-width="5.4" stroke-linecap="round"/><path d="M1252.5 494.6L1244.3 481.8" stroke="rgb(99, 31, 75)" stroke-width="5.4" stroke-linecap="round"/><path d="M1244.3 481.8L1235.5 471.3" stroke="rgb(98, 31, 75)" stroke-width="5.4" stroke-linecap="round"/><path d="M1235.5 471.3L1226.2 463.7" stroke="rgb(98, 31, 75)" stroke-width="5.4" stroke-linecap="round"/><path d="M1226.2 463.7L1216.7 458.9" stroke="rgb(97, 30, 74)" stroke-width="5.4" stroke-linecap="round"/><path d="M1216.7 458.9L1207.1 457.1" stroke="rgb(96, 30, 74)" stroke-width="5.4" stroke-linecap="round"/><path d="M1207.1 457.1L1197.7 458.4" stroke="rgb(95, 30, 73)" stroke-width="5.4" stroke-linecap="round"/><path d="M1197.7 458.4L1188.6 462.7" stroke="rgb(95, 30, 73)" stroke-width="5.4" stroke-linecap="round"/><path d="M1188.6 462.7L1180.0 470.0" stroke="rgb(94, 29, 72)" stroke-width="5.4" stroke-linecap="round"/><path d="M1180.0 470.0L1172.1 480.2" stroke="rgb(93, 29, 72)" stroke-width="5.4" stroke-linecap="round"/><path d="M1172.1 480.2L1165.1 493.0" stroke="rgb(93, 29, 71)" stroke-width="5.4" stroke-linecap="round"/><path d="M1165.1 493.0L1159.2 508.3" stroke="rgb(92, 29, 71)" stroke-width="5.4" stroke-linecap="round"/><path d="M1159.2 508.3L1154.4 525.7" stroke="rgb(91, 28, 70)" stroke-width="5.4" stroke-linecap="round"/><path d="M1154.4 525.7L1150.9 544.8" stroke="rgb(91, 28, 70)" stroke-width="5.4" stroke-linecap="round"/><path d="M1150.9 544.8L1148.7 565.3" stroke="rgb(90, 28, 70)" stroke-width="5.4" stroke-linecap="round"/><path d="M1148.7 565.3L1148.0 586.7" stroke="rgb(89, 28, 69)" stroke-width="5.4" stroke-linecap="round"/><path d="M1148.0 586.7L1148.6 608.7" stroke="rgb(88, 27, 69)" stroke-width="5.4" stroke-linecap="round"/><path d="M1148.6 608.7L1150.7 630.8" stroke="rgb(88, 27, 68)" stroke-width="5.4" stroke-linecap="round"/><path d="M1150.7 630.8L1154.2 652.4" stroke="rgb(87, 27, 68)" stroke-width="5.4" stroke-linecap="round"/><path d="M1154.2 652.4L1158.9 673.2" stroke="rgb(86, 27, 67)" stroke-width="5.4" stroke-linecap="round"/><path d="M1158.9 673.2L1164.9 692.7" stroke="rgb(86, 26, 67)" stroke-width="5.4" stroke-linecap="round"/><path d="M1164.9 692.7L1172.0 710.5" stroke="rgb(85, 26, 66)" stroke-width="5.4" stroke-linecap="round"/><path d="M1172.0 710.5L1180.1 726.2" stroke="rgb(84, 26, 66)" stroke-width="5.4" stroke-linecap="round"/><path d="M1180.1 726.2L1189.0 739.6" stroke="rgb(84, 26, 66)" stroke-width="5.4" stroke-linecap="round"/><path d="M838.0 493.0L1745 350.3" stroke="#a09fc6" stroke-width="4.6"/><path d="M838.0 495.9L1745 353.2" stroke="#6c7ca4" stroke-width="1.6"/><path d="M838.0 497.1L1745 354.4" stroke="#a0a848" stroke-width="0.7" opacity="0.8"/><path d="M882.0 822.0L1745 655.4" stroke="#a09fc6" stroke-width="4.6"/><path d="M882.0 824.9L1745 658.3" stroke="#6c7ca4" stroke-width="1.6"/><path d="M882.0 826.1L1745 659.5" stroke="#a0a848" stroke-width="0.7" opacity="0.8"/><path d="M840.1 508.1L1745 360.9" stroke="#a09fc6" stroke-width="4.6"/><path d="M840.1 511.0L1745 363.8" stroke="#6c7ca4" stroke-width="1.6"/><path d="M840.1 512.2L1745 365.0" stroke="#a0a848" stroke-width="0.7" opacity="0.8"/><path d="M880.2 806.6L1745 641.1" stroke="#a09fc6" stroke-width="4.6"/><path d="M880.2 809.5L1745 644.0" stroke="#6c7ca4" stroke-width="1.6"/><path d="M880.2 810.7L1745 645.2" stroke="#a0a848" stroke-width="0.7" opacity="0.8"/><path d="M842.2 523.1L1745 371.5" stroke="#a09fc6" stroke-width="4.6"/><path d="M842.2 526.0L1745 374.4" stroke="#6c7ca4" stroke-width="1.6"/><path d="M842.2 527.2L1745 375.6" stroke="#a0a848" stroke-width="0.7" opacity="0.8"/><path d="M878.5 791.3L1745 626.8" stroke="#a09fc6" stroke-width="4.6"/><path d="M878.5 794.2L1745 629.7" stroke="#6c7ca4" stroke-width="1.6"/><path d="M878.5 795.4L1745 630.9" stroke="#a0a848" stroke-width="0.7" opacity="0.8"/><path d="M844.4 538.2L1745 382.1" stroke="#a09fc6" stroke-width="4.6"/><path d="M844.4 541.1L1745 385.0" stroke="#6c7ca4" stroke-width="1.6"/><path d="M844.4 542.3L1745 386.2" stroke="#a0a848" stroke-width="0.7" opacity="0.8"/><path d="M876.8 775.9L1745 612.5" stroke="#a09fc6" stroke-width="4.6"/><path d="M876.8 778.8L1745 615.4" stroke="#6c7ca4" stroke-width="1.6"/><path d="M876.8 780.0L1745 616.6" stroke="#a0a848" stroke-width="0.7" opacity="0.8"/><path d="M846.5 553.2L1745 392.6" stroke="#a09fc6" stroke-width="4.6"/><path d="M846.5 556.1L1745 395.5" stroke="#6c7ca4" stroke-width="1.6"/><path d="M846.5 557.3L1745 396.7" stroke="#a0a848" stroke-width="0.7" opacity="0.8"/><path d="M875.0 760.5L1745 598.2" stroke="#a09fc6" stroke-width="4.6"/><path d="M875.0 763.4L1745 601.1" stroke="#6c7ca4" stroke-width="1.6"/><path d="M875.0 764.6L1745 602.3" stroke="#a0a848" stroke-width="0.7" opacity="0.8"/><path d="M848.6 568.2L1745 403.2" stroke="#a09fc6" stroke-width="4.6"/><path d="M848.6 571.1L1745 406.1" stroke="#6c7ca4" stroke-width="1.6"/><path d="M848.6 572.3L1745 407.3" stroke="#a0a848" stroke-width="0.7" opacity="0.8"/><path d="M873.2 745.1L1745 583.9" stroke="#a09fc6" stroke-width="4.6"/><path d="M873.2 748.0L1745 586.8" stroke="#6c7ca4" stroke-width="1.6"/><path d="M873.2 749.2L1745 588.0" stroke="#a0a848" stroke-width="0.7" opacity="0.8"/><path d="M850.8 583.1L1745 413.8" stroke="#a09fc6" stroke-width="4.6"/><path d="M850.8 586.0L1745 416.7" stroke="#6c7ca4" stroke-width="1.6"/><path d="M850.8 587.2L1745 417.9" stroke="#a0a848" stroke-width="0.7" opacity="0.8"/><path d="M871.5 729.8L1745 569.7" stroke="#a09fc6" stroke-width="4.6"/><path d="M871.5 732.7L1745 572.6" stroke="#6c7ca4" stroke-width="1.6"/><path d="M871.5 733.9L1745 573.8" stroke="#a0a848" stroke-width="0.7" opacity="0.8"/><path d="M852.9 598.1L1745 424.4" stroke="#a09fc6" stroke-width="4.6"/><path d="M852.9 601.0L1745 427.3" stroke="#6c7ca4" stroke-width="1.6"/><path d="M852.9 602.2L1745 428.5" stroke="#a0a848" stroke-width="0.7" opacity="0.8"/><path d="M869.8 714.4L1745 555.4" stroke="#a09fc6" stroke-width="4.6"/><path d="M869.8 717.3L1745 558.3" stroke="#6c7ca4" stroke-width="1.6"/><path d="M869.8 718.5L1745 559.5" stroke="#a0a848" stroke-width="0.7" opacity="0.8"/><path d="M855.0 613.0L1745 435.0" stroke="#a09fc6" stroke-width="4.6"/><path d="M855.0 615.9L1745 437.9" stroke="#6c7ca4" stroke-width="1.6"/><path d="M855.0 617.1L1745 439.1" stroke="#a0a848" stroke-width="0.7" opacity="0.8"/><path d="M868.0 699.0L1745 541.1" stroke="#a09fc6" stroke-width="4.6"/><path d="M868.0 701.9L1745 544.0" stroke="#6c7ca4" stroke-width="1.6"/><path d="M868.0 703.1L1745 545.2" stroke="#a0a848" stroke-width="0.7" opacity="0.8"/><path d="M984.9 666.6L988.1 672.0" stroke="rgb(178, 171, 167)" stroke-width="5.4" stroke-linecap="round"/><path d="M988.1 672.0L991.6 676.6" stroke="rgb(178, 171, 167)" stroke-width="5.4" stroke-linecap="round"/><path d="M991.6 676.6L995.5 680.2" stroke="rgb(178, 171, 166)" stroke-width="5.4" stroke-linecap="round"/><path d="M995.5 680.2L999.6 682.9" stroke="rgb(178, 171, 166)" stroke-width="5.4" stroke-linecap="round"/><path d="M999.6 682.9L1003.8 684.5" stroke="rgb(178, 171, 165)" stroke-width="5.4" stroke-linecap="round"/><path d="M1003.8 684.5L1008.1 685.0" stroke="rgb(178, 170, 165)" stroke-width="5.4" stroke-linecap="round"/><path d="M1008.1 685.0L1012.3 684.4" stroke="rgb(178, 170, 164)" stroke-width="5.4" stroke-linecap="round"/><path d="M1012.3 684.4L1016.4 682.6" stroke="rgb(178, 170, 164)" stroke-width="5.4" stroke-linecap="round"/><path d="M1016.4 682.6L1020.4 679.6" stroke="rgb(178, 170, 163)" stroke-width="5.4" stroke-linecap="round"/><path d="M1020.4 679.6L1024.0 675.6" stroke="rgb(179, 170, 163)" stroke-width="5.4" stroke-linecap="round"/><path d="M1024.0 675.6L1027.2 670.5" stroke="rgb(179, 169, 162)" stroke-width="5.4" stroke-linecap="round"/><path d="M975.0 666.9L978.4 675.7" stroke="rgb(184, 149, 133)" stroke-width="5.4" stroke-linecap="round"/><path d="M978.4 675.7L982.4 683.7" stroke="rgb(184, 148, 132)" stroke-width="5.4" stroke-linecap="round"/><path d="M982.4 683.7L986.9 690.6" stroke="rgb(185, 148, 131)" stroke-width="5.4" stroke-linecap="round"/><path d="M986.9 690.6L991.9 696.4" stroke="rgb(185, 147, 130)" stroke-width="5.4" stroke-linecap="round"/><path d="M991.9 696.4L997.2 700.8" stroke="rgb(185, 146, 129)" stroke-width="5.4" stroke-linecap="round"/><path d="M997.2 700.8L1002.7 703.9" stroke="rgb(185, 145, 128)" stroke-width="5.4" stroke-linecap="round"/><path d="M1002.7 703.9L1008.4 705.4" stroke="rgb(185, 144, 127)" stroke-width="5.4" stroke-linecap="round"/><path d="M1008.4 705.4L1014.0 705.3" stroke="rgb(186, 144, 126)" stroke-width="5.4" stroke-linecap="round"/><path d="M1014.0 705.3L1019.6 703.7" stroke="rgb(186, 143, 125)" stroke-width="5.4" stroke-linecap="round"/><path d="M1019.6 703.7L1024.9 700.5" stroke="rgb(186, 142, 124)" stroke-width="5.4" stroke-linecap="round"/><path d="M1024.9 700.5L1029.8 695.8" stroke="rgb(186, 141, 123)" stroke-width="5.4" stroke-linecap="round"/><path d="M1029.8 695.8L1034.3 689.6" stroke="rgb(186, 140, 122)" stroke-width="5.4" stroke-linecap="round"/><path d="M1034.3 689.6L1038.3 682.2" stroke="rgb(187, 140, 121)" stroke-width="5.4" stroke-linecap="round"/><path d="M1038.3 682.2L1041.6 673.5" stroke="rgb(187, 139, 120)" stroke-width="5.4" stroke-linecap="round"/><path d="M964.7 657.0L967.7 669.6" stroke="rgb(185, 107, 111)" stroke-width="5.4" stroke-linecap="round"/><path d="M967.7 669.6L971.5 681.4" stroke="rgb(185, 106, 110)" stroke-width="5.4" stroke-linecap="round"/><path d="M971.5 681.4L976.1 692.3" stroke="rgb(185, 104, 110)" stroke-width="5.4" stroke-linecap="round"/><path d="M976.1 692.3L981.3 702.0" stroke="rgb(185, 103, 110)" stroke-width="5.4" stroke-linecap="round"/><path d="M981.3 702.0L987.2 710.3" stroke="rgb(185, 102, 110)" stroke-width="5.4" stroke-linecap="round"/><path d="M987.2 710.3L993.5 717.0" stroke="rgb(185, 101, 110)" stroke-width="5.4" stroke-linecap="round"/><path d="M993.5 717.0L1000.2 721.9" stroke="rgb(184, 100, 109)" stroke-width="5.4" stroke-linecap="round"/><path d="M1000.2 721.9L1007.1 725.0" stroke="rgb(184, 99, 109)" stroke-width="5.4" stroke-linecap="round"/><path d="M1007.1 725.0L1014.0 726.1" stroke="rgb(184, 98, 109)" stroke-width="5.4" stroke-linecap="round"/><path d="M1014.0 726.1L1020.9 725.2" stroke="rgb(184, 96, 109)" stroke-width="5.4" stroke-linecap="round"/><path d="M1020.9 725.2L1027.5 722.3" stroke="rgb(184, 95, 109)" stroke-width="5.4" stroke-linecap="round"/><path d="M1027.5 722.3L1033.8 717.4" stroke="rgb(184, 94, 108)" stroke-width="5.4" stroke-linecap="round"/><path d="M1033.8 717.4L1039.6 710.7" stroke="rgb(184, 93, 108)" stroke-width="5.4" stroke-linecap="round"/><path d="M1039.6 710.7L1044.8 702.2" stroke="rgb(184, 92, 108)" stroke-width="5.4" stroke-linecap="round"/><path d="M1044.8 702.2L1049.3 692.1" stroke="rgb(184, 91, 108)" stroke-width="5.4" stroke-linecap="round"/><path d="M1049.3 692.1L1052.9 680.6" stroke="rgb(184, 90, 108)" stroke-width="5.4" stroke-linecap="round"/><path d="M957.6 652.8L960.5 668.6" stroke="rgb(164, 66, 105)" stroke-width="5.4" stroke-linecap="round"/><path d="M960.5 668.6L964.5 683.6" stroke="rgb(163, 65, 105)" stroke-width="5.4" stroke-linecap="round"/><path d="M964.5 683.6L969.3 697.6" stroke="rgb(163, 64, 105)" stroke-width="5.4" stroke-linecap="round"/><path d="M969.3 697.6L975.1 710.4" stroke="rgb(162, 63, 104)" stroke-width="5.4" stroke-linecap="round"/><path d="M975.1 710.4L981.6 721.5" stroke="rgb(161, 62, 104)" stroke-width="5.4" stroke-linecap="round"/><path d="M981.6 721.5L988.7 730.9" stroke="rgb(160, 61, 104)" stroke-width="5.4" stroke-linecap="round"/><path d="M988.7 730.9L996.3 738.2" stroke="rgb(160, 61, 104)" stroke-width="5.4" stroke-linecap="round"/><path d="M996.3 738.2L1004.3 743.3" stroke="rgb(159, 60, 104)" stroke-width="5.4" stroke-linecap="round"/><path d="M1004.3 743.3L1012.4 746.1" stroke="rgb(158, 59, 104)" stroke-width="5.4" stroke-linecap="round"/><path d="M1012.4 746.1L1020.5 746.5" stroke="rgb(158, 58, 104)" stroke-width="5.4" stroke-linecap="round"/><path d="M1020.5 746.5L1028.4 744.4" stroke="rgb(157, 57, 104)" stroke-width="5.4" stroke-linecap="round"/><path d="M1028.4 744.4L1036.0 739.9" stroke="rgb(156, 56, 104)" stroke-width="5.4" stroke-linecap="round"/><path d="M1036.0 739.9L1043.1 733.1" stroke="rgb(156, 56, 104)" stroke-width="5.4" stroke-linecap="round"/><path d="M1043.1 733.1L1049.6 724.1" stroke="rgb(154, 55, 103)" stroke-width="5.4" stroke-linecap="round"/><path d="M1049.6 724.1L1055.2 713.1" stroke="rgb(153, 54, 102)" stroke-width="5.4" stroke-linecap="round"/><path d="M1055.2 713.1L1060.0 700.2" stroke="rgb(152, 54, 102)" stroke-width="5.4" stroke-linecap="round"/><path d="M1060.0 700.2L1063.8 685.7" stroke="rgb(151, 54, 102)" stroke-width="5.4" stroke-linecap="round"/><path d="M1063.8 685.7L1066.4 670.0" stroke="rgb(150, 53, 101)" stroke-width="5.4" stroke-linecap="round"/><path d="M953.8 663.6L957.6 682.0" stroke="rgb(120, 39, 87)" stroke-width="5.4" stroke-linecap="round"/><path d="M957.6 682.0L962.5 699.3" stroke="rgb(119, 39, 87)" stroke-width="5.4" stroke-linecap="round"/><path d="M962.5 699.3L968.5 715.4" stroke="rgb(118, 39, 87)" stroke-width="5.4" stroke-linecap="round"/><path d="M968.5 715.4L975.5 729.7" stroke="rgb(117, 38, 86)" stroke-width="5.4" stroke-linecap="round"/><path d="M975.5 729.7L983.2 742.1" stroke="rgb(116, 37, 86)" stroke-width="5.4" stroke-linecap="round"/><path d="M983.2 742.1L991.5 752.2" stroke="rgb(115, 37, 85)" stroke-width="5.4" stroke-linecap="round"/><path d="M991.5 752.2L1000.3 759.9" stroke="rgb(114, 37, 85)" stroke-width="5.4" stroke-linecap="round"/><path d="M1000.3 759.9L1009.4 764.8" stroke="rgb(113, 36, 84)" stroke-width="5.4" stroke-linecap="round"/><path d="M1009.4 764.8L1018.6 767.0" stroke="rgb(112, 36, 84)" stroke-width="5.4" stroke-linecap="round"/><path d="M1018.6 767.0L1027.7 766.4" stroke="rgb(111, 35, 83)" stroke-width="5.4" stroke-linecap="round"/><path d="M1027.7 766.4L1036.6 762.9" stroke="rgb(110, 35, 83)" stroke-width="5.4" stroke-linecap="round"/><path d="M1036.6 762.9L1044.9 756.5" stroke="rgb(109, 35, 82)" stroke-width="5.4" stroke-linecap="round"/><path d="M1044.9 756.5L1052.6 747.5" stroke="rgb(109, 35, 82)" stroke-width="5.4" stroke-linecap="round"/><path d="M1052.6 747.5L1059.6 736.0" stroke="rgb(108, 34, 81)" stroke-width="5.4" stroke-linecap="round"/><path d="M1059.6 736.0L1065.5 722.2" stroke="rgb(107, 34, 81)" stroke-width="5.4" stroke-linecap="round"/><path d="M1065.5 722.2L1070.4 706.4" stroke="rgb(107, 34, 80)" stroke-width="5.4" stroke-linecap="round"/><path d="M1070.4 706.4L1074.1 688.8" stroke="rgb(106, 34, 80)" stroke-width="5.4" stroke-linecap="round"/><path d="M1074.1 688.8L1076.5 669.9" stroke="rgb(105, 33, 79)" stroke-width="5.4" stroke-linecap="round"/><path d="M947.7 654.8L951.2 676.4" stroke="rgb(87, 27, 68)" stroke-width="5.4" stroke-linecap="round"/><path d="M951.2 676.4L955.9 697.2" stroke="rgb(86, 27, 67)" stroke-width="5.4" stroke-linecap="round"/><path d="M955.9 697.2L961.9 716.7" stroke="rgb(86, 26, 67)" stroke-width="5.4" stroke-linecap="round"/><path d="M961.9 716.7L969.0 734.5" stroke="rgb(85, 26, 66)" stroke-width="5.4" stroke-linecap="round"/><path d="M969.0 734.5L977.1 750.2" stroke="rgb(84, 26, 66)" stroke-width="5.4" stroke-linecap="round"/><path d="M977.1 750.2L986.0 763.6" stroke="rgb(84, 26, 66)" stroke-width="5.4" stroke-linecap="round"/><path d="M1085.9 656.6L1089.1 662.0" stroke="rgb(178, 171, 167)" stroke-width="5.4" stroke-linecap="round"/><path d="M1089.1 662.0L1092.6 666.6" stroke="rgb(178, 171, 167)" stroke-width="5.4" stroke-linecap="round"/><path d="M1092.6 666.6L1096.5 670.2" stroke="rgb(178, 171, 166)" stroke-width="5.4" stroke-linecap="round"/><path d="M1096.5 670.2L1100.6 672.9" stroke="rgb(178, 171, 166)" stroke-width="5.4" stroke-linecap="round"/><path d="M1100.6 672.9L1104.8 674.5" stroke="rgb(178, 171, 165)" stroke-width="5.4" stroke-linecap="round"/><path d="M1104.8 674.5L1109.1 675.0" stroke="rgb(178, 170, 165)" stroke-width="5.4" stroke-linecap="round"/><path d="M1109.1 675.0L1113.3 674.4" stroke="rgb(178, 170, 164)" stroke-width="5.4" stroke-linecap="round"/><path d="M1113.3 674.4L1117.4 672.6" stroke="rgb(178, 170, 164)" stroke-width="5.4" stroke-linecap="round"/><path d="M1117.4 672.6L1121.4 669.6" stroke="rgb(178, 170, 163)" stroke-width="5.4" stroke-linecap="round"/><path d="M1121.4 669.6L1125.0 665.6" stroke="rgb(179, 170, 163)" stroke-width="5.4" stroke-linecap="round"/><path d="M1125.0 665.6L1128.2 660.5" stroke="rgb(179, 169, 162)" stroke-width="5.4" stroke-linecap="round"/><path d="M1076.0 656.9L1079.4 665.7" stroke="rgb(184, 149, 133)" stroke-width="5.4" stroke-linecap="round"/><path d="M1079.4 665.7L1083.4 673.7" stroke="rgb(184, 148, 132)" stroke-width="5.4" stroke-linecap="round"/><path d="M1083.4 673.7L1087.9 680.6" stroke="rgb(185, 148, 131)" stroke-width="5.4" stroke-linecap="round"/><path d="M1087.9 680.6L1092.9 686.4" stroke="rgb(185, 147, 130)" stroke-width="5.4" stroke-linecap="round"/><path d="M1092.9 686.4L1098.2 690.8" stroke="rgb(185, 146, 129)" stroke-width="5.4" stroke-linecap="round"/><path d="M1098.2 690.8L1103.7 693.9" stroke="rgb(185, 145, 128)" stroke-width="5.4" stroke-linecap="round"/><path d="M1103.7 693.9L1109.4 695.4" stroke="rgb(185, 144, 127)" stroke-width="5.4" stroke-linecap="round"/><path d="M1109.4 695.4L1115.0 695.3" stroke="rgb(186, 144, 126)" stroke-width="5.4" stroke-linecap="round"/><path d="M1115.0 695.3L1120.6 693.7" stroke="rgb(186, 143, 125)" stroke-width="5.4" stroke-linecap="round"/><path d="M1120.6 693.7L1125.9 690.5" stroke="rgb(186, 142, 124)" stroke-width="5.4" stroke-linecap="round"/><path d="M1125.9 690.5L1130.8 685.8" stroke="rgb(186, 141, 123)" stroke-width="5.4" stroke-linecap="round"/><path d="M1130.8 685.8L1135.3 679.6" stroke="rgb(186, 140, 122)" stroke-width="5.4" stroke-linecap="round"/><path d="M1135.3 679.6L1139.3 672.2" stroke="rgb(187, 140, 121)" stroke-width="5.4" stroke-linecap="round"/><path d="M1139.3 672.2L1142.6 663.5" stroke="rgb(187, 139, 120)" stroke-width="5.4" stroke-linecap="round"/><path d="M1065.7 647.0L1068.7 659.6" stroke="rgb(185, 107, 111)" stroke-width="5.4" stroke-linecap="round"/><path d="M1068.7 659.6L1072.5 671.4" stroke="rgb(185, 106, 110)" stroke-width="5.4" stroke-linecap="round"/><path d="M1072.5 671.4L1077.1 682.3" stroke="rgb(185, 104, 110)" stroke-width="5.4" stroke-linecap="round"/><path d="M1077.1 682.3L1082.3 692.0" stroke="rgb(185, 103, 110)" stroke-width="5.4" stroke-linecap="round"/><path d="M1082.3 692.0L1088.2 700.3" stroke="rgb(185, 102, 110)" stroke-width="5.4" stroke-linecap="round"/><path d="M1088.2 700.3L1094.5 707.0" stroke="rgb(185, 101, 110)" stroke-width="5.4" stroke-linecap="round"/><path d="M1094.5 707.0L1101.2 711.9" stroke="rgb(184, 100, 109)" stroke-width="5.4" stroke-linecap="round"/><path d="M1101.2 711.9L1108.1 715.0" stroke="rgb(184, 99, 109)" stroke-width="5.4" stroke-linecap="round"/><path d="M1108.1 715.0L1115.0 716.1" stroke="rgb(184, 98, 109)" stroke-width="5.4" stroke-linecap="round"/><path d="M1115.0 716.1L1121.9 715.2" stroke="rgb(184, 96, 109)" stroke-width="5.4" stroke-linecap="round"/><path d="M1121.9 715.2L1128.5 712.3" stroke="rgb(184, 95, 109)" stroke-width="5.4" stroke-linecap="round"/><path d="M1128.5 712.3L1134.8 707.4" stroke="rgb(184, 94, 108)" stroke-width="5.4" stroke-linecap="round"/><path d="M1134.8 707.4L1140.6 700.7" stroke="rgb(184, 93, 108)" stroke-width="5.4" stroke-linecap="round"/><path d="M1140.6 700.7L1145.8 692.2" stroke="rgb(184, 92, 108)" stroke-width="5.4" stroke-linecap="round"/><path d="M1145.8 692.2L1150.3 682.1" stroke="rgb(184, 91, 108)" stroke-width="5.4" stroke-linecap="round"/><path d="M1150.3 682.1L1153.9 670.6" stroke="rgb(184, 90, 108)" stroke-width="5.4" stroke-linecap="round"/><path d="M1058.6 642.8L1061.5 658.6" stroke="rgb(164, 66, 105)" stroke-width="5.4" stroke-linecap="round"/><path d="M1061.5 658.6L1065.5 673.6" stroke="rgb(163, 65, 105)" stroke-width="5.4" stroke-linecap="round"/><path d="M1065.5 673.6L1070.3 687.6" stroke="rgb(163, 64, 105)" stroke-width="5.4" stroke-linecap="round"/><path d="M1070.3 687.6L1076.1 700.4" stroke="rgb(162, 63, 104)" stroke-width="5.4" stroke-linecap="round"/><path d="M1076.1 700.4L1082.6 711.5" stroke="rgb(161, 62, 104)" stroke-width="5.4" stroke-linecap="round"/><path d="M1082.6 711.5L1089.7 720.9" stroke="rgb(160, 61, 104)" stroke-width="5.4" stroke-linecap="round"/><path d="M1089.7 720.9L1097.3 728.2" stroke="rgb(160, 61, 104)" stroke-width="5.4" stroke-linecap="round"/><path d="M1097.3 728.2L1105.3 733.3" stroke="rgb(159, 60, 104)" stroke-width="5.4" stroke-linecap="round"/><path d="M1105.3 733.3L1113.4 736.1" stroke="rgb(158, 59, 104)" stroke-width="5.4" stroke-linecap="round"/><path d="M1113.4 736.1L1121.5 736.5" stroke="rgb(158, 58, 104)" stroke-width="5.4" stroke-linecap="round"/><path d="M1121.5 736.5L1129.4 734.4" stroke="rgb(157, 57, 104)" stroke-width="5.4" stroke-linecap="round"/><path d="M1129.4 734.4L1137.0 729.9" stroke="rgb(156, 56, 104)" stroke-width="5.4" stroke-linecap="round"/><path d="M1137.0 729.9L1144.1 723.1" stroke="rgb(156, 56, 104)" stroke-width="5.4" stroke-linecap="round"/><path d="M1144.1 723.1L1150.6 714.1" stroke="rgb(154, 55, 103)" stroke-width="5.4" stroke-linecap="round"/><path d="M1150.6 714.1L1156.2 703.1" stroke="rgb(153, 54, 102)" stroke-width="5.4" stroke-linecap="round"/><path d="M1156.2 703.1L1161.0 690.2" stroke="rgb(152, 54, 102)" stroke-width="5.4" stroke-linecap="round"/><path d="M1161.0 690.2L1164.8 675.7" stroke="rgb(151, 54, 102)" stroke-width="5.4" stroke-linecap="round"/><path d="M1164.8 675.7L1167.4 660.0" stroke="rgb(150, 53, 101)" stroke-width="5.4" stroke-linecap="round"/><path d="M1054.8 653.6L1058.6 672.0" stroke="rgb(120, 39, 87)" stroke-width="5.4" stroke-linecap="round"/><path d="M1058.6 672.0L1063.5 689.3" stroke="rgb(119, 39, 87)" stroke-width="5.4" stroke-linecap="round"/><path d="M1063.5 689.3L1069.5 705.4" stroke="rgb(118, 39, 87)" stroke-width="5.4" stroke-linecap="round"/><path d="M1069.5 705.4L1076.5 719.7" stroke="rgb(117, 38, 86)" stroke-width="5.4" stroke-linecap="round"/><path d="M1076.5 719.7L1084.2 732.1" stroke="rgb(116, 37, 86)" stroke-width="5.4" stroke-linecap="round"/><path d="M1084.2 732.1L1092.5 742.2" stroke="rgb(115, 37, 85)" stroke-width="5.4" stroke-linecap="round"/><path d="M1092.5 742.2L1101.3 749.9" stroke="rgb(114, 37, 85)" stroke-width="5.4" stroke-linecap="round"/><path d="M1101.3 749.9L1110.4 754.8" stroke="rgb(113, 36, 84)" stroke-width="5.4" stroke-linecap="round"/><path d="M1110.4 754.8L1119.6 757.0" stroke="rgb(112, 36, 84)" stroke-width="5.4" stroke-linecap="round"/><path d="M1119.6 757.0L1128.7 756.4" stroke="rgb(111, 35, 83)" stroke-width="5.4" stroke-linecap="round"/><path d="M1128.7 756.4L1137.6 752.9" stroke="rgb(110, 35, 83)" stroke-width="5.4" stroke-linecap="round"/><path d="M1137.6 752.9L1145.9 746.5" stroke="rgb(109, 35, 82)" stroke-width="5.4" stroke-linecap="round"/><path d="M1145.9 746.5L1153.6 737.5" stroke="rgb(109, 35, 82)" stroke-width="5.4" stroke-linecap="round"/><path d="M1153.6 737.5L1160.6 726.0" stroke="rgb(108, 34, 81)" stroke-width="5.4" stroke-linecap="round"/><path d="M1160.6 726.0L1166.5 712.2" stroke="rgb(107, 34, 81)" stroke-width="5.4" stroke-linecap="round"/><path d="M1166.5 712.2L1171.4 696.4" stroke="rgb(107, 34, 80)" stroke-width="5.4" stroke-linecap="round"/><path d="M1171.4 696.4L1175.1 678.8" stroke="rgb(106, 34, 80)" stroke-width="5.4" stroke-linecap="round"/><path d="M1175.1 678.8L1177.5 659.9" stroke="rgb(105, 33, 79)" stroke-width="5.4" stroke-linecap="round"/><path d="M1048.7 644.8L1052.2 666.4" stroke="rgb(87, 27, 68)" stroke-width="5.4" stroke-linecap="round"/><path d="M1052.2 666.4L1056.9 687.2" stroke="rgb(86, 27, 67)" stroke-width="5.4" stroke-linecap="round"/><path d="M1056.9 687.2L1062.9 706.7" stroke="rgb(86, 26, 67)" stroke-width="5.4" stroke-linecap="round"/><path d="M1062.9 706.7L1070.0 724.5" stroke="rgb(85, 26, 66)" stroke-width="5.4" stroke-linecap="round"/><path d="M1070.0 724.5L1078.1 740.2" stroke="rgb(84, 26, 66)" stroke-width="5.4" stroke-linecap="round"/><path d="M1078.1 740.2L1087.0 753.6" stroke="rgb(84, 26, 66)" stroke-width="5.4" stroke-linecap="round"/><path d="M1187.9 642.6L1191.1 648.0" stroke="rgb(178, 171, 167)" stroke-width="5.4" stroke-linecap="round"/><path d="M1191.1 648.0L1194.6 652.6" stroke="rgb(178, 171, 167)" stroke-width="5.4" stroke-linecap="round"/><path d="M1194.6 652.6L1198.5 656.2" stroke="rgb(178, 171, 166)" stroke-width="5.4" stroke-linecap="round"/><path d="M1198.5 656.2L1202.6 658.9" stroke="rgb(178, 171, 166)" stroke-width="5.4" stroke-linecap="round"/><path d="M1202.6 658.9L1206.8 660.5" stroke="rgb(178, 171, 165)" stroke-width="5.4" stroke-linecap="round"/><path d="M1206.8 660.5L1211.1 661.0" stroke="rgb(178, 170, 165)" stroke-width="5.4" stroke-linecap="round"/><path d="M1211.1 661.0L1215.3 660.4" stroke="rgb(178, 170, 164)" stroke-width="5.4" stroke-linecap="round"/><path d="M1215.3 660.4L1219.4 658.6" stroke="rgb(178, 170, 164)" stroke-width="5.4" stroke-linecap="round"/><path d="M1219.4 658.6L1223.4 655.6" stroke="rgb(178, 170, 163)" stroke-width="5.4" stroke-linecap="round"/><path d="M1223.4 655.6L1227.0 651.6" stroke="rgb(179, 170, 163)" stroke-width="5.4" stroke-linecap="round"/><path d="M1227.0 651.6L1230.2 646.5" stroke="rgb(179, 169, 162)" stroke-width="5.4" stroke-linecap="round"/><path d="M1178.0 642.9L1181.4 651.7" stroke="rgb(184, 149, 133)" stroke-width="5.4" stroke-linecap="round"/><path d="M1181.4 651.7L1185.4 659.7" stroke="rgb(184, 148, 132)" stroke-width="5.4" stroke-linecap="round"/><path d="M1185.4 659.7L1189.9 666.6" stroke="rgb(185, 148, 131)" stroke-width="5.4" stroke-linecap="round"/><path d="M1189.9 666.6L1194.9 672.4" stroke="rgb(185, 147, 130)" stroke-width="5.4" stroke-linecap="round"/><path d="M1194.9 672.4L1200.2 676.8" stroke="rgb(185, 146, 129)" stroke-width="5.4" stroke-linecap="round"/><path d="M1200.2 676.8L1205.7 679.9" stroke="rgb(185, 145, 128)" stroke-width="5.4" stroke-linecap="round"/><path d="M1205.7 679.9L1211.4 681.4" stroke="rgb(185, 144, 127)" stroke-width="5.4" stroke-linecap="round"/><path d="M1211.4 681.4L1217.0 681.3" stroke="rgb(186, 144, 126)" stroke-width="5.4" stroke-linecap="round"/><path d="M1217.0 681.3L1222.6 679.7" stroke="rgb(186, 143, 125)" stroke-width="5.4" stroke-linecap="round"/><path d="M1222.6 679.7L1227.9 676.5" stroke="rgb(186, 142, 124)" stroke-width="5.4" stroke-linecap="round"/><path d="M1227.9 676.5L1232.8 671.8" stroke="rgb(186, 141, 123)" stroke-width="5.4" stroke-linecap="round"/><path d="M1232.8 671.8L1237.3 665.6" stroke="rgb(186, 140, 122)" stroke-width="5.4" stroke-linecap="round"/><path d="M1237.3 665.6L1241.3 658.2" stroke="rgb(187, 140, 121)" stroke-width="5.4" stroke-linecap="round"/><path d="M1241.3 658.2L1244.6 649.5" stroke="rgb(187, 139, 120)" stroke-width="5.4" stroke-linecap="round"/><path d="M1167.7 633.0L1170.7 645.6" stroke="rgb(185, 107, 111)" stroke-width="5.4" stroke-linecap="round"/><path d="M1170.7 645.6L1174.5 657.4" stroke="rgb(185, 106, 110)" stroke-width="5.4" stroke-linecap="round"/><path d="M1174.5 657.4L1179.1 668.3" stroke="rgb(185, 104, 110)" stroke-width="5.4" stroke-linecap="round"/><path d="M1179.1 668.3L1184.3 678.0" stroke="rgb(185, 103, 110)" stroke-width="5.4" stroke-linecap="round"/><path d="M1184.3 678.0L1190.2 686.3" stroke="rgb(185, 102, 110)" stroke-width="5.4" stroke-linecap="round"/><path d="M1190.2 686.3L1196.5 693.0" stroke="rgb(185, 101, 110)" stroke-width="5.4" stroke-linecap="round"/><path d="M1196.5 693.0L1203.2 697.9" stroke="rgb(184, 100, 109)" stroke-width="5.4" stroke-linecap="round"/><path d="M1203.2 697.9L1210.1 701.0" stroke="rgb(184, 99, 109)" stroke-width="5.4" stroke-linecap="round"/><path d="M1210.1 701.0L1217.0 702.1" stroke="rgb(184, 98, 109)" stroke-width="5.4" stroke-linecap="round"/><path d="M1217.0 702.1L1223.9 701.2" stroke="rgb(184, 96, 109)" stroke-width="5.4" stroke-linecap="round"/><path d="M1223.9 701.2L1230.5 698.3" stroke="rgb(184, 95, 109)" stroke-width="5.4" stroke-linecap="round"/><path d="M1230.5 698.3L1236.8 693.4" stroke="rgb(184, 94, 108)" stroke-width="5.4" stroke-linecap="round"/><path d="M1236.8 693.4L1242.6 686.7" stroke="rgb(184, 93, 108)" stroke-width="5.4" stroke-linecap="round"/><path d="M1242.6 686.7L1247.8 678.2" stroke="rgb(184, 92, 108)" stroke-width="5.4" stroke-linecap="round"/><path d="M1247.8 678.2L1252.3 668.1" stroke="rgb(184, 91, 108)" stroke-width="5.4" stroke-linecap="round"/><path d="M1252.3 668.1L1255.9 656.6" stroke="rgb(184, 90, 108)" stroke-width="5.4" stroke-linecap="round"/><path d="M1160.6 628.8L1163.5 644.6" stroke="rgb(164, 66, 105)" stroke-width="5.4" stroke-linecap="round"/><path d="M1163.5 644.6L1167.5 659.6" stroke="rgb(163, 65, 105)" stroke-width="5.4" stroke-linecap="round"/><path d="M1167.5 659.6L1172.3 673.6" stroke="rgb(163, 64, 105)" stroke-width="5.4" stroke-linecap="round"/><path d="M1172.3 673.6L1178.1 686.4" stroke="rgb(162, 63, 104)" stroke-width="5.4" stroke-linecap="round"/><path d="M1178.1 686.4L1184.6 697.5" stroke="rgb(161, 62, 104)" stroke-width="5.4" stroke-linecap="round"/><path d="M1184.6 697.5L1191.7 706.9" stroke="rgb(160, 61, 104)" stroke-width="5.4" stroke-linecap="round"/><path d="M1191.7 706.9L1199.3 714.2" stroke="rgb(160, 61, 104)" stroke-width="5.4" stroke-linecap="round"/><path d="M1199.3 714.2L1207.3 719.3" stroke="rgb(159, 60, 104)" stroke-width="5.4" stroke-linecap="round"/><path d="M1207.3 719.3L1215.4 722.1" stroke="rgb(158, 59, 104)" stroke-width="5.4" stroke-linecap="round"/><path d="M1215.4 722.1L1223.5 722.5" stroke="rgb(158, 58, 104)" stroke-width="5.4" stroke-linecap="round"/><path d="M1223.5 722.5L1231.4 720.4" stroke="rgb(157, 57, 104)" stroke-width="5.4" stroke-linecap="round"/><path d="M1231.4 720.4L1239.0 715.9" stroke="rgb(156, 56, 104)" stroke-width="5.4" stroke-linecap="round"/><path d="M1239.0 715.9L1246.1 709.1" stroke="rgb(156, 56, 104)" stroke-width="5.4" stroke-linecap="round"/><path d="M1246.1 709.1L1252.6 700.1" stroke="rgb(154, 55, 103)" stroke-width="5.4" stroke-linecap="round"/><path d="M1252.6 700.1L1258.2 689.1" stroke="rgb(153, 54, 102)" stroke-width="5.4" stroke-linecap="round"/><path d="M1258.2 689.1L1263.0 676.2" stroke="rgb(152, 54, 102)" stroke-width="5.4" stroke-linecap="round"/><path d="M1263.0 676.2L1266.8 661.7" stroke="rgb(151, 54, 102)" stroke-width="5.4" stroke-linecap="round"/><path d="M1266.8 661.7L1269.4 646.0" stroke="rgb(150, 53, 101)" stroke-width="5.4" stroke-linecap="round"/><path d="M1156.8 639.6L1160.6 658.0" stroke="rgb(120, 39, 87)" stroke-width="5.4" stroke-linecap="round"/><path d="M1160.6 658.0L1165.5 675.3" stroke="rgb(119, 39, 87)" stroke-width="5.4" stroke-linecap="round"/><path d="M1165.5 675.3L1171.5 691.4" stroke="rgb(118, 39, 87)" stroke-width="5.4" stroke-linecap="round"/><path d="M1171.5 691.4L1178.5 705.7" stroke="rgb(117, 38, 86)" stroke-width="5.4" stroke-linecap="round"/><path d="M1178.5 705.7L1186.2 718.1" stroke="rgb(116, 37, 86)" stroke-width="5.4" stroke-linecap="round"/><path d="M1186.2 718.1L1194.5 728.2" stroke="rgb(115, 37, 85)" stroke-width="5.4" stroke-linecap="round"/><path d="M1194.5 728.2L1203.3 735.9" stroke="rgb(114, 37, 85)" stroke-width="5.4" stroke-linecap="round"/><path d="M1203.3 735.9L1212.4 740.8" stroke="rgb(113, 36, 84)" stroke-width="5.4" stroke-linecap="round"/><path d="M1212.4 740.8L1221.6 743.0" stroke="rgb(112, 36, 84)" stroke-width="5.4" stroke-linecap="round"/><path d="M1221.6 743.0L1230.7 742.4" stroke="rgb(111, 35, 83)" stroke-width="5.4" stroke-linecap="round"/><path d="M1230.7 742.4L1239.6 738.9" stroke="rgb(110, 35, 83)" stroke-width="5.4" stroke-linecap="round"/><path d="M1239.6 738.9L1247.9 732.5" stroke="rgb(109, 35, 82)" stroke-width="5.4" stroke-linecap="round"/><path d="M1247.9 732.5L1255.6 723.5" stroke="rgb(109, 35, 82)" stroke-width="5.4" stroke-linecap="round"/><path d="M1255.6 723.5L1262.6 712.0" stroke="rgb(108, 34, 81)" stroke-width="5.4" stroke-linecap="round"/><path d="M1262.6 712.0L1268.5 698.2" stroke="rgb(107, 34, 81)" stroke-width="5.4" stroke-linecap="round"/><path d="M1268.5 698.2L1273.4 682.4" stroke="rgb(107, 34, 80)" stroke-width="5.4" stroke-linecap="round"/><path d="M1273.4 682.4L1277.1 664.8" stroke="rgb(106, 34, 80)" stroke-width="5.4" stroke-linecap="round"/><path d="M1277.1 664.8L1279.5 645.9" stroke="rgb(105, 33, 79)" stroke-width="5.4" stroke-linecap="round"/><path d="M1150.7 630.8L1154.2 652.4" stroke="rgb(87, 27, 68)" stroke-width="5.4" stroke-linecap="round"/><path d="M1154.2 652.4L1158.9 673.2" stroke="rgb(86, 27, 67)" stroke-width="5.4" stroke-linecap="round"/><path d="M1158.9 673.2L1164.9 692.7" stroke="rgb(86, 26, 67)" stroke-width="5.4" stroke-linecap="round"/><path d="M1164.9 692.7L1172.0 710.5" stroke="rgb(85, 26, 66)" stroke-width="5.4" stroke-linecap="round"/><path d="M1172.0 710.5L1180.1 726.2" stroke="rgb(84, 26, 66)" stroke-width="5.4" stroke-linecap="round"/><path d="M1180.1 726.2L1189.0 739.6" stroke="rgb(84, 26, 66)" stroke-width="5.4" stroke-linecap="round"/><path d="M838 494 L1740 352.1" stroke="#b9b7d2" stroke-width="5"/><path d="M882 820 L1740 655.3" stroke="#b4b2cc" stroke-width="4"/></g><path d="M838.0 497.6 L833.0 499.0 L826.1 503.0 L818.6 509.8 L811.1 519.0 L804.0 530.6 L797.7 544.4 L792.3 560.2 L788.1 577.5 L785.4 596.3 L784.1 616.1 L784.5 636.6 L786.6 657.5 L790.3 678.4 L795.5 698.9 L802.2 718.7 L810.1 737.4 L819.1 754.8 L828.8 770.6 L839.0 784.4 L849.2 796.0 L859.3 805.2 L868.6 812.0 L876.6 816.0 L882.0 817.4" fill="none" stroke="#9ea22c" stroke-width="8.6" stroke-linejoin="round"/><path d="M838.0 491.0 L832.5 492.4 L824.9 496.7 L816.7 503.7 L808.5 513.3 L800.6 525.4 L793.5 539.8 L787.4 556.1 L782.6 574.2 L779.4 593.8 L777.8 614.4 L778.0 635.8 L780.0 657.5 L783.8 679.2 L789.2 700.6 L796.2 721.2 L804.6 740.8 L814.2 758.9 L824.6 775.2 L835.5 789.6 L846.6 801.7 L857.4 811.3 L867.4 818.3 L876.1 822.6 L882.0 824.0" fill="none" stroke="#aeacd2" stroke-width="5" stroke-linejoin="round"/><path d="M838.0 493.6 L832.7 495.0 L825.4 499.2 L817.5 506.1 L809.5 515.6 L801.9 527.5 L795.1 541.6 L789.3 557.7 L784.8 575.5 L781.8 594.8 L780.3 615.1 L780.6 636.1 L782.6 657.5 L786.3 678.9 L791.7 699.9 L798.6 720.2 L806.8 739.4 L816.1 757.3 L826.2 773.4 L836.9 787.5 L847.6 799.4 L858.1 808.9 L867.9 815.8 L876.3 820.0 L882.0 821.4" fill="none" stroke="#5ac88a" stroke-width="0.9"/><path d="M840.1 511.8 L835.5 513.0 L829.2 516.8 L822.4 522.9 L815.6 531.3 L809.2 541.9 L803.4 554.4 L798.5 568.8 L794.7 584.6 L792.2 601.7 L791.1 619.7 L791.5 638.4 L793.4 657.4 L796.7 676.4 L801.5 695.1 L807.6 713.1 L814.8 730.2 L822.9 746.0 L831.8 760.3 L841.0 772.9 L850.4 783.5 L859.5 791.9 L868.0 798.0 L875.3 801.7 L880.2 803.0" fill="none" stroke="#9ea22c" stroke-width="8.6" stroke-linejoin="round"/><path d="M840.1 505.2 L835.0 506.5 L828.1 510.4 L820.5 516.8 L813.0 525.6 L805.7 536.7 L799.2 549.8 L793.6 564.7 L789.2 581.3 L786.3 599.2 L784.8 618.0 L784.9 637.5 L786.8 657.4 L790.2 677.3 L795.2 696.8 L801.6 715.6 L809.3 733.5 L818.0 750.0 L827.6 765.0 L837.6 778.1 L847.7 789.2 L857.6 798.0 L866.9 804.4 L874.8 808.3 L880.2 809.6" fill="none" stroke="#aeacd2" stroke-width="5" stroke-linejoin="round"/><path d="M840.1 507.8 L835.2 509.1 L828.5 512.9 L821.3 519.2 L814.0 527.8 L807.1 538.7 L800.8 551.6 L795.5 566.3 L791.4 582.6 L788.6 600.1 L787.3 618.7 L787.5 637.9 L789.4 657.4 L792.8 676.9 L797.7 696.1 L804.0 714.6 L811.5 732.2 L820.0 748.5 L829.2 763.2 L838.9 776.1 L848.8 786.9 L858.4 795.6 L867.3 801.9 L875.0 805.7 L880.2 807.0" fill="none" stroke="#5ac88a" stroke-width="0.9"/><path d="M842.1 526.0 L838.0 527.1 L832.4 530.5 L826.3 536.0 L820.1 543.6 L814.3 553.1 L809.1 564.5 L804.7 577.4 L801.3 591.6 L799.0 607.0 L798.1 623.3 L798.4 640.2 L800.1 657.3 L803.1 674.4 L807.4 691.3 L812.9 707.5 L819.4 722.9 L826.8 737.2 L834.7 750.1 L843.1 761.4 L851.5 771.0 L859.8 778.6 L867.4 784.1 L874.0 787.5 L878.4 788.6" fill="none" stroke="#9ea22c" stroke-width="8.6" stroke-linejoin="round"/><path d="M842.1 519.4 L837.6 520.6 L831.2 524.1 L824.4 529.9 L817.5 537.9 L810.9 547.9 L804.9 559.8 L799.8 573.3 L795.8 588.3 L793.1 604.5 L791.8 621.6 L791.9 639.3 L793.5 657.3 L796.6 675.3 L801.1 693.0 L807.0 710.1 L814.0 726.2 L821.9 741.2 L830.5 754.8 L839.6 766.7 L848.9 776.7 L857.9 784.7 L866.3 790.5 L873.5 794.0 L878.4 795.2" fill="none" stroke="#aeacd2" stroke-width="5" stroke-linejoin="round"/><path d="M842.1 522.0 L837.8 523.2 L831.7 526.6 L825.1 532.3 L818.5 540.1 L812.2 550.0 L806.6 561.6 L801.7 574.9 L798.0 589.6 L795.4 605.5 L794.2 622.3 L794.4 639.6 L796.1 657.3 L799.2 674.9 L803.6 692.3 L809.3 709.1 L816.1 724.9 L823.8 739.6 L832.2 753.0 L841.0 764.6 L849.9 774.4 L858.6 782.3 L866.7 788.0 L873.7 791.4 L878.4 792.6" fill="none" stroke="#5ac88a" stroke-width="0.9"/><path d="M844.2 540.2 L840.6 541.2 L835.5 544.2 L830.1 549.1 L824.6 555.9 L819.5 564.4 L814.8 574.5 L810.9 586.0 L807.9 598.7 L805.9 612.4 L805.0 626.9 L805.3 641.9 L806.9 657.2 L809.6 672.5 L813.4 687.5 L818.3 701.9 L824.1 715.7 L830.6 728.4 L837.7 739.9 L845.2 750.0 L852.7 758.5 L860.0 765.3 L866.8 770.2 L872.7 773.2 L876.6 774.2" fill="none" stroke="#9ea22c" stroke-width="8.6" stroke-linejoin="round"/><path d="M844.2 533.6 L840.1 534.7 L834.4 537.8 L828.2 543.0 L822.0 550.2 L816.0 559.1 L810.6 569.8 L806.0 581.9 L802.4 595.4 L799.9 609.9 L798.7 625.2 L798.8 641.1 L800.2 657.2 L803.0 673.3 L807.1 689.2 L812.3 704.5 L818.6 719.0 L825.7 732.4 L833.5 744.6 L841.7 755.2 L850.0 764.2 L858.1 771.4 L865.7 776.6 L872.2 779.7 L876.6 780.8" fill="none" stroke="#aeacd2" stroke-width="5" stroke-linejoin="round"/><path d="M844.2 536.2 L840.3 537.2 L834.8 540.3 L828.9 545.4 L823.0 552.4 L817.4 561.2 L812.3 571.6 L808.0 583.5 L804.6 596.7 L802.3 610.9 L801.2 625.9 L801.4 641.4 L802.9 657.2 L805.6 673.0 L809.6 688.5 L814.7 703.5 L820.8 717.7 L827.7 730.8 L835.2 742.7 L843.1 753.2 L851.1 762.0 L858.9 769.0 L866.1 774.0 L872.4 777.1 L876.6 778.2" fill="none" stroke="#5ac88a" stroke-width="0.9"/><path d="M846.3 554.4 L843.1 555.3 L838.7 557.9 L833.9 562.2 L829.1 568.2 L824.6 575.6 L820.6 584.5 L817.1 594.6 L814.5 605.7 L812.7 617.8 L812.0 630.5 L812.3 643.7 L813.6 657.1 L816.0 670.5 L819.4 683.6 L823.6 696.4 L828.7 708.4 L834.5 719.6 L840.7 729.7 L847.2 738.5 L853.8 746.0 L860.2 751.9 L866.2 756.3 L871.4 758.9 L874.8 759.8" fill="none" stroke="#9ea22c" stroke-width="8.6" stroke-linejoin="round"/><path d="M846.3 547.8 L842.6 548.7 L837.5 551.5 L832.0 556.1 L826.5 562.4 L821.2 570.4 L816.3 579.8 L812.2 590.6 L809.0 602.4 L806.8 615.3 L805.7 628.8 L805.7 642.8 L807.0 657.1 L809.5 671.3 L813.0 685.4 L817.7 698.9 L823.3 711.7 L829.6 723.6 L836.5 734.3 L843.8 743.8 L851.1 751.7 L858.4 758.0 L865.1 762.6 L870.9 765.4 L874.8 766.4" fill="none" stroke="#aeacd2" stroke-width="5" stroke-linejoin="round"/><path d="M846.3 550.4 L842.8 551.3 L838.0 554.0 L832.8 558.5 L827.5 564.7 L822.5 572.4 L818.0 581.6 L814.2 592.1 L811.2 603.7 L809.1 616.3 L808.2 629.5 L808.3 643.2 L809.6 657.1 L812.0 671.0 L815.5 684.7 L820.0 697.9 L825.4 710.4 L831.5 722.0 L838.2 732.5 L845.1 741.7 L852.2 749.5 L859.1 755.6 L865.5 760.1 L871.1 762.8 L874.8 763.8" fill="none" stroke="#5ac88a" stroke-width="0.9"/><path d="M848.4 568.6 L845.6 569.4 L841.8 571.6 L837.7 575.3 L833.6 580.4 L829.8 586.9 L826.3 594.5 L823.3 603.2 L821.1 612.8 L819.6 623.2 L818.9 634.1 L819.2 645.4 L820.4 657.0 L822.4 668.5 L825.3 679.8 L829.0 690.8 L833.4 701.2 L838.3 710.8 L843.7 719.5 L849.3 727.1 L855.0 733.5 L860.5 738.6 L865.6 742.3 L870.0 744.6 L873.0 745.3" fill="none" stroke="#9ea22c" stroke-width="8.6" stroke-linejoin="round"/><path d="M848.4 562.0 L845.2 562.8 L840.7 565.2 L835.8 569.2 L831.0 574.7 L826.3 581.6 L822.1 589.8 L818.5 599.2 L815.6 609.5 L813.6 620.6 L812.6 632.4 L812.7 644.6 L813.8 657.0 L815.9 669.4 L819.0 681.5 L823.1 693.3 L827.9 704.5 L833.4 714.8 L839.5 724.1 L845.8 732.3 L852.3 739.2 L858.6 744.7 L864.5 748.7 L869.6 751.1 L873.0 751.9" fill="none" stroke="#aeacd2" stroke-width="5" stroke-linejoin="round"/><path d="M848.4 564.6 L845.3 565.4 L841.1 567.7 L836.6 571.6 L832.0 577.0 L827.7 583.7 L823.7 591.7 L820.4 600.7 L817.8 610.8 L816.0 621.6 L815.1 633.1 L815.2 644.9 L816.4 657.0 L818.4 669.0 L821.5 680.9 L825.4 692.3 L830.1 703.2 L835.4 713.2 L841.1 722.3 L847.2 730.2 L853.3 737.0 L859.3 742.3 L864.9 746.2 L869.8 748.5 L873.0 749.3" fill="none" stroke="#5ac88a" stroke-width="0.9"/><path d="M850.5 582.8 L848.1 583.4 L845.0 585.3 L841.6 588.4 L838.1 592.7 L834.9 598.1 L832.0 604.5 L829.5 611.8 L827.7 619.8 L826.4 628.5 L825.9 637.7 L826.1 647.2 L827.1 656.9 L828.8 666.5 L831.3 676.0 L834.4 685.2 L838.0 693.9 L842.2 701.9 L846.7 709.2 L851.4 715.6 L856.1 721.0 L860.7 725.3 L865.0 728.4 L868.7 730.3 L871.2 730.9" fill="none" stroke="#9ea22c" stroke-width="8.6" stroke-linejoin="round"/><path d="M850.5 576.2 L847.7 576.9 L843.8 578.9 L839.7 582.3 L835.5 587.0 L831.4 592.9 L827.8 599.8 L824.7 607.8 L822.2 616.5 L820.5 626.0 L819.6 636.0 L819.6 646.3 L820.5 656.9 L822.3 667.4 L825.0 677.7 L828.4 687.7 L832.6 697.2 L837.3 706.0 L842.5 713.9 L847.9 720.9 L853.4 726.7 L858.8 731.4 L863.9 734.8 L868.3 736.8 L871.2 737.5" fill="none" stroke="#aeacd2" stroke-width="5" stroke-linejoin="round"/><path d="M850.5 578.8 L847.9 579.5 L844.3 581.5 L840.4 584.7 L836.5 589.3 L832.8 594.9 L829.4 601.7 L826.6 609.3 L824.3 617.8 L822.8 627.0 L822.1 636.7 L822.2 646.7 L823.1 656.9 L824.9 667.1 L827.4 677.1 L830.8 686.7 L834.7 695.9 L839.2 704.4 L844.1 712.1 L849.3 718.8 L854.5 724.5 L859.6 729.0 L864.3 732.3 L868.4 734.3 L871.2 734.9" fill="none" stroke="#5ac88a" stroke-width="0.9"/><path d="M852.5 597.0 L850.7 597.5 L848.1 599.0 L845.4 601.5 L842.6 605.0 L840.0 609.3 L837.7 614.5 L835.8 620.4 L834.3 626.9 L833.3 633.9 L832.9 641.3 L833.0 649.0 L833.9 656.8 L835.3 664.6 L837.2 672.2 L839.7 679.6 L842.7 686.6 L846.0 693.1 L849.7 699.0 L853.4 704.2 L857.3 708.5 L861.0 712.0 L864.4 714.5 L867.4 716.0 L869.4 716.5" fill="none" stroke="#9ea22c" stroke-width="8.6" stroke-linejoin="round"/><path d="M852.5 590.4 L850.2 591.0 L847.0 592.7 L843.5 595.5 L840.0 599.3 L836.6 604.1 L833.5 609.8 L830.9 616.4 L828.8 623.6 L827.3 631.4 L826.6 639.6 L826.5 648.1 L827.2 656.8 L828.7 665.4 L830.9 673.9 L833.8 682.1 L837.2 689.9 L841.1 697.2 L845.4 703.7 L850.0 709.4 L854.6 714.2 L859.1 718.1 L863.3 720.9 L866.9 722.5 L869.4 723.1" fill="none" stroke="#aeacd2" stroke-width="5" stroke-linejoin="round"/><path d="M852.5 593.0 L850.4 593.5 L847.4 595.2 L844.2 597.9 L841.0 601.5 L837.9 606.2 L835.2 611.7 L832.8 617.9 L830.9 624.9 L829.7 632.4 L829.0 640.3 L829.1 648.4 L829.9 656.8 L831.3 665.1 L833.4 673.3 L836.1 681.2 L839.4 688.6 L843.1 695.6 L847.1 701.8 L851.3 707.3 L855.6 712.0 L859.8 715.7 L863.7 718.3 L867.1 720.0 L869.4 720.5" fill="none" stroke="#5ac88a" stroke-width="0.9"/><path d="M854.6 611.2 L853.2 611.6 L851.3 612.7 L849.2 614.7 L847.1 617.3 L845.2 620.6 L843.4 624.5 L842.0 629.0 L840.8 633.9 L840.1 639.3 L839.8 644.9 L840.0 650.7 L840.6 656.7 L841.7 662.6 L843.2 668.4 L845.1 674.0 L847.3 679.4 L849.9 684.3 L852.6 688.8 L855.5 692.7 L858.4 696.0 L861.2 698.6 L863.8 700.6 L866.1 701.7 L867.6 702.1" fill="none" stroke="#9ea22c" stroke-width="8.6" stroke-linejoin="round"/><path d="M854.6 604.6 L852.7 605.0 L850.1 606.4 L847.3 608.6 L844.5 611.6 L841.7 615.4 L839.2 619.8 L837.1 625.0 L835.4 630.6 L834.2 636.7 L833.5 643.2 L833.5 649.9 L834.0 656.7 L835.1 663.4 L836.9 670.1 L839.1 676.6 L841.9 682.7 L845.0 688.3 L848.4 693.5 L852.0 697.9 L855.7 701.7 L859.3 704.7 L862.7 706.9 L865.6 708.3 L867.6 708.7" fill="none" stroke="#aeacd2" stroke-width="5" stroke-linejoin="round"/><path d="M854.6 607.2 L852.9 607.6 L850.6 608.9 L848.1 611.0 L845.5 613.8 L843.1 617.4 L840.9 621.7 L839.0 626.5 L837.5 631.9 L836.5 637.7 L836.0 643.9 L836.0 650.2 L836.6 656.7 L837.7 663.1 L839.4 669.4 L841.5 675.6 L844.0 681.4 L846.9 686.8 L850.1 691.6 L853.4 695.9 L856.8 699.5 L860.1 702.3 L863.2 704.4 L865.8 705.7 L867.6 706.1" fill="none" stroke="#5ac88a" stroke-width="0.9"/><g clip-path="url(#bodyclip)"><ellipse cx="1292" cy="588.0" rx="16" ry="34" fill="none" stroke="#b01a12" stroke-width="5"/><ellipse cx="1299" cy="586.0" rx="21" ry="45" fill="none" stroke="#b01a12" stroke-width="5"/><ellipse cx="1306" cy="584.0" rx="26" ry="56" fill="none" stroke="#b01a12" stroke-width="5"/><ellipse cx="1313" cy="582.0" rx="31" ry="67" fill="none" stroke="#b01a12" stroke-width="5"/><ellipse cx="1320" cy="580.0" rx="36" ry="78" fill="none" stroke="#b01a12" stroke-width="5"/><path d="M1318.0 490.7 A24.9 83.0 0 0 0 1295.6 548.8" fill="none" stroke="#c01c12" stroke-width="4.5" opacity="0.7"/><path d="M1325.8 469.4 A30.9 102.9 0 0 0 1298.0 541.4" fill="none" stroke="#cc2614" stroke-width="4.5" opacity="0.7"/><path d="M1333.6 448.8 A36.6 122.2 0 0 0 1300.6 534.3" fill="none" stroke="#c01c12" stroke-width="4.5" opacity="0.7"/><path d="M1341.4 455.1 A34.3 114.5 0 0 0 1310.5 535.2" fill="none" stroke="#cc2614" stroke-width="4.5" opacity="0.7"/><path d="M1349.2 433.2 A40.5 135.0 0 0 0 1312.8 527.7" fill="none" stroke="#c01c12" stroke-width="4.5" opacity="0.7"/><path d="M1357.0 415.3 A45.5 151.5 0 0 0 1316.1 521.4" fill="none" stroke="#cc2614" stroke-width="4.5" opacity="0.7"/><path d="M1364.8 447.5 A35.4 117.9 0 0 0 1333.0 530.1" fill="none" stroke="#c01c12" stroke-width="4.5" opacity="0.7"/><path d="M1372.6 430.4 A40.1 133.7 0 0 0 1336.5 524.0" fill="none" stroke="#cc2614" stroke-width="4.5" opacity="0.7"/><path d="M1380.4 416.4 A43.9 146.3 0 0 0 1340.9 518.8" fill="none" stroke="#c01c12" stroke-width="4.5" opacity="0.7"/><path d="M1388.2 434.2 A38.1 127.1 0 0 0 1353.9 523.2" fill="none" stroke="#cc2614" stroke-width="4.5" opacity="0.7"/><path d="M1396.0 420.3 A41.9 139.7 0 0 0 1358.3 518.1" fill="none" stroke="#d8400f" stroke-width="4.5" opacity="0.7"/><path d="M1403.8 407.9 A45.2 150.7 0 0 0 1363.1 513.4" fill="none" stroke="#e25a16" stroke-width="4.5" opacity="0.7"/><path d="M1411.6 440.0 A35.2 117.3 0 0 0 1379.9 522.1" fill="none" stroke="#d8400f" stroke-width="4.5" opacity="0.7"/><path d="M1419.4 422.9 A39.9 133.0 0 0 0 1383.5 516.0" fill="none" stroke="#e25a16" stroke-width="4.5" opacity="0.7"/><path d="M1427.2 408.9 A43.7 145.6 0 0 0 1387.9 510.8" fill="none" stroke="#d8400f" stroke-width="4.5" opacity="0.7"/><path d="M1435.0 426.7 A37.9 126.5 0 0 0 1400.9 515.2" fill="none" stroke="#e25a16" stroke-width="4.5" opacity="0.7"/><path d="M1442.8 412.8 A41.7 139.0 0 0 0 1405.3 510.1" fill="none" stroke="#d8400f" stroke-width="4.5" opacity="0.7"/><path d="M1450.6 400.5 A45.0 149.9 0 0 0 1410.1 505.4" fill="none" stroke="#e25a16" stroke-width="4.5" opacity="0.7"/><path d="M1458.4 432.4 A35.0 116.7 0 0 0 1426.9 514.0" fill="none" stroke="#d8400f" stroke-width="4.5" opacity="0.7"/><path d="M1466.2 415.4 A39.7 132.3 0 0 0 1430.5 508.0" fill="none" stroke="#e25a16" stroke-width="4.5" opacity="0.7"/><path d="M1474.0 401.5 A43.4 144.8 0 0 0 1434.9 502.9" fill="none" stroke="#ea7414" stroke-width="4.5" opacity="0.7"/><path d="M1481.8 419.1 A37.7 125.8 0 0 0 1447.8 507.2" fill="none" stroke="#f08a1c" stroke-width="4.5" opacity="0.7"/><path d="M1489.6 405.3 A41.5 138.3 0 0 0 1452.3 502.1" fill="none" stroke="#ea7414" stroke-width="4.5" opacity="0.7"/><path d="M1497.4 393.1 A44.7 149.1 0 0 0 1457.1 497.5" fill="none" stroke="#f08a1c" stroke-width="4.5" opacity="0.7"/><path d="M1505.2 424.8 A34.8 116.1 0 0 0 1473.9 506.0" fill="none" stroke="#ea7414" stroke-width="4.5" opacity="0.7"/><path d="M1513.0 407.9 A39.5 131.6 0 0 0 1477.5 500.0" fill="none" stroke="#f08a1c" stroke-width="4.5" opacity="0.7"/><path d="M1520.8 394.1 A43.2 144.0 0 0 0 1481.9 494.9" fill="none" stroke="#ea7414" stroke-width="4.5" opacity="0.7"/><path d="M1528.6 411.6 A37.5 125.1 0 0 0 1494.8 499.2" fill="none" stroke="#f08a1c" stroke-width="4.5" opacity="0.7"/><path d="M1536.4 397.9 A41.3 137.5 0 0 0 1499.3 494.1" fill="none" stroke="#ea7414" stroke-width="4.5" opacity="0.7"/><path d="M1544.2 385.7 A44.5 148.3 0 0 0 1504.2 489.5" fill="none" stroke="#f08a1c" stroke-width="4.5" opacity="0.7"/><path d="M1552.0 417.2 A34.6 115.4 0 0 0 1520.8 498.0" fill="none" stroke="#ea7414" stroke-width="4.5" opacity="0.7"/><path d="M1559.8 400.4 A39.3 130.9 0 0 0 1524.5 492.0" fill="none" stroke="#f08a1c" stroke-width="4.5" opacity="0.7"/><path d="M1567.6 386.7 A43.0 143.3 0 0 0 1528.9 486.9" fill="none" stroke="#ea7414" stroke-width="4.5" opacity="0.7"/><path d="M1575.4 404.1 A37.3 124.5 0 0 0 1541.8 491.2" fill="none" stroke="#f08a1c" stroke-width="4.5" opacity="0.7"/><path d="M1583.2 390.4 A41.0 136.8 0 0 0 1546.3 486.1" fill="none" stroke="#f29a22" stroke-width="4.5" opacity="0.7"/><path d="M1591.0 378.3 A44.3 147.5 0 0 0 1551.2 481.5" fill="none" stroke="#ec7e18" stroke-width="4.5" opacity="0.7"/><path d="M1598.8 409.6 A34.4 114.8 0 0 0 1567.8 490.0" fill="none" stroke="#f29a22" stroke-width="4.5" opacity="0.7"/><path d="M1606.6 392.9 A39.1 130.2 0 0 0 1571.4 484.0" fill="none" stroke="#ec7e18" stroke-width="4.5" opacity="0.7"/><path d="M1614.4 379.2 A42.7 142.5 0 0 0 1575.9 479.0" fill="none" stroke="#f29a22" stroke-width="4.5" opacity="0.7"/><path d="M1622.2 396.6 A37.1 123.8 0 0 0 1588.8 483.2" fill="none" stroke="#ec7e18" stroke-width="4.5" opacity="0.7"/><path d="M1630.0 382.9 A40.8 136.0 0 0 0 1593.3 478.2" fill="none" stroke="#f29a22" stroke-width="4.5" opacity="0.7"/><path d="M1637.8 370.9 A44.0 146.7 0 0 0 1598.2 473.6" fill="none" stroke="#ec7e18" stroke-width="4.5" opacity="0.7"/><path d="M1645.6 402.0 A34.3 114.2 0 0 0 1614.8 482.0" fill="none" stroke="#f29a22" stroke-width="4.5" opacity="0.7"/><path d="M1653.4 385.4 A38.9 129.5 0 0 0 1618.4 476.0" fill="none" stroke="#ec7e18" stroke-width="4.5" opacity="0.7"/><path d="M1661.2 371.8 A42.5 141.7 0 0 0 1622.9 471.0" fill="none" stroke="#f29a22" stroke-width="4.5" opacity="0.7"/><path d="M1669.0 389.0 A36.9 123.1 0 0 0 1635.8 475.2" fill="none" stroke="#ec7e18" stroke-width="4.5" opacity="0.7"/><path d="M1676.8 375.5 A40.6 135.3 0 0 0 1640.3 470.2" fill="none" stroke="#f29a22" stroke-width="4.5" opacity="0.7"/><path d="M1684.6 363.5 A43.8 145.9 0 0 0 1645.2 465.6" fill="none" stroke="#ec7e18" stroke-width="4.5" opacity="0.7"/><path d="M1692.4 394.5 A34.1 113.6 0 0 0 1661.7 474.0" fill="none" stroke="#f29a22" stroke-width="4.5" opacity="0.7"/><path d="M1700.2 377.9 A38.6 128.8 0 0 0 1665.4 468.0" fill="none" stroke="#ec7e18" stroke-width="4.5" opacity="0.7"/><path d="M1318.0 490.7 A24.9 83.0 0 0 1 1318.0 656.6" fill="none" stroke="#c01c12" stroke-width="7.2"/><path d="M1318.0 490.7 A24.9 83.0 0 0 1 1318.0 656.6" fill="none" stroke="#e85a40" stroke-width="1.8" opacity="0.55" transform="translate(-1 0)"/><path d="M1325.8 469.4 A30.9 102.9 0 0 1 1325.8 675.1" fill="none" stroke="#cc2614" stroke-width="7.2"/><path d="M1325.8 469.4 A30.9 102.9 0 0 1 1325.8 675.1" fill="none" stroke="#e85a40" stroke-width="1.8" opacity="0.55" transform="translate(-1 0)"/><path d="M1333.6 448.8 A36.6 122.2 0 0 1 1333.6 693.1" fill="none" stroke="#c01c12" stroke-width="7.2"/><path d="M1333.6 448.8 A36.6 122.2 0 0 1 1333.6 693.1" fill="none" stroke="#e85a40" stroke-width="1.8" opacity="0.55" transform="translate(-1 0)"/><path d="M1341.4 455.1 A34.3 114.5 0 0 1 1341.4 684.0" fill="none" stroke="#cc2614" stroke-width="7.2"/><path d="M1341.4 455.1 A34.3 114.5 0 0 1 1341.4 684.0" fill="none" stroke="#e85a40" stroke-width="1.8" opacity="0.55" transform="translate(-1 0)"/><path d="M1349.2 433.2 A40.5 135.0 0 0 1 1349.2 703.1" fill="none" stroke="#c01c12" stroke-width="7.2"/><path d="M1349.2 433.2 A40.5 135.0 0 0 1 1349.2 703.1" fill="none" stroke="#e85a40" stroke-width="1.8" opacity="0.55" transform="translate(-1 0)"/><path d="M1357.0 415.3 A45.5 151.5 0 0 1 1357.0 718.3" fill="none" stroke="#cc2614" stroke-width="7.2"/><path d="M1357.0 415.3 A45.5 151.5 0 0 1 1357.0 718.3" fill="none" stroke="#e85a40" stroke-width="1.8" opacity="0.55" transform="translate(-1 0)"/><path d="M1364.8 447.5 A35.4 117.9 0 0 1 1364.8 683.4" fill="none" stroke="#c01c12" stroke-width="7.2"/><path d="M1364.8 447.5 A35.4 117.9 0 0 1 1364.8 683.4" fill="none" stroke="#e85a40" stroke-width="1.8" opacity="0.55" transform="translate(-1 0)"/><path d="M1372.6 430.4 A40.1 133.7 0 0 1 1372.6 697.8" fill="none" stroke="#cc2614" stroke-width="7.2"/><path d="M1372.6 430.4 A40.1 133.7 0 0 1 1372.6 697.8" fill="none" stroke="#e85a40" stroke-width="1.8" opacity="0.55" transform="translate(-1 0)"/><path d="M1380.4 416.4 A43.9 146.3 0 0 1 1380.4 709.0" fill="none" stroke="#c01c12" stroke-width="7.2"/><path d="M1380.4 416.4 A43.9 146.3 0 0 1 1380.4 709.0" fill="none" stroke="#e85a40" stroke-width="1.8" opacity="0.55" transform="translate(-1 0)"/><path d="M1388.2 434.2 A38.1 127.1 0 0 1 1388.2 688.5" fill="none" stroke="#cc2614" stroke-width="7.2"/><path d="M1388.2 434.2 A38.1 127.1 0 0 1 1388.2 688.5" fill="none" stroke="#e85a40" stroke-width="1.8" opacity="0.55" transform="translate(-1 0)"/><path d="M1396.0 420.3 A41.9 139.7 0 0 1 1396.0 699.7" fill="none" stroke="#d8400f" stroke-width="7.2"/><path d="M1396.0 420.3 A41.9 139.7 0 0 1 1396.0 699.7" fill="none" stroke="#f48a50" stroke-width="1.8" opacity="0.55" transform="translate(-1 0)"/><path d="M1403.8 407.9 A45.2 150.7 0 0 1 1403.8 709.3" fill="none" stroke="#e25a16" stroke-width="7.2"/><path d="M1403.8 407.9 A45.2 150.7 0 0 1 1403.8 709.3" fill="none" stroke="#f48a50" stroke-width="1.8" opacity="0.55" transform="translate(-1 0)"/><path d="M1411.6 440.0 A35.2 117.3 0 0 1 1411.6 674.5" fill="none" stroke="#d8400f" stroke-width="7.2"/><path d="M1411.6 440.0 A35.2 117.3 0 0 1 1411.6 674.5" fill="none" stroke="#f48a50" stroke-width="1.8" opacity="0.55" transform="translate(-1 0)"/><path d="M1419.4 422.9 A39.9 133.0 0 0 1 1419.4 688.9" fill="none" stroke="#e25a16" stroke-width="7.2"/><path d="M1419.4 422.9 A39.9 133.0 0 0 1 1419.4 688.9" fill="none" stroke="#f48a50" stroke-width="1.8" opacity="0.55" transform="translate(-1 0)"/><path d="M1427.2 408.9 A43.7 145.6 0 0 1 1427.2 700.1" fill="none" stroke="#d8400f" stroke-width="7.2"/><path d="M1427.2 408.9 A43.7 145.6 0 0 1 1427.2 700.1" fill="none" stroke="#f48a50" stroke-width="1.8" opacity="0.55" transform="translate(-1 0)"/><path d="M1435.0 426.7 A37.9 126.5 0 0 1 1435.0 679.6" fill="none" stroke="#e25a16" stroke-width="7.2"/><path d="M1435.0 426.7 A37.9 126.5 0 0 1 1435.0 679.6" fill="none" stroke="#f48a50" stroke-width="1.8" opacity="0.55" transform="translate(-1 0)"/><path d="M1442.8 412.8 A41.7 139.0 0 0 1 1442.8 690.8" fill="none" stroke="#d8400f" stroke-width="7.2"/><path d="M1442.8 412.8 A41.7 139.0 0 0 1 1442.8 690.8" fill="none" stroke="#f48a50" stroke-width="1.8" opacity="0.55" transform="translate(-1 0)"/><path d="M1450.6 400.5 A45.0 149.9 0 0 1 1450.6 700.3" fill="none" stroke="#e25a16" stroke-width="7.2"/><path d="M1450.6 400.5 A45.0 149.9 0 0 1 1450.6 700.3" fill="none" stroke="#f48a50" stroke-width="1.8" opacity="0.55" transform="translate(-1 0)"/><path d="M1458.4 432.4 A35.0 116.7 0 0 1 1458.4 665.7" fill="none" stroke="#d8400f" stroke-width="7.2"/><path d="M1458.4 432.4 A35.0 116.7 0 0 1 1458.4 665.7" fill="none" stroke="#f48a50" stroke-width="1.8" opacity="0.55" transform="translate(-1 0)"/><path d="M1466.2 415.4 A39.7 132.3 0 0 1 1466.2 680.0" fill="none" stroke="#e25a16" stroke-width="7.2"/><path d="M1466.2 415.4 A39.7 132.3 0 0 1 1466.2 680.0" fill="none" stroke="#f48a50" stroke-width="1.8" opacity="0.55" transform="translate(-1 0)"/><path d="M1474.0 401.5 A43.4 144.8 0 0 1 1474.0 691.1" fill="none" stroke="#ea7414" stroke-width="7.2"/><path d="M1474.0 401.5 A43.4 144.8 0 0 1 1474.0 691.1" fill="none" stroke="#f8b060" stroke-width="1.8" opacity="0.55" transform="translate(-1 0)"/><path d="M1481.8 419.1 A37.7 125.8 0 0 1 1481.8 670.7" fill="none" stroke="#f08a1c" stroke-width="7.2"/><path d="M1481.8 419.1 A37.7 125.8 0 0 1 1481.8 670.7" fill="none" stroke="#f8b060" stroke-width="1.8" opacity="0.55" transform="translate(-1 0)"/><path d="M1489.6 405.3 A41.5 138.3 0 0 1 1489.6 681.8" fill="none" stroke="#ea7414" stroke-width="7.2"/><path d="M1489.6 405.3 A41.5 138.3 0 0 1 1489.6 681.8" fill="none" stroke="#f8b060" stroke-width="1.8" opacity="0.55" transform="translate(-1 0)"/><path d="M1497.4 393.1 A44.7 149.1 0 0 1 1497.4 691.3" fill="none" stroke="#f08a1c" stroke-width="7.2"/><path d="M1497.4 393.1 A44.7 149.1 0 0 1 1497.4 691.3" fill="none" stroke="#f8b060" stroke-width="1.8" opacity="0.55" transform="translate(-1 0)"/><path d="M1505.2 424.8 A34.8 116.1 0 0 1 1505.2 656.9" fill="none" stroke="#ea7414" stroke-width="7.2"/><path d="M1505.2 424.8 A34.8 116.1 0 0 1 1505.2 656.9" fill="none" stroke="#f8b060" stroke-width="1.8" opacity="0.55" transform="translate(-1 0)"/><path d="M1513.0 407.9 A39.5 131.6 0 0 1 1513.0 671.1" fill="none" stroke="#f08a1c" stroke-width="7.2"/><path d="M1513.0 407.9 A39.5 131.6 0 0 1 1513.0 671.1" fill="none" stroke="#f8b060" stroke-width="1.8" opacity="0.55" transform="translate(-1 0)"/><path d="M1520.8 394.1 A43.2 144.0 0 0 1 1520.8 682.1" fill="none" stroke="#ea7414" stroke-width="7.2"/><path d="M1520.8 394.1 A43.2 144.0 0 0 1 1520.8 682.1" fill="none" stroke="#f8b060" stroke-width="1.8" opacity="0.55" transform="translate(-1 0)"/><path d="M1528.6 411.6 A37.5 125.1 0 0 1 1528.6 661.9" fill="none" stroke="#f08a1c" stroke-width="7.2"/><path d="M1528.6 411.6 A37.5 125.1 0 0 1 1528.6 661.9" fill="none" stroke="#f8b060" stroke-width="1.8" opacity="0.55" transform="translate(-1 0)"/><path d="M1536.4 397.9 A41.3 137.5 0 0 1 1536.4 672.9" fill="none" stroke="#ea7414" stroke-width="7.2"/><path d="M1536.4 397.9 A41.3 137.5 0 0 1 1536.4 672.9" fill="none" stroke="#f8b060" stroke-width="1.8" opacity="0.55" transform="translate(-1 0)"/><path d="M1544.2 385.7 A44.5 148.3 0 0 1 1544.2 682.3" fill="none" stroke="#f08a1c" stroke-width="7.2"/><path d="M1544.2 385.7 A44.5 148.3 0 0 1 1544.2 682.3" fill="none" stroke="#f8b060" stroke-width="1.8" opacity="0.55" transform="translate(-1 0)"/><path d="M1552.0 417.2 A34.6 115.4 0 0 1 1552.0 648.1" fill="none" stroke="#ea7414" stroke-width="7.2"/><path d="M1552.0 417.2 A34.6 115.4 0 0 1 1552.0 648.1" fill="none" stroke="#f8b060" stroke-width="1.8" opacity="0.55" transform="translate(-1 0)"/><path d="M1559.8 400.4 A39.3 130.9 0 0 1 1559.8 662.2" fill="none" stroke="#f08a1c" stroke-width="7.2"/><path d="M1559.8 400.4 A39.3 130.9 0 0 1 1559.8 662.2" fill="none" stroke="#f8b060" stroke-width="1.8" opacity="0.55" transform="translate(-1 0)"/><path d="M1567.6 386.7 A43.0 143.3 0 0 1 1567.6 673.2" fill="none" stroke="#ea7414" stroke-width="7.2"/><path d="M1567.6 386.7 A43.0 143.3 0 0 1 1567.6 673.2" fill="none" stroke="#f8b060" stroke-width="1.8" opacity="0.55" transform="translate(-1 0)"/><path d="M1575.4 404.1 A37.3 124.5 0 0 1 1575.4 653.0" fill="none" stroke="#f08a1c" stroke-width="7.2"/><path d="M1575.4 404.1 A37.3 124.5 0 0 1 1575.4 653.0" fill="none" stroke="#f8b060" stroke-width="1.8" opacity="0.55" transform="translate(-1 0)"/><path d="M1583.2 390.4 A41.0 136.8 0 0 1 1583.2 664.0" fill="none" stroke="#f29a22" stroke-width="7.2"/><path d="M1583.2 390.4 A41.0 136.8 0 0 1 1583.2 664.0" fill="none" stroke="#fcc070" stroke-width="1.8" opacity="0.55" transform="translate(-1 0)"/><path d="M1591.0 378.3 A44.3 147.5 0 0 1 1591.0 673.3" fill="none" stroke="#ec7e18" stroke-width="7.2"/><path d="M1591.0 378.3 A44.3 147.5 0 0 1 1591.0 673.3" fill="none" stroke="#fcc070" stroke-width="1.8" opacity="0.55" transform="translate(-1 0)"/><path d="M1598.8 409.6 A34.4 114.8 0 0 1 1598.8 639.3" fill="none" stroke="#f29a22" stroke-width="7.2"/><path d="M1598.8 409.6 A34.4 114.8 0 0 1 1598.8 639.3" fill="none" stroke="#fcc070" stroke-width="1.8" opacity="0.55" transform="translate(-1 0)"/><path d="M1606.6 392.9 A39.1 130.2 0 0 1 1606.6 653.3" fill="none" stroke="#ec7e18" stroke-width="7.2"/><path d="M1606.6 392.9 A39.1 130.2 0 0 1 1606.6 653.3" fill="none" stroke="#fcc070" stroke-width="1.8" opacity="0.55" transform="translate(-1 0)"/><path d="M1614.4 379.2 A42.7 142.5 0 0 1 1614.4 664.2" fill="none" stroke="#f29a22" stroke-width="7.2"/><path d="M1614.4 379.2 A42.7 142.5 0 0 1 1614.4 664.2" fill="none" stroke="#fcc070" stroke-width="1.8" opacity="0.55" transform="translate(-1 0)"/><path d="M1622.2 396.6 A37.1 123.8 0 0 1 1622.2 644.1" fill="none" stroke="#ec7e18" stroke-width="7.2"/><path d="M1622.2 396.6 A37.1 123.8 0 0 1 1622.2 644.1" fill="none" stroke="#fcc070" stroke-width="1.8" opacity="0.55" transform="translate(-1 0)"/><path d="M1630.0 382.9 A40.8 136.0 0 0 1 1630.0 655.0" fill="none" stroke="#f29a22" stroke-width="7.2"/><path d="M1630.0 382.9 A40.8 136.0 0 0 1 1630.0 655.0" fill="none" stroke="#fcc070" stroke-width="1.8" opacity="0.55" transform="translate(-1 0)"/><path d="M1637.8 370.9 A44.0 146.7 0 0 1 1637.8 664.3" fill="none" stroke="#ec7e18" stroke-width="7.2"/><path d="M1637.8 370.9 A44.0 146.7 0 0 1 1637.8 664.3" fill="none" stroke="#fcc070" stroke-width="1.8" opacity="0.55" transform="translate(-1 0)"/><path d="M1645.6 402.0 A34.3 114.2 0 0 1 1645.6 630.4" fill="none" stroke="#f29a22" stroke-width="7.2"/><path d="M1645.6 402.0 A34.3 114.2 0 0 1 1645.6 630.4" fill="none" stroke="#fcc070" stroke-width="1.8" opacity="0.55" transform="translate(-1 0)"/><path d="M1653.4 385.4 A38.9 129.5 0 0 1 1653.4 644.4" fill="none" stroke="#ec7e18" stroke-width="7.2"/><path d="M1653.4 385.4 A38.9 129.5 0 0 1 1653.4 644.4" fill="none" stroke="#fcc070" stroke-width="1.8" opacity="0.55" transform="translate(-1 0)"/><path d="M1661.2 371.8 A42.5 141.7 0 0 1 1661.2 655.2" fill="none" stroke="#f29a22" stroke-width="7.2"/><path d="M1661.2 371.8 A42.5 141.7 0 0 1 1661.2 655.2" fill="none" stroke="#fcc070" stroke-width="1.8" opacity="0.55" transform="translate(-1 0)"/><path d="M1669.0 389.0 A36.9 123.1 0 0 1 1669.0 635.3" fill="none" stroke="#ec7e18" stroke-width="7.2"/><path d="M1669.0 389.0 A36.9 123.1 0 0 1 1669.0 635.3" fill="none" stroke="#fcc070" stroke-width="1.8" opacity="0.55" transform="translate(-1 0)"/><path d="M1676.8 375.5 A40.6 135.3 0 0 1 1676.8 646.1" fill="none" stroke="#f29a22" stroke-width="7.2"/><path d="M1676.8 375.5 A40.6 135.3 0 0 1 1676.8 646.1" fill="none" stroke="#fcc070" stroke-width="1.8" opacity="0.55" transform="translate(-1 0)"/><path d="M1684.6 363.5 A43.8 145.9 0 0 1 1684.6 655.3" fill="none" stroke="#ec7e18" stroke-width="7.2"/><path d="M1684.6 363.5 A43.8 145.9 0 0 1 1684.6 655.3" fill="none" stroke="#fcc070" stroke-width="1.8" opacity="0.55" transform="translate(-1 0)"/><path d="M1692.4 394.5 A34.1 113.6 0 0 1 1692.4 621.6" fill="none" stroke="#f29a22" stroke-width="7.2"/><path d="M1692.4 394.5 A34.1 113.6 0 0 1 1692.4 621.6" fill="none" stroke="#fcc070" stroke-width="1.8" opacity="0.55" transform="translate(-1 0)"/><path d="M1700.2 377.9 A38.6 128.8 0 0 1 1700.2 635.5" fill="none" stroke="#ec7e18" stroke-width="7.2"/><path d="M1700.2 377.9 A38.6 128.8 0 0 1 1700.2 635.5" fill="none" stroke="#fcc070" stroke-width="1.8" opacity="0.55" transform="translate(-1 0)"/><path d="M1300 439.6 L1652 383.4" stroke="#1a46a2" stroke-width="7.2" stroke-linecap="round"/><path d="M1300 438.1 L1652 381.9" stroke="#ffffff" stroke-width="1.1" opacity="0.22"/><path d="M1306 454.6 L1660 397.6" stroke="#1c4cae" stroke-width="7.2" stroke-linecap="round"/><path d="M1306 453.1 L1660 396.1" stroke="#ffffff" stroke-width="1.1" opacity="0.22"/><path d="M1296 473.9 L1680 411.2" stroke="#2a74c4" stroke-width="7.2" stroke-linecap="round"/><path d="M1296 472.4 L1680 409.7" stroke="#ffffff" stroke-width="1.1" opacity="0.22"/><path d="M1300 487.7 L1690 423.4" stroke="#1d50b0" stroke-width="7.2" stroke-linecap="round"/><path d="M1300 486.2 L1690 421.9" stroke="#ffffff" stroke-width="1.1" opacity="0.22"/><path d="M1560 457.3 L1700 434.0" stroke="#3ab4e0" stroke-width="7.2" stroke-linecap="round"/><path d="M1560 455.8 L1700 432.5" stroke="#ffffff" stroke-width="1.1" opacity="0.22"/><path d="M1320 513.2 L1712 447.4" stroke="#1a4aa8" stroke-width="7.2" stroke-linecap="round"/><path d="M1320 511.7 L1712 445.9" stroke="#ffffff" stroke-width="1.1" opacity="0.22"/><path d="M1350 522.6 L1722 459.4" stroke="#2470c2" stroke-width="7.2" stroke-linecap="round"/><path d="M1350 521.1 L1722 457.9" stroke="#ffffff" stroke-width="1.1" opacity="0.22"/><path d="M1330 562.7 L1728 493.6" stroke="#1d56b4" stroke-width="7.2" stroke-linecap="round"/><path d="M1330 561.2 L1728 492.1" stroke="#ffffff" stroke-width="1.1" opacity="0.22"/><path d="M1350 578.4 L1733 511.0" stroke="#2a7cc8" stroke-width="7.2" stroke-linecap="round"/><path d="M1350 576.9 L1733 509.5" stroke="#ffffff" stroke-width="1.1" opacity="0.22"/><path d="M1340 618.5 L1735 547.3" stroke="#1a52b0" stroke-width="7.2" stroke-linecap="round"/><path d="M1340 617.0 L1735 545.8" stroke="#ffffff" stroke-width="1.1" opacity="0.22"/><path d="M1590 584.3 L1718 561.1" stroke="#3aaee0" stroke-width="7.2" stroke-linecap="round"/><path d="M1590 582.8 L1718 559.6" stroke="#ffffff" stroke-width="1.1" opacity="0.22"/><path d="M1320 647.8 L1725 573.6" stroke="#1a44a0" stroke-width="7.2" stroke-linecap="round"/><path d="M1320 646.3 L1725 572.1" stroke="#ffffff" stroke-width="1.1" opacity="0.22"/><path d="M1320 663.8 L1712 591.3" stroke="#1c4aa8" stroke-width="7.2" stroke-linecap="round"/><path d="M1320 662.3 L1712 589.8" stroke="#ffffff" stroke-width="1.1" opacity="0.22"/><path d="M1340 679.2 L1705 611.0" stroke="#2468bc" stroke-width="7.2" stroke-linecap="round"/><path d="M1340 677.7 L1705 609.5" stroke="#ffffff" stroke-width="1.1" opacity="0.22"/><path d="M1300 701.2 L1695 626.7" stroke="#1a46a6" stroke-width="7.2" stroke-linecap="round"/><path d="M1300 699.7 L1695 625.2" stroke="#ffffff" stroke-width="1.1" opacity="0.22"/><path d="M1320 713.4 L1682 644.5" stroke="#1a4aa8" stroke-width="7.2" stroke-linecap="round"/><path d="M1320 711.9 L1682 643.0" stroke="#ffffff" stroke-width="1.1" opacity="0.22"/><path d="M1330 722.7 L1662 659.1" stroke="#2a6cc0" stroke-width="7.2" stroke-linecap="round"/><path d="M1330 721.2 L1662 657.6" stroke="#ffffff" stroke-width="1.1" opacity="0.22"/><path d="M1336 440 C 1356 470, 1372 540, 1370 612" fill="none" stroke="#f0d02a" stroke-width="6" stroke-linecap="round"/><path d="M1532 412 C 1562 470, 1580 560, 1560 650 C 1545 690, 1500 705, 1440 712" fill="none" stroke="#f0d02a" stroke-width="6" stroke-linecap="round"/><path d="M1596 425 C 1604 480, 1604 560, 1598 600" fill="none" stroke="#f0d02a" stroke-width="5.5" stroke-linecap="round"/><path d="M1634 395 C 1665 450, 1680 540, 1650 620 C 1625 670, 1580 690, 1520 700" fill="none" stroke="#f0d02a" stroke-width="6" stroke-linecap="round"/><path d="M1400 712 C 1480 706, 1540 690, 1580 640" fill="none" stroke="#f0d02a" stroke-width="5.5" stroke-linecap="round"/></g><path d="M1623.5 369.4 L1710.3 355 L1740 361.7 L1773.8 390 L1793.8 418.5 L1812 463.6 L1823.9 517 L1823.9 557 L1817.2 593.8 L1800.5 625.6 L1778.8 652.3 L1692 665.6 L1692 665.6 L1720.3 617.2 L1732 573.8 L1733.7 527 L1723.7 480 L1703.6 440 L1670 386.8 Z" fill="url(#capg)"/><path d="M1623.5 369.4 L1670 386.8 L1703.6 440 L1723.7 480 L1733.7 527 L1732 573.8 L1720.3 617.2 L1692 665.6 L1652 676 L1670 648 L1688 600 L1697 540 L1691 490 L1674 440 L1642 380 Z" fill="url(#capin)"/><path d="M1642 459.1 L1712 447.4" stroke="#1a4aa8" stroke-width="7.2" stroke-linecap="round"/><path d="M1652 471.3 L1722 459.4" stroke="#2470c2" stroke-width="7.2" stroke-linecap="round"/><path d="M1658 505.7 L1728 493.6" stroke="#1d56b4" stroke-width="7.2" stroke-linecap="round"/><path d="M1663 523.4 L1733 511.0" stroke="#2a7cc8" stroke-width="7.2" stroke-linecap="round"/><path d="M1665 560.0 L1735 547.3" stroke="#1a52b0" stroke-width="7.2" stroke-linecap="round"/><path d="M1648 573.8 L1718 561.1" stroke="#3aaee0" stroke-width="7.2" stroke-linecap="round"/><path d="M1655 586.4 L1725 573.6" stroke="#1a44a0" stroke-width="7.2" stroke-linecap="round"/><path d="M1642 604.2 L1712 591.3" stroke="#1c4aa8" stroke-width="7.2" stroke-linecap="round"/><path d="M1635 624.1 L1705 611.0" stroke="#2468bc" stroke-width="7.2" stroke-linecap="round"/></g></svg>
</body></html>
